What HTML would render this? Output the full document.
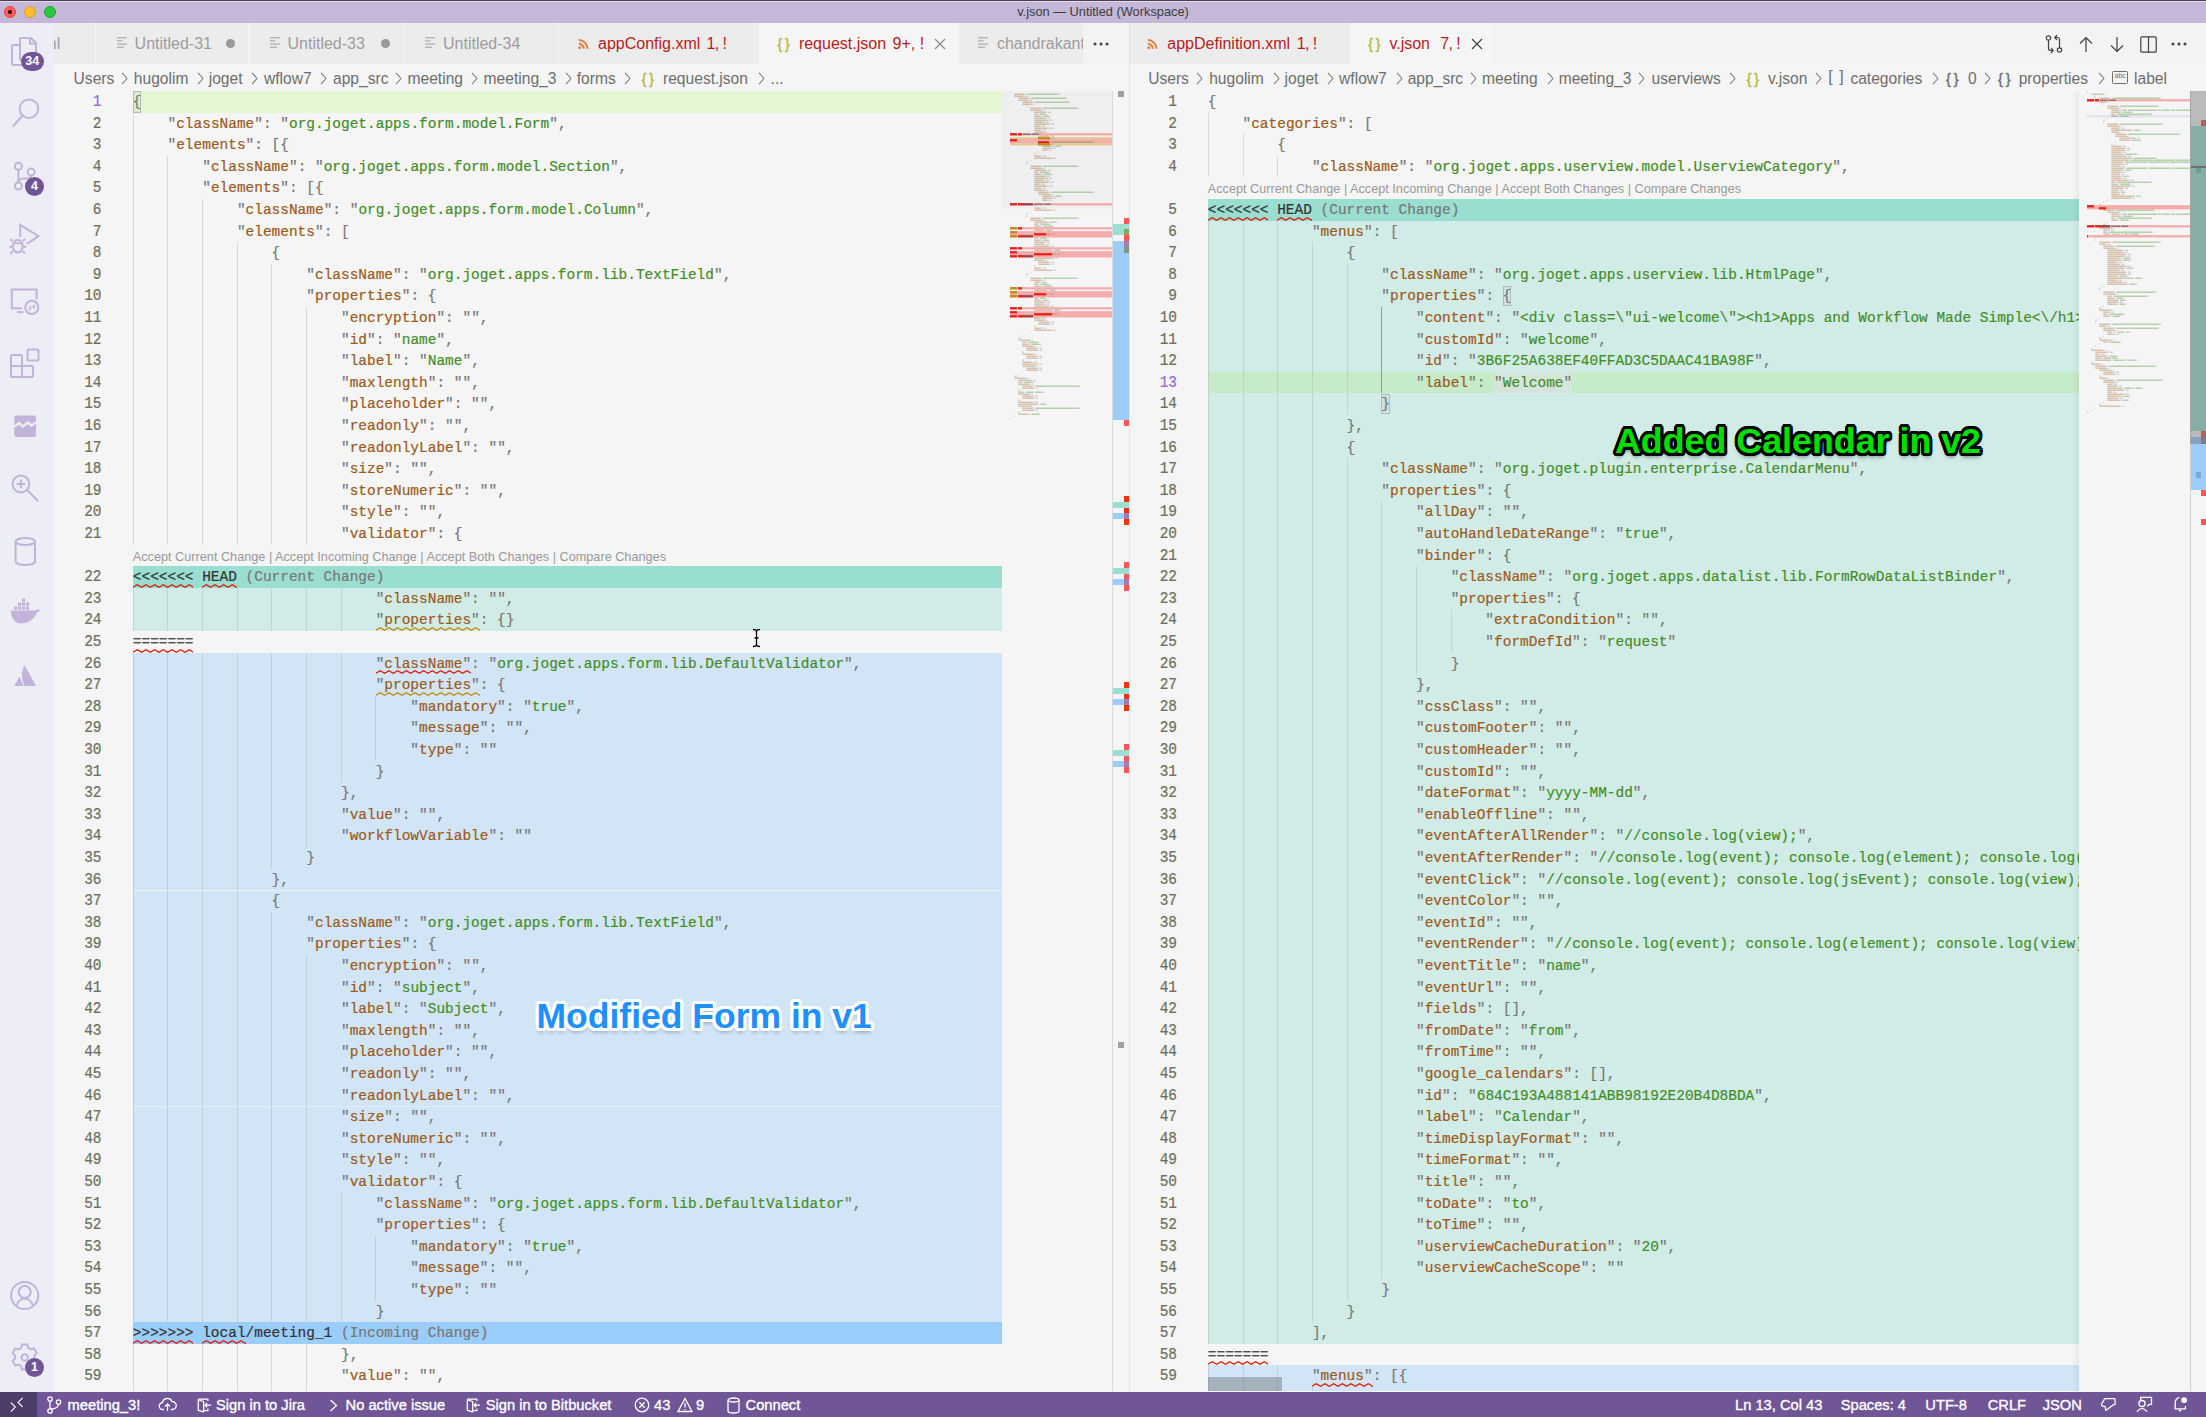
<!DOCTYPE html>
<html><head><meta charset="utf-8"><title>v.json</title>
<style>
html,body{margin:0;padding:0}
body{width:2206px;height:1417px;overflow:hidden;position:relative;background:#f5f5f5;font-family:"Liberation Sans",sans-serif}
div,span{box-sizing:border-box}
.a{position:absolute}
span.a{white-space:nowrap}
svg.a{overflow:visible}
.ttl{left:0;top:4px;width:2206px;text-align:center;font-size:12.8px;color:#3b3b3b;line-height:15px}
.tl{position:absolute;top:5.7px;width:12.5px;height:12.5px;border-radius:50%}
.badge{background:#705697;color:#fff;font-weight:bold;font-size:12.5px;line-height:19px;text-align:center}
.tt{font-size:16px;line-height:19px;color:#9d9d9d}
.tt.err{color:#b71c1c}
.jsn{font-family:"Liberation Sans",sans-serif;line-height:19px;font-weight:normal}
.cr{font-size:15.6px;line-height:18px;color:#6e6e6e}
.st{font-size:14.7px;line-height:17px;color:#fff;-webkit-text-stroke:0.35px #fff}
.clip{position:absolute;overflow:hidden}
.bg{position:absolute;height:21.6px}
.g{position:absolute;width:1px;height:21.6px;background:rgba(170,170,170,0.38)}
.g.ga{background:rgba(119,119,119,0.69)}
.ln{position:absolute;-webkit-text-stroke:0.2px currentColor;transform:translateY(1.5px) scaleY(1.09);transform-origin:0 14.6px;width:60px;text-align:right;font-family:"Liberation Mono",monospace;font-size:14.460px;line-height:21.6px;height:21.6px;color:#6d705b}
.ln.act{color:#9769dc}
.cl{position:absolute;-webkit-text-stroke:0.2px currentColor;transform:translateY(0.9px) scaleY(1.07);transform-origin:0 14.6px;left:0;white-space:pre;font-family:"Liberation Mono",monospace;font-size:14.460px;line-height:21.6px;height:21.6px;color:#777}
.k{color:#9b5a20}
.s{color:#448c27}
.p{color:#777}
.mk{color:#333}
.mk2{color:#505050}
.mc{color:#777}
.lens{position:absolute;transform:translateY(1.7px);font-size:12.7px;line-height:21.6px;height:21.6px;color:#999;white-space:pre}
.ann1{font-size:35.5px;font-weight:bold;color:#1e90ff;white-space:nowrap;line-height:40px;text-shadow:1.60px 0.00px 0 #fff,1.39px 0.80px 0 #fff,0.80px 1.39px 0 #fff,0.00px 1.60px 0 #fff,-0.80px 1.39px 0 #fff,-1.39px 0.80px 0 #fff,-1.60px 0.00px 0 #fff,-1.39px -0.80px 0 #fff,-0.80px -1.39px 0 #fff,-0.00px -1.60px 0 #fff,0.80px -1.39px 0 #fff,1.39px -0.80px 0 #fff,3.00px 0.00px 0 #fff,2.90px 0.78px 0 #fff,2.60px 1.50px 0 #fff,2.12px 2.12px 0 #fff,1.50px 2.60px 0 #fff,0.78px 2.90px 0 #fff,0.00px 3.00px 0 #fff,-0.78px 2.90px 0 #fff,-1.50px 2.60px 0 #fff,-2.12px 2.12px 0 #fff,-2.60px 1.50px 0 #fff,-2.90px 0.78px 0 #fff,-3.00px 0.00px 0 #fff,-2.90px -0.78px 0 #fff,-2.60px -1.50px 0 #fff,-2.12px -2.12px 0 #fff,-1.50px -2.60px 0 #fff,-0.78px -2.90px 0 #fff,-0.00px -3.00px 0 #fff,0.78px -2.90px 0 #fff,1.50px -2.60px 0 #fff,2.12px -2.12px 0 #fff,2.60px -1.50px 0 #fff,2.90px -0.78px 0 #fff,0 3.5px 4px rgba(0,0,0,0.35)}
.ann2{font-size:35.8px;font-weight:bold;color:#00e000;white-space:nowrap;line-height:40px;text-shadow:1.60px 0.00px 0 #000,1.39px 0.80px 0 #000,0.80px 1.39px 0 #000,0.00px 1.60px 0 #000,-0.80px 1.39px 0 #000,-1.39px 0.80px 0 #000,-1.60px 0.00px 0 #000,-1.39px -0.80px 0 #000,-0.80px -1.39px 0 #000,-0.00px -1.60px 0 #000,0.80px -1.39px 0 #000,1.39px -0.80px 0 #000,3.00px 0.00px 0 #000,2.90px 0.78px 0 #000,2.60px 1.50px 0 #000,2.12px 2.12px 0 #000,1.50px 2.60px 0 #000,0.78px 2.90px 0 #000,0.00px 3.00px 0 #000,-0.78px 2.90px 0 #000,-1.50px 2.60px 0 #000,-2.12px 2.12px 0 #000,-2.60px 1.50px 0 #000,-2.90px 0.78px 0 #000,-3.00px 0.00px 0 #000,-2.90px -0.78px 0 #000,-2.60px -1.50px 0 #000,-2.12px -2.12px 0 #000,-1.50px -2.60px 0 #000,-0.78px -2.90px 0 #000,-0.00px -3.00px 0 #000,0.78px -2.90px 0 #000,1.50px -2.60px 0 #000,2.12px -2.12px 0 #000,2.60px -1.50px 0 #000,2.90px -0.78px 0 #000,0 3.5px 4px rgba(0,0,0,0.5)}

</style></head><body>
<svg width="0" height="0" style="position:absolute">
<defs>
<pattern id="sqr" x="0" y="0" width="8.66" height="4.3" patternUnits="userSpaceOnUse"><path d="M-2.17 0.7 L2.6 3.6 L6.93 0.7 L11.26 3.6" fill="none" stroke="#e51400" stroke-width="1.25"/><path d="M-6.5 3.6 L-2.17 0.7" fill="none" stroke="#e51400" stroke-width="1.25"/></pattern>
<pattern id="sqy" x="0" y="0" width="8.66" height="4.3" patternUnits="userSpaceOnUse"><path d="M-2.17 0.7 L2.6 3.6 L6.93 0.7 L11.26 3.6" fill="none" stroke="#bf8803" stroke-width="1.25"/><path d="M-6.5 3.6 L-2.17 0.7" fill="none" stroke="#bf8803" stroke-width="1.25"/></pattern>
<pattern id="mk" x="0" y="0" width="1" height="2" patternUnits="userSpaceOnUse"><rect x="0" y="0" width="0.8" height="2" fill="rgba(155,90,32,0.42)"/></pattern>
<pattern id="ms" x="0" y="0" width="1" height="2" patternUnits="userSpaceOnUse"><rect x="0" y="0" width="0.8" height="2" fill="rgba(68,140,39,0.45)"/></pattern>
<pattern id="mp" x="0" y="0" width="1" height="2" patternUnits="userSpaceOnUse"><rect x="0" y="0" width="0.8" height="2" fill="rgba(119,119,119,0.35)"/></pattern>
<pattern id="mm" x="0" y="0" width="1" height="2" patternUnits="userSpaceOnUse"><rect x="0" y="0" width="0.8" height="2" fill="rgba(51,51,51,0.6)"/></pattern>
</defs>
</svg>

<div class="a" style="left:0;top:0;width:2206px;height:1px;background:#4a3f55"></div>
<div class="a" style="left:0;top:1px;width:2206px;height:22px;background:#c4b7d7"></div>
<div class="a" style="left:0;top:1px;width:2206px;height:1px;background:#e2dbea"></div>
<div class="a ttl">v.json — Untitled (Workspace)</div>
<div class="tl" style="left:3.9px;background:#fe5f57;border:0.5px solid #e14640"></div>
<div class="a" style="left:8.1px;top:10.1px;width:3.6px;height:3.6px;border-radius:50%;background:#3a0000"></div>
<div class="tl" style="left:23.8px;background:#febc2e;border:0.5px solid #dfa023"></div>
<div class="tl" style="left:43.8px;background:#28c840;border:0.5px solid #1aab29"></div>
<div class="a" style="left:0;top:23px;width:54px;height:1369px;background:#ededf5"></div>
<svg class="a" style="left:0.0px;top:23.0px" width="54" height="54" viewBox="0 0 54 54"><g fill="none" stroke="#c1b3d9" stroke-width="2"><path d="M19.5 22H13a1 1 0 0 0-1 1V41a1 1 0 0 0 1 1H26"/><path d="M20 15V36a1 1 0 0 0 1 1H35a1 1 0 0 0 1-1V20l-5-5H21a1 1 0 0 0-1 1z"/><path d="M30 15v5.5h6"/></g></svg>
<div class="a badge" style="left:20.5px;top:51.5px;width:23.5px;height:19.5px;border-radius:10px">34</div>
<svg class="a" style="left:0.0px;top:84.0px" width="54" height="54" viewBox="0 0 54 54"><g fill="none" stroke="#c1b3d9" stroke-width="2"><circle cx="29" cy="24.7" r="9.3"/><path d="M22 32L13 42.5"/></g></svg>
<svg class="a" style="left:0.0px;top:145.0px" width="54" height="54" viewBox="0 0 54 54"><g fill="none" stroke="#c1b3d9" stroke-width="2" stroke-width="1.8"><circle cx="18.4" cy="21.3" r="3.5"/><circle cx="31.1" cy="26.9" r="3.5"/><circle cx="18.4" cy="41" r="3.5"/><path d="M18.4 24.8V37.5"/><path d="M18.4 37 Q19 33.6 24 33.6 Q31.1 33.6 31.1 30.4"/></g></svg>
<div class="a badge" style="left:25px;top:177.2px;width:19px;height:19px;border-radius:50%">4</div>
<svg class="a" style="left:0.0px;top:207.0px" width="54" height="54" viewBox="0 0 54 54"><g fill="none" stroke="#c1b3d9" stroke-width="2" stroke-width="1.8"><path d="M20.2 29.9V17.9L38.5 29.2L26.9 36.9"/><ellipse cx="17.7" cy="39.2" rx="4.9" ry="6.2"/><path d="M12.8 36.3H22.6M12.6 34.2L10.3 32M22.8 34.2L25.1 32M12.6 39.8H9.2M22.8 39.8H26.2M12.8 44.2L10.3 46.4M22.6 44.2L25.1 46.4"/></g></svg>
<svg class="a" style="left:0.0px;top:270.0px" width="54" height="54" viewBox="0 0 54 54"><g fill="none" stroke="#c1b3d9" stroke-width="2" stroke-width="1.8"><path d="M22 38.2H11.8V19.6H36.6V29.2"/><path d="M17.1 42.2H23.6"/><circle cx="31.8" cy="37.4" r="6.6"/><path d="M29 36.4l1.9 1.9-1.9 2M34.8 34.9l-1.8 1.9 2 1.8" stroke-width="1.4"/></g></svg>
<svg class="a" style="left:0.0px;top:337.0px" width="54" height="54" viewBox="0 0 54 54"><g fill="none" stroke="#c1b3d9" stroke-width="2"><rect x="11" y="18" width="11" height="11" rx="1"/><rect x="11" y="29" width="11" height="11" rx="1"/><rect x="22" y="29" width="11" height="11" rx="1"/><rect x="27.5" y="12.5" width="11" height="11" rx="1"/></g></svg>
<svg class="a" style="left:0.0px;top:399.0px" width="54" height="54" viewBox="0 0 54 54"><rect x="14.3" y="16.5" width="21.7" height="21.5" rx="2.5" fill="#c1b3d9"/><path d="M14.3 27.5l5 -3.5 3.5 3.5 5 -4 3.5 3 4.7 -3" fill="none" stroke="#ededf5" stroke-width="2.4"/></svg>
<svg class="a" style="left:0.0px;top:460.0px" width="54" height="54" viewBox="0 0 54 54"><g fill="none" stroke="#c1b3d9" stroke-width="2"><circle cx="20.9" cy="23.9" r="8.4"/><path d="M27 30L38 41"/><path d="M20.9 19.5V28.3M16.5 23.9H25.3"/></g></svg>
<svg class="a" style="left:0.0px;top:524.0px" width="54" height="54" viewBox="0 0 54 54"><g fill="none" stroke="#c1b3d9" stroke-width="2"><ellipse cx="25.3" cy="17.5" rx="9.7" ry="3.6"/><path d="M15.6 17.5V37.5c0 2 4.3 3.6 9.7 3.6s9.7-1.6 9.7-3.6V17.5"/></g></svg>
<svg class="a" style="left:0.0px;top:586.0px" width="54" height="54" viewBox="0 0 54 54"><g fill="#c1b3d9"><path d="M11 24.5H35.5c1.5-1.5 3.5-1.2 4.5-0.5-0.5 1.2-1.5 2-3 2.2C34.5 33 28 37.5 21 37.5 14.5 37.5 11 32 11 24.5z"/><rect x="14" y="20.5" width="3.2" height="3.2"/><rect x="18" y="20.5" width="3.2" height="3.2"/><rect x="22" y="20.5" width="3.2" height="3.2"/><rect x="26" y="20.5" width="3.2" height="3.2"/><rect x="18" y="16.5" width="3.2" height="3.2"/><rect x="22" y="16.5" width="3.2" height="3.2"/><rect x="26" y="16.5" width="3.2" height="3.2"/><rect x="22" y="12.5" width="3.2" height="3.2"/></g></svg>
<svg class="a" style="left:0.0px;top:650.0px" width="54" height="54" viewBox="0 0 54 54"><g fill="#c1b3d9"><path d="M24.5 15C21.5 21 21 28 24.5 36H36z"/><path d="M19.5 26.5L14.3 36H23.5z"/></g></svg>
<svg class="a" style="left:0.0px;top:1268.0px" width="54" height="54" viewBox="0 0 54 54"><g fill="none" stroke="#c1b3d9" stroke-width="2" stroke-width="1.6"><circle cx="24.7" cy="27.5" r="13.6"/><circle cx="24.7" cy="24" r="6"/><path d="M16.5 37.5c2-5 4.5-7 8.2-7s6.2 2 8.2 7"/></g></svg>
<svg class="a" style="left:0.0px;top:1329.0px" width="54" height="54" viewBox="0 0 54 54"><g fill="none" stroke="#c1b3d9" stroke-width="2" stroke-width="1.7"><path d="M22 15.5h5.4l0.8 3.4 2.6 1.5 3.3-1 2.7 4.7-2.5 2.4v3l2.5 2.4-2.7 4.7-3.3-1-2.6 1.5-0.8 3.4H22l-0.8-3.4-2.6-1.5-3.3 1-2.7-4.7 2.5-2.4v-3l-2.5-2.4 2.7-4.7 3.3 1 2.6-1.5z"/><circle cx="24.7" cy="28.5" r="3.2"/></g></svg>
<div class="a badge" style="left:25px;top:1358.2px;width:19px;height:19px;border-radius:50%">1</div>
<div class="a" style="left:54px;top:23px;width:1075px;height:41px;background:#f3f3f3"></div>
<div class="a" style="left:1130px;top:23px;width:1076px;height:41px;background:#f3f3f3"></div>
<div class="a" style="left:54.0px;top:23px;width:41.3px;height:41px;background:#ececec"></div>
<div class="a" style="left:96.3px;top:23px;width:152.2px;height:41px;background:#ececec"></div>
<div class="a" style="left:249.5px;top:23px;width:153.7px;height:41px;background:#ececec"></div>
<div class="a" style="left:404.2px;top:23px;width:153.5px;height:41px;background:#ececec"></div>
<div class="a" style="left:558.7px;top:23px;width:200.3px;height:41px;background:#ececec"></div>
<div class="a" style="left:958.5px;top:23px;width:124.5px;height:41px;background:#ececec"></div>
<div class="a" style="left:1130.0px;top:23px;width:220.0px;height:41px;background:#ececec"></div>
<div class="a" style="left:759px;top:23px;width:199px;height:41px;background:#f5f5f5"></div>
<div class="a" style="left:1350px;top:23px;width:144px;height:41px;background:#f5f5f5"></div>
<div class="a" style="left:54px;top:23px;width:41px;height:41px;overflow:hidden"><span class="a tt" style="left:-10.7px;top:11.0px;">ml</span></div>
<svg class="a" style="left:117.0px;top:37.1px" width="11" height="11" viewBox="0 0 11 11"><g fill="#b5b5b5"><rect x="0" y="0.0" width="10.0" height="1.4"/><rect x="0" y="3.2" width="5.5" height="1.4"/><rect x="0" y="6.4" width="10.0" height="1.4"/><rect x="0" y="9.6" width="7.0" height="1.4"/></g></svg>
<span class="a tt" style="left:134.6px;top:34.0px;">Untitled-31</span>
<div class="a" style="left:225.8px;top:38.5px;width:9.4px;height:9.4px;border-radius:50%;background:#999"></div>
<svg class="a" style="left:270.0px;top:37.1px" width="11" height="11" viewBox="0 0 11 11"><g fill="#b5b5b5"><rect x="0" y="0.0" width="10.0" height="1.4"/><rect x="0" y="3.2" width="5.5" height="1.4"/><rect x="0" y="6.4" width="10.0" height="1.4"/><rect x="0" y="9.6" width="7.0" height="1.4"/></g></svg>
<span class="a tt" style="left:287.5px;top:34.0px;">Untitled-33</span>
<div class="a" style="left:380.9px;top:38.5px;width:9.4px;height:9.4px;border-radius:50%;background:#999"></div>
<svg class="a" style="left:424.5px;top:37.1px" width="11" height="11" viewBox="0 0 11 11"><g fill="#b5b5b5"><rect x="0" y="0.0" width="10.0" height="1.4"/><rect x="0" y="3.2" width="5.5" height="1.4"/><rect x="0" y="6.4" width="10.0" height="1.4"/><rect x="0" y="9.6" width="7.0" height="1.4"/></g></svg>
<span class="a tt" style="left:443.0px;top:34.0px;">Untitled-34</span>
<svg class="a" style="left:578.0px;top:39.0px" width="10.5" height="10.5" viewBox="0 0 10.5 10.5"><g transform="scale(0.875)"><g fill="none" stroke="#e37933" stroke-width="2.2"><path d="M1 5.5a5.5 5.5 0 0 1 5.5 5.5"/><path d="M1 1.2a9.8 9.8 0 0 1 9.8 9.8"/></g><circle cx="2" cy="10" r="1.6" fill="#e37933"/></g></svg>
<span class="a tt err" style="left:598.0px;top:34.0px;">appConfig.xml</span>
<span class="a tt err" style="left:706.4px;top:34.0px;letter-spacing:-0.6px">1, !</span>
<span class="a jsn" style="left:777.5px;top:34.5px;color:#b7b73b;font-size:14px;-webkit-text-stroke:0.4px #b7b73b">{&thinsp;}</span>
<span class="a tt err" style="left:798.9px;top:34.0px;">request.json</span>
<span class="a tt err" style="left:892.5px;top:34.0px;">9+, !</span>
<svg class="a" style="left:934.0px;top:38.0px" width="12" height="12" viewBox="0 0 12 12"><path d="M1 1L11 11M11 1L1 11" stroke="#8a8a8a" stroke-width="1.2"/></svg>
<svg class="a" style="left:978.4px;top:37.1px" width="11" height="11" viewBox="0 0 11 11"><g fill="#b5b5b5"><rect x="0" y="0.0" width="10.0" height="1.4"/><rect x="0" y="3.2" width="5.5" height="1.4"/><rect x="0" y="6.4" width="10.0" height="1.4"/><rect x="0" y="9.6" width="7.0" height="1.4"/></g></svg>
<div class="a" style="left:958px;top:23px;width:125px;height:41px;overflow:hidden"><span class="a tt" style="left:38.9px;top:11.0px;">chandrakant</span></div>
<svg class="a" style="left:1093.0px;top:42.0px" width="16" height="4" viewBox="0 0 16 4"><g fill="#424242"><circle cx="2" cy="2" r="1.5"/><circle cx="8" cy="2" r="1.5"/><circle cx="14" cy="2" r="1.5"/></g></svg>
<svg class="a" style="left:1147.0px;top:39.0px" width="10.5" height="10.5" viewBox="0 0 10.5 10.5"><g transform="scale(0.875)"><g fill="none" stroke="#e37933" stroke-width="2.2"><path d="M1 5.5a5.5 5.5 0 0 1 5.5 5.5"/><path d="M1 1.2a9.8 9.8 0 0 1 9.8 9.8"/></g><circle cx="2" cy="10" r="1.6" fill="#e37933"/></g></svg>
<span class="a tt err" style="left:1167.3px;top:34.0px;">appDefinition.xml</span>
<span class="a tt err" style="left:1296.8px;top:34.0px;letter-spacing:-0.6px">1, !</span>
<span class="a jsn" style="left:1368.3px;top:34.5px;color:#b7b73b;font-size:14px;-webkit-text-stroke:0.4px #b7b73b">{&thinsp;}</span>
<span class="a tt err" style="left:1389.4px;top:34.0px;">v.json</span>
<span class="a tt err" style="left:1440.2px;top:34.0px;letter-spacing:-0.6px">7, !</span>
<svg class="a" style="left:1471.0px;top:38.0px" width="12" height="12" viewBox="0 0 12 12"><path d="M1 1L11 11M11 1L1 11" stroke="#424242" stroke-width="1.2"/></svg>
<svg class="a" style="left:2045.0px;top:35.0px" width="18" height="18" viewBox="0 0 18 18"><g fill="none" stroke="#424242" stroke-width="1.2"><circle cx="3.5" cy="3" r="2.2"/><circle cx="14.5" cy="15" r="2.2"/><path d="M3.5 5.2V13.5a2 2 0 0 0 2 2H8"/><path d="M6 13l2.2 2.5L6 18"/><path d="M14.5 12.8V4.5a2 2 0 0 0-2-2H10"/><path d="M12 0l-2.2 2.5L12 5"/></g></svg>
<svg class="a" style="left:2078.0px;top:36.0px" width="16" height="17" viewBox="0 0 16 17"><g fill="none" stroke="#424242" stroke-width="1.2"><path d="M8 16V1.5M2 7.5L8 1.5L14 7.5"/></g></svg>
<svg class="a" style="left:2109.0px;top:36.0px" width="16" height="17" viewBox="0 0 16 17"><g fill="none" stroke="#424242" stroke-width="1.2"><path d="M8 1V15.5M2 9.5L8 15.5L14 9.5"/></g></svg>
<svg class="a" style="left:2139.5px;top:35.5px" width="17" height="17" viewBox="0 0 17 17"><g fill="none" stroke="#424242" stroke-width="1.2"><rect x="0.8" y="0.8" width="15.4" height="15.4" rx="1"/><path d="M8.5 1V16"/></g></svg>
<svg class="a" style="left:2171.0px;top:42.0px" width="16" height="4" viewBox="0 0 16 4"><g fill="#424242"><circle cx="2" cy="2" r="1.5"/><circle cx="8" cy="2" r="1.5"/><circle cx="14" cy="2" r="1.5"/></g></svg>
<span class="a cr" style="left:73.6px;top:69.5px;">Users</span>
<svg class="a" style="left:120.6px;top:71.5px" width="7" height="13" viewBox="0 0 7 13"><path d="M1 0.8L6 6.5L1 12.2" fill="none" stroke="#7d7d7d" stroke-width="1.05"/></svg>
<span class="a cr" style="left:133.8px;top:69.5px;">hugolim</span>
<svg class="a" style="left:196.8px;top:71.5px" width="7" height="13" viewBox="0 0 7 13"><path d="M1 0.8L6 6.5L1 12.2" fill="none" stroke="#7d7d7d" stroke-width="1.05"/></svg>
<span class="a cr" style="left:208.7px;top:69.5px;">joget</span>
<svg class="a" style="left:251.3px;top:71.5px" width="7" height="13" viewBox="0 0 7 13"><path d="M1 0.8L6 6.5L1 12.2" fill="none" stroke="#7d7d7d" stroke-width="1.05"/></svg>
<span class="a cr" style="left:264.0px;top:69.5px;">wflow7</span>
<svg class="a" style="left:320.4px;top:71.5px" width="7" height="13" viewBox="0 0 7 13"><path d="M1 0.8L6 6.5L1 12.2" fill="none" stroke="#7d7d7d" stroke-width="1.05"/></svg>
<span class="a cr" style="left:333.0px;top:69.5px;">app_src</span>
<svg class="a" style="left:394.8px;top:71.5px" width="7" height="13" viewBox="0 0 7 13"><path d="M1 0.8L6 6.5L1 12.2" fill="none" stroke="#7d7d7d" stroke-width="1.05"/></svg>
<span class="a cr" style="left:407.5px;top:69.5px;">meeting</span>
<svg class="a" style="left:471.0px;top:71.5px" width="7" height="13" viewBox="0 0 7 13"><path d="M1 0.8L6 6.5L1 12.2" fill="none" stroke="#7d7d7d" stroke-width="1.05"/></svg>
<span class="a cr" style="left:483.6px;top:69.5px;">meeting_3</span>
<svg class="a" style="left:564.5px;top:71.5px" width="7" height="13" viewBox="0 0 7 13"><path d="M1 0.8L6 6.5L1 12.2" fill="none" stroke="#7d7d7d" stroke-width="1.05"/></svg>
<span class="a cr" style="left:576.7px;top:69.5px;">forms</span>
<svg class="a" style="left:624.3px;top:71.5px" width="7" height="13" viewBox="0 0 7 13"><path d="M1 0.8L6 6.5L1 12.2" fill="none" stroke="#7d7d7d" stroke-width="1.05"/></svg>
<span class="a jsn" style="left:641.7px;top:69.5px;color:#b7b73b;font-size:14px;-webkit-text-stroke:0.4px #b7b73b">{&thinsp;}</span>
<span class="a cr" style="left:663.0px;top:69.5px;">request.json</span>
<svg class="a" style="left:757.6px;top:71.5px" width="7" height="13" viewBox="0 0 7 13"><path d="M1 0.8L6 6.5L1 12.2" fill="none" stroke="#7d7d7d" stroke-width="1.05"/></svg>
<span class="a cr" style="left:770.6px;top:69.5px;">...</span>
<span class="a cr" style="left:1148.2px;top:69.5px;">Users</span>
<svg class="a" style="left:1196.0px;top:71.5px" width="7" height="13" viewBox="0 0 7 13"><path d="M1 0.8L6 6.5L1 12.2" fill="none" stroke="#7d7d7d" stroke-width="1.05"/></svg>
<span class="a cr" style="left:1209.2px;top:69.5px;">hugolim</span>
<svg class="a" style="left:1272.6px;top:71.5px" width="7" height="13" viewBox="0 0 7 13"><path d="M1 0.8L6 6.5L1 12.2" fill="none" stroke="#7d7d7d" stroke-width="1.05"/></svg>
<span class="a cr" style="left:1284.6px;top:69.5px;">joget</span>
<svg class="a" style="left:1327.2px;top:71.5px" width="7" height="13" viewBox="0 0 7 13"><path d="M1 0.8L6 6.5L1 12.2" fill="none" stroke="#7d7d7d" stroke-width="1.05"/></svg>
<span class="a cr" style="left:1339.1px;top:69.5px;">wflow7</span>
<svg class="a" style="left:1395.8px;top:71.5px" width="7" height="13" viewBox="0 0 7 13"><path d="M1 0.8L6 6.5L1 12.2" fill="none" stroke="#7d7d7d" stroke-width="1.05"/></svg>
<span class="a cr" style="left:1407.7px;top:69.5px;">app_src</span>
<svg class="a" style="left:1470.1px;top:71.5px" width="7" height="13" viewBox="0 0 7 13"><path d="M1 0.8L6 6.5L1 12.2" fill="none" stroke="#7d7d7d" stroke-width="1.05"/></svg>
<span class="a cr" style="left:1482.1px;top:69.5px;">meeting</span>
<svg class="a" style="left:1546.8px;top:71.5px" width="7" height="13" viewBox="0 0 7 13"><path d="M1 0.8L6 6.5L1 12.2" fill="none" stroke="#7d7d7d" stroke-width="1.05"/></svg>
<span class="a cr" style="left:1558.7px;top:69.5px;">meeting_3</span>
<svg class="a" style="left:1638.2px;top:71.5px" width="7" height="13" viewBox="0 0 7 13"><path d="M1 0.8L6 6.5L1 12.2" fill="none" stroke="#7d7d7d" stroke-width="1.05"/></svg>
<span class="a cr" style="left:1651.6px;top:69.5px;">userviews</span>
<svg class="a" style="left:1728.5px;top:71.5px" width="7" height="13" viewBox="0 0 7 13"><path d="M1 0.8L6 6.5L1 12.2" fill="none" stroke="#7d7d7d" stroke-width="1.05"/></svg>
<span class="a jsn" style="left:1746.8px;top:69.5px;color:#b7b73b;font-size:14px;-webkit-text-stroke:0.4px #b7b73b">{&thinsp;}</span>
<span class="a cr" style="left:1767.9px;top:69.5px;">v.json</span>
<svg class="a" style="left:1814.8px;top:71.5px" width="7" height="13" viewBox="0 0 7 13"><path d="M1 0.8L6 6.5L1 12.2" fill="none" stroke="#7d7d7d" stroke-width="1.05"/></svg>
<span class="a cr" style="left:1828.3px;top:68.0px;font-size:16px">[&thinsp;&thinsp;]</span>
<span class="a cr" style="left:1850.4px;top:69.5px;">categories</span>
<svg class="a" style="left:1931.6px;top:71.5px" width="7" height="13" viewBox="0 0 7 13"><path d="M1 0.8L6 6.5L1 12.2" fill="none" stroke="#7d7d7d" stroke-width="1.05"/></svg>
<span class="a jsn" style="left:1946.0px;top:69.5px;color:#6f6f6f;font-size:14.5px;-webkit-text-stroke:0.4px #6f6f6f">{&thinsp;}</span>
<span class="a cr" style="left:1967.9px;top:69.5px;">0</span>
<svg class="a" style="left:1983.6px;top:71.5px" width="7" height="13" viewBox="0 0 7 13"><path d="M1 0.8L6 6.5L1 12.2" fill="none" stroke="#7d7d7d" stroke-width="1.05"/></svg>
<span class="a jsn" style="left:1998.0px;top:69.5px;color:#6f6f6f;font-size:14.5px;-webkit-text-stroke:0.4px #6f6f6f">{&thinsp;}</span>
<span class="a cr" style="left:2018.7px;top:69.5px;">properties</span>
<svg class="a" style="left:2098.4px;top:71.5px" width="7" height="13" viewBox="0 0 7 13"><path d="M1 0.8L6 6.5L1 12.2" fill="none" stroke="#7d7d7d" stroke-width="1.05"/></svg>
<div class="a" style="left:2111.9px;top:71px;width:16.5px;height:13px;border:1.3px solid #707070;border-radius:1.5px"></div>
<span class="a " style="left:2114.5px;top:71.5px;font-size:7px;line-height:8px;color:#707070">abc</span>
<span class="a cr" style="left:2134.0px;top:69.5px;">label</span>
<div class="clip" style="left:54px;top:91px;width:1075px;height:1300px"><div class="a" style="left:-54px;top:-91px;width:2206px;height:1417px">
<div class="bg" style="left:132.8px;top:91.00px;width:869.2px;background:#e4f6d4"></div>
<div class="bg" style="left:132.8px;top:566.20px;width:869.2px;background:rgba(64,200,174,0.5)"></div>
<div class="bg" style="left:132.8px;top:587.80px;width:869.2px;background:rgba(64,200,174,0.2)"></div>
<div class="bg" style="left:132.8px;top:609.40px;width:869.2px;background:rgba(64,200,174,0.2)"></div>
<div class="bg" style="left:132.8px;top:652.60px;width:869.2px;background:rgba(64,166,255,0.2)"></div>
<div class="bg" style="left:132.8px;top:674.20px;width:869.2px;background:rgba(64,166,255,0.2)"></div>
<div class="bg" style="left:132.8px;top:695.80px;width:869.2px;background:rgba(64,166,255,0.2)"></div>
<div class="bg" style="left:132.8px;top:717.40px;width:869.2px;background:rgba(64,166,255,0.2)"></div>
<div class="bg" style="left:132.8px;top:739.00px;width:869.2px;background:rgba(64,166,255,0.2)"></div>
<div class="bg" style="left:132.8px;top:760.60px;width:869.2px;background:rgba(64,166,255,0.2)"></div>
<div class="bg" style="left:132.8px;top:782.20px;width:869.2px;background:rgba(64,166,255,0.2)"></div>
<div class="bg" style="left:132.8px;top:803.80px;width:869.2px;background:rgba(64,166,255,0.2)"></div>
<div class="bg" style="left:132.8px;top:825.40px;width:869.2px;background:rgba(64,166,255,0.2)"></div>
<div class="bg" style="left:132.8px;top:847.00px;width:869.2px;background:rgba(64,166,255,0.2)"></div>
<div class="bg" style="left:132.8px;top:868.60px;width:869.2px;background:rgba(64,166,255,0.2)"></div>
<div class="bg" style="left:132.8px;top:890.20px;width:869.2px;background:rgba(64,166,255,0.2)"></div>
<div class="bg" style="left:132.8px;top:911.80px;width:869.2px;background:rgba(64,166,255,0.2)"></div>
<div class="bg" style="left:132.8px;top:933.40px;width:869.2px;background:rgba(64,166,255,0.2)"></div>
<div class="bg" style="left:132.8px;top:955.00px;width:869.2px;background:rgba(64,166,255,0.2)"></div>
<div class="bg" style="left:132.8px;top:976.60px;width:869.2px;background:rgba(64,166,255,0.2)"></div>
<div class="bg" style="left:132.8px;top:998.20px;width:869.2px;background:rgba(64,166,255,0.2)"></div>
<div class="bg" style="left:132.8px;top:1019.80px;width:869.2px;background:rgba(64,166,255,0.2)"></div>
<div class="bg" style="left:132.8px;top:1041.40px;width:869.2px;background:rgba(64,166,255,0.2)"></div>
<div class="bg" style="left:132.8px;top:1063.00px;width:869.2px;background:rgba(64,166,255,0.2)"></div>
<div class="bg" style="left:132.8px;top:1084.60px;width:869.2px;background:rgba(64,166,255,0.2)"></div>
<div class="bg" style="left:132.8px;top:1106.20px;width:869.2px;background:rgba(64,166,255,0.2)"></div>
<div class="bg" style="left:132.8px;top:1127.80px;width:869.2px;background:rgba(64,166,255,0.2)"></div>
<div class="bg" style="left:132.8px;top:1149.40px;width:869.2px;background:rgba(64,166,255,0.2)"></div>
<div class="bg" style="left:132.8px;top:1171.00px;width:869.2px;background:rgba(64,166,255,0.2)"></div>
<div class="bg" style="left:132.8px;top:1192.60px;width:869.2px;background:rgba(64,166,255,0.2)"></div>
<div class="bg" style="left:132.8px;top:1214.20px;width:869.2px;background:rgba(64,166,255,0.2)"></div>
<div class="bg" style="left:132.8px;top:1235.80px;width:869.2px;background:rgba(64,166,255,0.2)"></div>
<div class="bg" style="left:132.8px;top:1257.40px;width:869.2px;background:rgba(64,166,255,0.2)"></div>
<div class="bg" style="left:132.8px;top:1279.00px;width:869.2px;background:rgba(64,166,255,0.2)"></div>
<div class="bg" style="left:132.8px;top:1300.60px;width:869.2px;background:rgba(64,166,255,0.2)"></div>
<div class="bg" style="left:132.8px;top:1322.20px;width:869.2px;background:rgba(64,166,255,0.5)"></div>
<div class="a" style="left:133.0px;top:91.2px;width:8.0px;height:21.4px;border:1px solid #b9b9b9;background:rgba(0,0,0,0.03)"></div>
<div class="a" style="left:133px;top:889.8px;width:869px;height:1px;background:rgba(255,255,255,0.6)"></div>
<div class="a" style="left:133px;top:1105.8px;width:869px;height:1px;background:rgba(255,255,255,0.35)"></div>
<div class="g" style="left:133px;top:112.60px"></div>
<div class="g" style="left:133px;top:134.20px"></div>
<div class="g" style="left:133px;top:155.80px"></div>
<div class="g" style="left:167px;top:155.80px"></div>
<div class="g" style="left:133px;top:177.40px"></div>
<div class="g" style="left:167px;top:177.40px"></div>
<div class="g" style="left:133px;top:199.00px"></div>
<div class="g" style="left:167px;top:199.00px"></div>
<div class="g" style="left:202px;top:199.00px"></div>
<div class="g" style="left:133px;top:220.60px"></div>
<div class="g" style="left:167px;top:220.60px"></div>
<div class="g" style="left:202px;top:220.60px"></div>
<div class="g" style="left:133px;top:242.20px"></div>
<div class="g" style="left:167px;top:242.20px"></div>
<div class="g" style="left:202px;top:242.20px"></div>
<div class="g" style="left:237px;top:242.20px"></div>
<div class="g" style="left:133px;top:263.80px"></div>
<div class="g" style="left:167px;top:263.80px"></div>
<div class="g" style="left:202px;top:263.80px"></div>
<div class="g" style="left:237px;top:263.80px"></div>
<div class="g" style="left:271px;top:263.80px"></div>
<div class="g" style="left:133px;top:285.40px"></div>
<div class="g" style="left:167px;top:285.40px"></div>
<div class="g" style="left:202px;top:285.40px"></div>
<div class="g" style="left:237px;top:285.40px"></div>
<div class="g" style="left:271px;top:285.40px"></div>
<div class="g" style="left:133px;top:307.00px"></div>
<div class="g" style="left:167px;top:307.00px"></div>
<div class="g" style="left:202px;top:307.00px"></div>
<div class="g" style="left:237px;top:307.00px"></div>
<div class="g" style="left:271px;top:307.00px"></div>
<div class="g" style="left:306px;top:307.00px"></div>
<div class="g" style="left:133px;top:328.60px"></div>
<div class="g" style="left:167px;top:328.60px"></div>
<div class="g" style="left:202px;top:328.60px"></div>
<div class="g" style="left:237px;top:328.60px"></div>
<div class="g" style="left:271px;top:328.60px"></div>
<div class="g" style="left:306px;top:328.60px"></div>
<div class="g" style="left:133px;top:350.20px"></div>
<div class="g" style="left:167px;top:350.20px"></div>
<div class="g" style="left:202px;top:350.20px"></div>
<div class="g" style="left:237px;top:350.20px"></div>
<div class="g" style="left:271px;top:350.20px"></div>
<div class="g" style="left:306px;top:350.20px"></div>
<div class="g" style="left:133px;top:371.80px"></div>
<div class="g" style="left:167px;top:371.80px"></div>
<div class="g" style="left:202px;top:371.80px"></div>
<div class="g" style="left:237px;top:371.80px"></div>
<div class="g" style="left:271px;top:371.80px"></div>
<div class="g" style="left:306px;top:371.80px"></div>
<div class="g" style="left:133px;top:393.40px"></div>
<div class="g" style="left:167px;top:393.40px"></div>
<div class="g" style="left:202px;top:393.40px"></div>
<div class="g" style="left:237px;top:393.40px"></div>
<div class="g" style="left:271px;top:393.40px"></div>
<div class="g" style="left:306px;top:393.40px"></div>
<div class="g" style="left:133px;top:415.00px"></div>
<div class="g" style="left:167px;top:415.00px"></div>
<div class="g" style="left:202px;top:415.00px"></div>
<div class="g" style="left:237px;top:415.00px"></div>
<div class="g" style="left:271px;top:415.00px"></div>
<div class="g" style="left:306px;top:415.00px"></div>
<div class="g" style="left:133px;top:436.60px"></div>
<div class="g" style="left:167px;top:436.60px"></div>
<div class="g" style="left:202px;top:436.60px"></div>
<div class="g" style="left:237px;top:436.60px"></div>
<div class="g" style="left:271px;top:436.60px"></div>
<div class="g" style="left:306px;top:436.60px"></div>
<div class="g" style="left:133px;top:458.20px"></div>
<div class="g" style="left:167px;top:458.20px"></div>
<div class="g" style="left:202px;top:458.20px"></div>
<div class="g" style="left:237px;top:458.20px"></div>
<div class="g" style="left:271px;top:458.20px"></div>
<div class="g" style="left:306px;top:458.20px"></div>
<div class="g" style="left:133px;top:479.80px"></div>
<div class="g" style="left:167px;top:479.80px"></div>
<div class="g" style="left:202px;top:479.80px"></div>
<div class="g" style="left:237px;top:479.80px"></div>
<div class="g" style="left:271px;top:479.80px"></div>
<div class="g" style="left:306px;top:479.80px"></div>
<div class="g" style="left:133px;top:501.40px"></div>
<div class="g" style="left:167px;top:501.40px"></div>
<div class="g" style="left:202px;top:501.40px"></div>
<div class="g" style="left:237px;top:501.40px"></div>
<div class="g" style="left:271px;top:501.40px"></div>
<div class="g" style="left:306px;top:501.40px"></div>
<div class="g" style="left:133px;top:523.00px"></div>
<div class="g" style="left:167px;top:523.00px"></div>
<div class="g" style="left:202px;top:523.00px"></div>
<div class="g" style="left:237px;top:523.00px"></div>
<div class="g" style="left:271px;top:523.00px"></div>
<div class="g" style="left:306px;top:523.00px"></div>
<div class="g" style="left:133px;top:587.80px"></div>
<div class="g" style="left:167px;top:587.80px"></div>
<div class="g" style="left:202px;top:587.80px"></div>
<div class="g" style="left:237px;top:587.80px"></div>
<div class="g" style="left:271px;top:587.80px"></div>
<div class="g" style="left:306px;top:587.80px"></div>
<div class="g" style="left:341px;top:587.80px"></div>
<div class="g" style="left:133px;top:609.40px"></div>
<div class="g" style="left:167px;top:609.40px"></div>
<div class="g" style="left:202px;top:609.40px"></div>
<div class="g" style="left:237px;top:609.40px"></div>
<div class="g" style="left:271px;top:609.40px"></div>
<div class="g" style="left:306px;top:609.40px"></div>
<div class="g" style="left:341px;top:609.40px"></div>
<div class="g" style="left:133px;top:652.60px"></div>
<div class="g" style="left:167px;top:652.60px"></div>
<div class="g" style="left:202px;top:652.60px"></div>
<div class="g" style="left:237px;top:652.60px"></div>
<div class="g" style="left:271px;top:652.60px"></div>
<div class="g" style="left:306px;top:652.60px"></div>
<div class="g" style="left:341px;top:652.60px"></div>
<div class="g" style="left:133px;top:674.20px"></div>
<div class="g" style="left:167px;top:674.20px"></div>
<div class="g" style="left:202px;top:674.20px"></div>
<div class="g" style="left:237px;top:674.20px"></div>
<div class="g" style="left:271px;top:674.20px"></div>
<div class="g" style="left:306px;top:674.20px"></div>
<div class="g" style="left:341px;top:674.20px"></div>
<div class="g" style="left:133px;top:695.80px"></div>
<div class="g" style="left:167px;top:695.80px"></div>
<div class="g" style="left:202px;top:695.80px"></div>
<div class="g" style="left:237px;top:695.80px"></div>
<div class="g" style="left:271px;top:695.80px"></div>
<div class="g" style="left:306px;top:695.80px"></div>
<div class="g" style="left:341px;top:695.80px"></div>
<div class="g" style="left:375px;top:695.80px"></div>
<div class="g" style="left:133px;top:717.40px"></div>
<div class="g" style="left:167px;top:717.40px"></div>
<div class="g" style="left:202px;top:717.40px"></div>
<div class="g" style="left:237px;top:717.40px"></div>
<div class="g" style="left:271px;top:717.40px"></div>
<div class="g" style="left:306px;top:717.40px"></div>
<div class="g" style="left:341px;top:717.40px"></div>
<div class="g" style="left:375px;top:717.40px"></div>
<div class="g" style="left:133px;top:739.00px"></div>
<div class="g" style="left:167px;top:739.00px"></div>
<div class="g" style="left:202px;top:739.00px"></div>
<div class="g" style="left:237px;top:739.00px"></div>
<div class="g" style="left:271px;top:739.00px"></div>
<div class="g" style="left:306px;top:739.00px"></div>
<div class="g" style="left:341px;top:739.00px"></div>
<div class="g" style="left:375px;top:739.00px"></div>
<div class="g" style="left:133px;top:760.60px"></div>
<div class="g" style="left:167px;top:760.60px"></div>
<div class="g" style="left:202px;top:760.60px"></div>
<div class="g" style="left:237px;top:760.60px"></div>
<div class="g" style="left:271px;top:760.60px"></div>
<div class="g" style="left:306px;top:760.60px"></div>
<div class="g" style="left:341px;top:760.60px"></div>
<div class="g" style="left:133px;top:782.20px"></div>
<div class="g" style="left:167px;top:782.20px"></div>
<div class="g" style="left:202px;top:782.20px"></div>
<div class="g" style="left:237px;top:782.20px"></div>
<div class="g" style="left:271px;top:782.20px"></div>
<div class="g" style="left:306px;top:782.20px"></div>
<div class="g" style="left:133px;top:803.80px"></div>
<div class="g" style="left:167px;top:803.80px"></div>
<div class="g" style="left:202px;top:803.80px"></div>
<div class="g" style="left:237px;top:803.80px"></div>
<div class="g" style="left:271px;top:803.80px"></div>
<div class="g" style="left:306px;top:803.80px"></div>
<div class="g" style="left:133px;top:825.40px"></div>
<div class="g" style="left:167px;top:825.40px"></div>
<div class="g" style="left:202px;top:825.40px"></div>
<div class="g" style="left:237px;top:825.40px"></div>
<div class="g" style="left:271px;top:825.40px"></div>
<div class="g" style="left:306px;top:825.40px"></div>
<div class="g" style="left:133px;top:847.00px"></div>
<div class="g" style="left:167px;top:847.00px"></div>
<div class="g" style="left:202px;top:847.00px"></div>
<div class="g" style="left:237px;top:847.00px"></div>
<div class="g" style="left:271px;top:847.00px"></div>
<div class="g" style="left:133px;top:868.60px"></div>
<div class="g" style="left:167px;top:868.60px"></div>
<div class="g" style="left:202px;top:868.60px"></div>
<div class="g" style="left:237px;top:868.60px"></div>
<div class="g" style="left:133px;top:890.20px"></div>
<div class="g" style="left:167px;top:890.20px"></div>
<div class="g" style="left:202px;top:890.20px"></div>
<div class="g" style="left:237px;top:890.20px"></div>
<div class="g" style="left:133px;top:911.80px"></div>
<div class="g" style="left:167px;top:911.80px"></div>
<div class="g" style="left:202px;top:911.80px"></div>
<div class="g" style="left:237px;top:911.80px"></div>
<div class="g" style="left:271px;top:911.80px"></div>
<div class="g" style="left:133px;top:933.40px"></div>
<div class="g" style="left:167px;top:933.40px"></div>
<div class="g" style="left:202px;top:933.40px"></div>
<div class="g" style="left:237px;top:933.40px"></div>
<div class="g" style="left:271px;top:933.40px"></div>
<div class="g" style="left:133px;top:955.00px"></div>
<div class="g" style="left:167px;top:955.00px"></div>
<div class="g" style="left:202px;top:955.00px"></div>
<div class="g" style="left:237px;top:955.00px"></div>
<div class="g" style="left:271px;top:955.00px"></div>
<div class="g" style="left:306px;top:955.00px"></div>
<div class="g" style="left:133px;top:976.60px"></div>
<div class="g" style="left:167px;top:976.60px"></div>
<div class="g" style="left:202px;top:976.60px"></div>
<div class="g" style="left:237px;top:976.60px"></div>
<div class="g" style="left:271px;top:976.60px"></div>
<div class="g" style="left:306px;top:976.60px"></div>
<div class="g" style="left:133px;top:998.20px"></div>
<div class="g" style="left:167px;top:998.20px"></div>
<div class="g" style="left:202px;top:998.20px"></div>
<div class="g" style="left:237px;top:998.20px"></div>
<div class="g" style="left:271px;top:998.20px"></div>
<div class="g" style="left:306px;top:998.20px"></div>
<div class="g" style="left:133px;top:1019.80px"></div>
<div class="g" style="left:167px;top:1019.80px"></div>
<div class="g" style="left:202px;top:1019.80px"></div>
<div class="g" style="left:237px;top:1019.80px"></div>
<div class="g" style="left:271px;top:1019.80px"></div>
<div class="g" style="left:306px;top:1019.80px"></div>
<div class="g" style="left:133px;top:1041.40px"></div>
<div class="g" style="left:167px;top:1041.40px"></div>
<div class="g" style="left:202px;top:1041.40px"></div>
<div class="g" style="left:237px;top:1041.40px"></div>
<div class="g" style="left:271px;top:1041.40px"></div>
<div class="g" style="left:306px;top:1041.40px"></div>
<div class="g" style="left:133px;top:1063.00px"></div>
<div class="g" style="left:167px;top:1063.00px"></div>
<div class="g" style="left:202px;top:1063.00px"></div>
<div class="g" style="left:237px;top:1063.00px"></div>
<div class="g" style="left:271px;top:1063.00px"></div>
<div class="g" style="left:306px;top:1063.00px"></div>
<div class="g" style="left:133px;top:1084.60px"></div>
<div class="g" style="left:167px;top:1084.60px"></div>
<div class="g" style="left:202px;top:1084.60px"></div>
<div class="g" style="left:237px;top:1084.60px"></div>
<div class="g" style="left:271px;top:1084.60px"></div>
<div class="g" style="left:306px;top:1084.60px"></div>
<div class="g" style="left:133px;top:1106.20px"></div>
<div class="g" style="left:167px;top:1106.20px"></div>
<div class="g" style="left:202px;top:1106.20px"></div>
<div class="g" style="left:237px;top:1106.20px"></div>
<div class="g" style="left:271px;top:1106.20px"></div>
<div class="g" style="left:306px;top:1106.20px"></div>
<div class="g" style="left:133px;top:1127.80px"></div>
<div class="g" style="left:167px;top:1127.80px"></div>
<div class="g" style="left:202px;top:1127.80px"></div>
<div class="g" style="left:237px;top:1127.80px"></div>
<div class="g" style="left:271px;top:1127.80px"></div>
<div class="g" style="left:306px;top:1127.80px"></div>
<div class="g" style="left:133px;top:1149.40px"></div>
<div class="g" style="left:167px;top:1149.40px"></div>
<div class="g" style="left:202px;top:1149.40px"></div>
<div class="g" style="left:237px;top:1149.40px"></div>
<div class="g" style="left:271px;top:1149.40px"></div>
<div class="g" style="left:306px;top:1149.40px"></div>
<div class="g" style="left:133px;top:1171.00px"></div>
<div class="g" style="left:167px;top:1171.00px"></div>
<div class="g" style="left:202px;top:1171.00px"></div>
<div class="g" style="left:237px;top:1171.00px"></div>
<div class="g" style="left:271px;top:1171.00px"></div>
<div class="g" style="left:306px;top:1171.00px"></div>
<div class="g" style="left:133px;top:1192.60px"></div>
<div class="g" style="left:167px;top:1192.60px"></div>
<div class="g" style="left:202px;top:1192.60px"></div>
<div class="g" style="left:237px;top:1192.60px"></div>
<div class="g" style="left:271px;top:1192.60px"></div>
<div class="g" style="left:306px;top:1192.60px"></div>
<div class="g" style="left:341px;top:1192.60px"></div>
<div class="g" style="left:133px;top:1214.20px"></div>
<div class="g" style="left:167px;top:1214.20px"></div>
<div class="g" style="left:202px;top:1214.20px"></div>
<div class="g" style="left:237px;top:1214.20px"></div>
<div class="g" style="left:271px;top:1214.20px"></div>
<div class="g" style="left:306px;top:1214.20px"></div>
<div class="g" style="left:341px;top:1214.20px"></div>
<div class="g" style="left:133px;top:1235.80px"></div>
<div class="g" style="left:167px;top:1235.80px"></div>
<div class="g" style="left:202px;top:1235.80px"></div>
<div class="g" style="left:237px;top:1235.80px"></div>
<div class="g" style="left:271px;top:1235.80px"></div>
<div class="g" style="left:306px;top:1235.80px"></div>
<div class="g" style="left:341px;top:1235.80px"></div>
<div class="g" style="left:375px;top:1235.80px"></div>
<div class="g" style="left:133px;top:1257.40px"></div>
<div class="g" style="left:167px;top:1257.40px"></div>
<div class="g" style="left:202px;top:1257.40px"></div>
<div class="g" style="left:237px;top:1257.40px"></div>
<div class="g" style="left:271px;top:1257.40px"></div>
<div class="g" style="left:306px;top:1257.40px"></div>
<div class="g" style="left:341px;top:1257.40px"></div>
<div class="g" style="left:375px;top:1257.40px"></div>
<div class="g" style="left:133px;top:1279.00px"></div>
<div class="g" style="left:167px;top:1279.00px"></div>
<div class="g" style="left:202px;top:1279.00px"></div>
<div class="g" style="left:237px;top:1279.00px"></div>
<div class="g" style="left:271px;top:1279.00px"></div>
<div class="g" style="left:306px;top:1279.00px"></div>
<div class="g" style="left:341px;top:1279.00px"></div>
<div class="g" style="left:375px;top:1279.00px"></div>
<div class="g" style="left:133px;top:1300.60px"></div>
<div class="g" style="left:167px;top:1300.60px"></div>
<div class="g" style="left:202px;top:1300.60px"></div>
<div class="g" style="left:237px;top:1300.60px"></div>
<div class="g" style="left:271px;top:1300.60px"></div>
<div class="g" style="left:306px;top:1300.60px"></div>
<div class="g" style="left:341px;top:1300.60px"></div>
<div class="g" style="left:133px;top:1343.80px"></div>
<div class="g" style="left:167px;top:1343.80px"></div>
<div class="g" style="left:202px;top:1343.80px"></div>
<div class="g" style="left:237px;top:1343.80px"></div>
<div class="g" style="left:271px;top:1343.80px"></div>
<div class="g" style="left:306px;top:1343.80px"></div>
<div class="g" style="left:133px;top:1365.40px"></div>
<div class="g" style="left:167px;top:1365.40px"></div>
<div class="g" style="left:202px;top:1365.40px"></div>
<div class="g" style="left:237px;top:1365.40px"></div>
<div class="g" style="left:271px;top:1365.40px"></div>
<div class="g" style="left:306px;top:1365.40px"></div>
<div class="g" style="left:133px;top:1387.00px"></div>
<div class="g" style="left:167px;top:1387.00px"></div>
<div class="g" style="left:202px;top:1387.00px"></div>
<div class="g" style="left:237px;top:1387.00px"></div>
<div class="g" style="left:271px;top:1387.00px"></div>
<div class="g" style="left:306px;top:1387.00px"></div>
<div class="ln act" style="left:41.5px;top:91.00px">1</div>
<div class="ln" style="left:41.5px;top:112.60px">2</div>
<div class="ln" style="left:41.5px;top:134.20px">3</div>
<div class="ln" style="left:41.5px;top:155.80px">4</div>
<div class="ln" style="left:41.5px;top:177.40px">5</div>
<div class="ln" style="left:41.5px;top:199.00px">6</div>
<div class="ln" style="left:41.5px;top:220.60px">7</div>
<div class="ln" style="left:41.5px;top:242.20px">8</div>
<div class="ln" style="left:41.5px;top:263.80px">9</div>
<div class="ln" style="left:41.5px;top:285.40px">10</div>
<div class="ln" style="left:41.5px;top:307.00px">11</div>
<div class="ln" style="left:41.5px;top:328.60px">12</div>
<div class="ln" style="left:41.5px;top:350.20px">13</div>
<div class="ln" style="left:41.5px;top:371.80px">14</div>
<div class="ln" style="left:41.5px;top:393.40px">15</div>
<div class="ln" style="left:41.5px;top:415.00px">16</div>
<div class="ln" style="left:41.5px;top:436.60px">17</div>
<div class="ln" style="left:41.5px;top:458.20px">18</div>
<div class="ln" style="left:41.5px;top:479.80px">19</div>
<div class="ln" style="left:41.5px;top:501.40px">20</div>
<div class="ln" style="left:41.5px;top:523.00px">21</div>
<div class="ln" style="left:41.5px;top:566.20px">22</div>
<div class="ln" style="left:41.5px;top:587.80px">23</div>
<div class="ln" style="left:41.5px;top:609.40px">24</div>
<div class="ln" style="left:41.5px;top:631.00px">25</div>
<div class="ln" style="left:41.5px;top:652.60px">26</div>
<div class="ln" style="left:41.5px;top:674.20px">27</div>
<div class="ln" style="left:41.5px;top:695.80px">28</div>
<div class="ln" style="left:41.5px;top:717.40px">29</div>
<div class="ln" style="left:41.5px;top:739.00px">30</div>
<div class="ln" style="left:41.5px;top:760.60px">31</div>
<div class="ln" style="left:41.5px;top:782.20px">32</div>
<div class="ln" style="left:41.5px;top:803.80px">33</div>
<div class="ln" style="left:41.5px;top:825.40px">34</div>
<div class="ln" style="left:41.5px;top:847.00px">35</div>
<div class="ln" style="left:41.5px;top:868.60px">36</div>
<div class="ln" style="left:41.5px;top:890.20px">37</div>
<div class="ln" style="left:41.5px;top:911.80px">38</div>
<div class="ln" style="left:41.5px;top:933.40px">39</div>
<div class="ln" style="left:41.5px;top:955.00px">40</div>
<div class="ln" style="left:41.5px;top:976.60px">41</div>
<div class="ln" style="left:41.5px;top:998.20px">42</div>
<div class="ln" style="left:41.5px;top:1019.80px">43</div>
<div class="ln" style="left:41.5px;top:1041.40px">44</div>
<div class="ln" style="left:41.5px;top:1063.00px">45</div>
<div class="ln" style="left:41.5px;top:1084.60px">46</div>
<div class="ln" style="left:41.5px;top:1106.20px">47</div>
<div class="ln" style="left:41.5px;top:1127.80px">48</div>
<div class="ln" style="left:41.5px;top:1149.40px">49</div>
<div class="ln" style="left:41.5px;top:1171.00px">50</div>
<div class="ln" style="left:41.5px;top:1192.60px">51</div>
<div class="ln" style="left:41.5px;top:1214.20px">52</div>
<div class="ln" style="left:41.5px;top:1235.80px">53</div>
<div class="ln" style="left:41.5px;top:1257.40px">54</div>
<div class="ln" style="left:41.5px;top:1279.00px">55</div>
<div class="ln" style="left:41.5px;top:1300.60px">56</div>
<div class="ln" style="left:41.5px;top:1322.20px">57</div>
<div class="ln" style="left:41.5px;top:1343.80px">58</div>
<div class="ln" style="left:41.5px;top:1365.40px">59</div>
<div class="ln" style="left:41.5px;top:1387.00px">60</div>
<div class="a" style="left:132.8px;top:0;width:869.2px;height:1392px;overflow:hidden"><div class="cl" style="top:91.00px"><span class="p">{</span></div>
<div class="cl" style="top:112.60px">    <span class="p">"</span><span class="k">className</span><span class="p">"</span><span class="p">: </span><span class="p">"</span><span class="s">org.joget.apps.form.model.Form</span><span class="p">"</span><span class="p">,</span></div>
<div class="cl" style="top:134.20px">    <span class="p">"</span><span class="k">elements</span><span class="p">"</span><span class="p">: [{</span></div>
<div class="cl" style="top:155.80px">        <span class="p">"</span><span class="k">className</span><span class="p">"</span><span class="p">: </span><span class="p">"</span><span class="s">org.joget.apps.form.model.Section</span><span class="p">"</span><span class="p">,</span></div>
<div class="cl" style="top:177.40px">        <span class="p">"</span><span class="k">elements</span><span class="p">"</span><span class="p">: [{</span></div>
<div class="cl" style="top:199.00px">            <span class="p">"</span><span class="k">className</span><span class="p">"</span><span class="p">: </span><span class="p">"</span><span class="s">org.joget.apps.form.model.Column</span><span class="p">"</span><span class="p">,</span></div>
<div class="cl" style="top:220.60px">            <span class="p">"</span><span class="k">elements</span><span class="p">"</span><span class="p">: [</span></div>
<div class="cl" style="top:242.20px">                <span class="p">{</span></div>
<div class="cl" style="top:263.80px">                    <span class="p">"</span><span class="k">className</span><span class="p">"</span><span class="p">: </span><span class="p">"</span><span class="s">org.joget.apps.form.lib.TextField</span><span class="p">"</span><span class="p">,</span></div>
<div class="cl" style="top:285.40px">                    <span class="p">"</span><span class="k">properties</span><span class="p">"</span><span class="p">: {</span></div>
<div class="cl" style="top:307.00px">                        <span class="p">"</span><span class="k">encryption</span><span class="p">"</span><span class="p">: </span><span class="p">"</span><span class="s"></span><span class="p">"</span><span class="p">,</span></div>
<div class="cl" style="top:328.60px">                        <span class="p">"</span><span class="k">id</span><span class="p">"</span><span class="p">: </span><span class="p">"</span><span class="s">name</span><span class="p">"</span><span class="p">,</span></div>
<div class="cl" style="top:350.20px">                        <span class="p">"</span><span class="k">label</span><span class="p">"</span><span class="p">: </span><span class="p">"</span><span class="s">Name</span><span class="p">"</span><span class="p">,</span></div>
<div class="cl" style="top:371.80px">                        <span class="p">"</span><span class="k">maxlength</span><span class="p">"</span><span class="p">: </span><span class="p">"</span><span class="s"></span><span class="p">"</span><span class="p">,</span></div>
<div class="cl" style="top:393.40px">                        <span class="p">"</span><span class="k">placeholder</span><span class="p">"</span><span class="p">: </span><span class="p">"</span><span class="s"></span><span class="p">"</span><span class="p">,</span></div>
<div class="cl" style="top:415.00px">                        <span class="p">"</span><span class="k">readonly</span><span class="p">"</span><span class="p">: </span><span class="p">"</span><span class="s"></span><span class="p">"</span><span class="p">,</span></div>
<div class="cl" style="top:436.60px">                        <span class="p">"</span><span class="k">readonlyLabel</span><span class="p">"</span><span class="p">: </span><span class="p">"</span><span class="s"></span><span class="p">"</span><span class="p">,</span></div>
<div class="cl" style="top:458.20px">                        <span class="p">"</span><span class="k">size</span><span class="p">"</span><span class="p">: </span><span class="p">"</span><span class="s"></span><span class="p">"</span><span class="p">,</span></div>
<div class="cl" style="top:479.80px">                        <span class="p">"</span><span class="k">storeNumeric</span><span class="p">"</span><span class="p">: </span><span class="p">"</span><span class="s"></span><span class="p">"</span><span class="p">,</span></div>
<div class="cl" style="top:501.40px">                        <span class="p">"</span><span class="k">style</span><span class="p">"</span><span class="p">: </span><span class="p">"</span><span class="s"></span><span class="p">"</span><span class="p">,</span></div>
<div class="cl" style="top:523.00px">                        <span class="p">"</span><span class="k">validator</span><span class="p">"</span><span class="p">: {</span></div>
<div class="cl" style="top:566.20px"><span class="mk">&lt;&lt;&lt;&lt;&lt;&lt;&lt; HEAD</span><span class="mc"> (Current Change)</span></div>
<div class="cl" style="top:587.80px">                            <span class="p">"</span><span class="k">className</span><span class="p">"</span><span class="p">: </span><span class="p">"</span><span class="s"></span><span class="p">"</span><span class="p">,</span></div>
<div class="cl" style="top:609.40px">                            <span class="p">"</span><span class="k">properties</span><span class="p">"</span><span class="p">: {}</span></div>
<div class="cl" style="top:631.00px"><span class="mk2">=======</span></div>
<div class="cl" style="top:652.60px">                            <span class="p">"</span><span class="k">className</span><span class="p">"</span><span class="p">: </span><span class="p">"</span><span class="s">org.joget.apps.form.lib.DefaultValidator</span><span class="p">"</span><span class="p">,</span></div>
<div class="cl" style="top:674.20px">                            <span class="p">"</span><span class="k">properties</span><span class="p">"</span><span class="p">: {</span></div>
<div class="cl" style="top:695.80px">                                <span class="p">"</span><span class="k">mandatory</span><span class="p">"</span><span class="p">: </span><span class="p">"</span><span class="s">true</span><span class="p">"</span><span class="p">,</span></div>
<div class="cl" style="top:717.40px">                                <span class="p">"</span><span class="k">message</span><span class="p">"</span><span class="p">: </span><span class="p">"</span><span class="s"></span><span class="p">"</span><span class="p">,</span></div>
<div class="cl" style="top:739.00px">                                <span class="p">"</span><span class="k">type</span><span class="p">"</span><span class="p">: </span><span class="p">"</span><span class="s"></span><span class="p">"</span></div>
<div class="cl" style="top:760.60px">                            <span class="p">}</span></div>
<div class="cl" style="top:782.20px">                        <span class="p">},</span></div>
<div class="cl" style="top:803.80px">                        <span class="p">"</span><span class="k">value</span><span class="p">"</span><span class="p">: </span><span class="p">"</span><span class="s"></span><span class="p">"</span><span class="p">,</span></div>
<div class="cl" style="top:825.40px">                        <span class="p">"</span><span class="k">workflowVariable</span><span class="p">"</span><span class="p">: </span><span class="p">"</span><span class="s"></span><span class="p">"</span></div>
<div class="cl" style="top:847.00px">                    <span class="p">}</span></div>
<div class="cl" style="top:868.60px">                <span class="p">},</span></div>
<div class="cl" style="top:890.20px">                <span class="p">{</span></div>
<div class="cl" style="top:911.80px">                    <span class="p">"</span><span class="k">className</span><span class="p">"</span><span class="p">: </span><span class="p">"</span><span class="s">org.joget.apps.form.lib.TextField</span><span class="p">"</span><span class="p">,</span></div>
<div class="cl" style="top:933.40px">                    <span class="p">"</span><span class="k">properties</span><span class="p">"</span><span class="p">: {</span></div>
<div class="cl" style="top:955.00px">                        <span class="p">"</span><span class="k">encryption</span><span class="p">"</span><span class="p">: </span><span class="p">"</span><span class="s"></span><span class="p">"</span><span class="p">,</span></div>
<div class="cl" style="top:976.60px">                        <span class="p">"</span><span class="k">id</span><span class="p">"</span><span class="p">: </span><span class="p">"</span><span class="s">subject</span><span class="p">"</span><span class="p">,</span></div>
<div class="cl" style="top:998.20px">                        <span class="p">"</span><span class="k">label</span><span class="p">"</span><span class="p">: </span><span class="p">"</span><span class="s">Subject</span><span class="p">"</span><span class="p">,</span></div>
<div class="cl" style="top:1019.80px">                        <span class="p">"</span><span class="k">maxlength</span><span class="p">"</span><span class="p">: </span><span class="p">"</span><span class="s"></span><span class="p">"</span><span class="p">,</span></div>
<div class="cl" style="top:1041.40px">                        <span class="p">"</span><span class="k">placeholder</span><span class="p">"</span><span class="p">: </span><span class="p">"</span><span class="s"></span><span class="p">"</span><span class="p">,</span></div>
<div class="cl" style="top:1063.00px">                        <span class="p">"</span><span class="k">readonly</span><span class="p">"</span><span class="p">: </span><span class="p">"</span><span class="s"></span><span class="p">"</span><span class="p">,</span></div>
<div class="cl" style="top:1084.60px">                        <span class="p">"</span><span class="k">readonlyLabel</span><span class="p">"</span><span class="p">: </span><span class="p">"</span><span class="s"></span><span class="p">"</span><span class="p">,</span></div>
<div class="cl" style="top:1106.20px">                        <span class="p">"</span><span class="k">size</span><span class="p">"</span><span class="p">: </span><span class="p">"</span><span class="s"></span><span class="p">"</span><span class="p">,</span></div>
<div class="cl" style="top:1127.80px">                        <span class="p">"</span><span class="k">storeNumeric</span><span class="p">"</span><span class="p">: </span><span class="p">"</span><span class="s"></span><span class="p">"</span><span class="p">,</span></div>
<div class="cl" style="top:1149.40px">                        <span class="p">"</span><span class="k">style</span><span class="p">"</span><span class="p">: </span><span class="p">"</span><span class="s"></span><span class="p">"</span><span class="p">,</span></div>
<div class="cl" style="top:1171.00px">                        <span class="p">"</span><span class="k">validator</span><span class="p">"</span><span class="p">: {</span></div>
<div class="cl" style="top:1192.60px">                            <span class="p">"</span><span class="k">className</span><span class="p">"</span><span class="p">: </span><span class="p">"</span><span class="s">org.joget.apps.form.lib.DefaultValidator</span><span class="p">"</span><span class="p">,</span></div>
<div class="cl" style="top:1214.20px">                            <span class="p">"</span><span class="k">properties</span><span class="p">"</span><span class="p">: {</span></div>
<div class="cl" style="top:1235.80px">                                <span class="p">"</span><span class="k">mandatory</span><span class="p">"</span><span class="p">: </span><span class="p">"</span><span class="s">true</span><span class="p">"</span><span class="p">,</span></div>
<div class="cl" style="top:1257.40px">                                <span class="p">"</span><span class="k">message</span><span class="p">"</span><span class="p">: </span><span class="p">"</span><span class="s"></span><span class="p">"</span><span class="p">,</span></div>
<div class="cl" style="top:1279.00px">                                <span class="p">"</span><span class="k">type</span><span class="p">"</span><span class="p">: </span><span class="p">"</span><span class="s"></span><span class="p">"</span></div>
<div class="cl" style="top:1300.60px">                            <span class="p">}</span></div>
<div class="cl" style="top:1322.20px"><span class="mk">&gt;&gt;&gt;&gt;&gt;&gt;&gt; local/meeting_1</span><span class="mc"> (Incoming Change)</span></div>
<div class="cl" style="top:1343.80px">                        <span class="p">},</span></div>
<div class="cl" style="top:1365.40px">                        <span class="p">"</span><span class="k">value</span><span class="p">"</span><span class="p">: </span><span class="p">"</span><span class="s"></span><span class="p">"</span><span class="p">,</span></div>
<div class="cl" style="top:1387.00px">                        <span class="p">"</span><span class="k">workflowVariable</span><span class="p">"</span><span class="p">: </span><span class="p">"</span><span class="s"></span><span class="p">"</span></div></div>
<div class="lens" style="left:132.8px;top:544.60px">Accept Current Change | Accept Incoming Change | Accept Both Changes | Compare Changes</div>
<svg class="a" style="left:132.8px;top:583.8px;overflow:hidden" width="60.7" height="4.5"><path d="M0.00 3.30 L4.33 0.80 L8.66 3.30 L12.99 0.80 L17.32 3.30 L21.65 0.80 L25.98 3.30 L30.31 0.80 L34.64 3.30 L38.97 0.80 L43.30 3.30 L47.63 0.80 L51.96 3.30 L56.29 0.80 L60.62 3.30 L64.95 0.80" fill="none" stroke="#e51400" stroke-width="1.2"/></svg>
<svg class="a" style="left:202.2px;top:583.8px;overflow:hidden" width="34.7" height="4.5"><path d="M0.00 3.30 L4.33 0.80 L8.66 3.30 L12.99 0.80 L17.32 3.30 L21.65 0.80 L25.98 3.30 L30.31 0.80 L34.64 3.30 L38.97 0.80" fill="none" stroke="#e51400" stroke-width="1.2"/></svg>
<svg class="a" style="left:375.7px;top:627.0px;overflow:hidden" width="104.1" height="4.5"><path d="M0.00 3.30 L4.33 0.80 L8.66 3.30 L12.99 0.80 L17.32 3.30 L21.65 0.80 L25.98 3.30 L30.31 0.80 L34.64 3.30 L38.97 0.80 L43.30 3.30 L47.63 0.80 L51.96 3.30 L56.29 0.80 L60.62 3.30 L64.95 0.80 L69.28 3.30 L73.61 0.80 L77.94 3.30 L82.27 0.80 L86.60 3.30 L90.93 0.80 L95.26 3.30 L99.59 0.80 L103.92 3.30 L108.25 0.80" fill="none" stroke="#bf8803" stroke-width="1.2"/></svg>
<svg class="a" style="left:132.8px;top:648.6px;overflow:hidden" width="60.7" height="4.5"><path d="M0.00 3.30 L4.33 0.80 L8.66 3.30 L12.99 0.80 L17.32 3.30 L21.65 0.80 L25.98 3.30 L30.31 0.80 L34.64 3.30 L38.97 0.80 L43.30 3.30 L47.63 0.80 L51.96 3.30 L56.29 0.80 L60.62 3.30 L64.95 0.80" fill="none" stroke="#e51400" stroke-width="1.2"/></svg>
<svg class="a" style="left:375.7px;top:670.2px;overflow:hidden" width="95.4" height="4.5"><path d="M0.00 3.30 L4.33 0.80 L8.66 3.30 L12.99 0.80 L17.32 3.30 L21.65 0.80 L25.98 3.30 L30.31 0.80 L34.64 3.30 L38.97 0.80 L43.30 3.30 L47.63 0.80 L51.96 3.30 L56.29 0.80 L60.62 3.30 L64.95 0.80 L69.28 3.30 L73.61 0.80 L77.94 3.30 L82.27 0.80 L86.60 3.30 L90.93 0.80 L95.26 3.30 L99.59 0.80" fill="none" stroke="#e51400" stroke-width="1.2"/></svg>
<svg class="a" style="left:375.7px;top:691.8px;overflow:hidden" width="104.1" height="4.5"><path d="M0.00 3.30 L4.33 0.80 L8.66 3.30 L12.99 0.80 L17.32 3.30 L21.65 0.80 L25.98 3.30 L30.31 0.80 L34.64 3.30 L38.97 0.80 L43.30 3.30 L47.63 0.80 L51.96 3.30 L56.29 0.80 L60.62 3.30 L64.95 0.80 L69.28 3.30 L73.61 0.80 L77.94 3.30 L82.27 0.80 L86.60 3.30 L90.93 0.80 L95.26 3.30 L99.59 0.80 L103.92 3.30 L108.25 0.80" fill="none" stroke="#bf8803" stroke-width="1.2"/></svg>
<svg class="a" style="left:132.8px;top:1339.8px;overflow:hidden" width="60.7" height="4.5"><path d="M0.00 3.30 L4.33 0.80 L8.66 3.30 L12.99 0.80 L17.32 3.30 L21.65 0.80 L25.98 3.30 L30.31 0.80 L34.64 3.30 L38.97 0.80 L43.30 3.30 L47.63 0.80 L51.96 3.30 L56.29 0.80 L60.62 3.30 L64.95 0.80" fill="none" stroke="#e51400" stroke-width="1.2"/></svg>
<svg class="a" style="left:202.2px;top:1339.8px;overflow:hidden" width="43.4" height="4.5"><path d="M0.00 3.30 L4.33 0.80 L8.66 3.30 L12.99 0.80 L17.32 3.30 L21.65 0.80 L25.98 3.30 L30.31 0.80 L34.64 3.30 L38.97 0.80 L43.30 3.30 L47.63 0.80" fill="none" stroke="#e51400" stroke-width="1.2"/></svg>
<svg class="a" style="left:1002.0px;top:91.2px" width="110" height="340">
<rect x="0" y="0" width="110" height="117.5" fill="rgba(0,0,0,0.022)"/>
<rect x="8" y="42.2" width="102" height="2.2" fill="#f6a9a9"/>
<rect x="8" y="46.2" width="102" height="2.2" fill="#e3c98f"/>
<rect x="8" y="48.2" width="102" height="2.2" fill="#f6a9a9"/>
<rect x="8" y="50.2" width="102" height="2.2" fill="#f6a9a9"/>
<rect x="8" y="52.2" width="102" height="2.2" fill="#e3c98f"/>
<rect x="8" y="112.2" width="102" height="2.2" fill="#f6a9a9"/>
<rect x="8" y="136.2" width="102" height="2.2" fill="#f6a9a9"/>
<rect x="8" y="140.2" width="102" height="2.2" fill="#f6a9a9"/>
<rect x="8" y="142.2" width="102" height="2.2" fill="#f6a9a9"/>
<rect x="8" y="144.2" width="102" height="2.2" fill="#f6a9a9"/>
<rect x="8" y="156.2" width="102" height="2.2" fill="#f6a9a9"/>
<rect x="8" y="160.2" width="102" height="2.2" fill="#f6a9a9"/>
<rect x="8" y="162.2" width="102" height="2.2" fill="#f6a9a9"/>
<rect x="8" y="164.2" width="102" height="2.2" fill="#f6a9a9"/>
<rect x="8" y="196.2" width="102" height="2.2" fill="#f6a9a9"/>
<rect x="8" y="200.2" width="102" height="2.2" fill="#f6a9a9"/>
<rect x="8" y="202.2" width="102" height="2.2" fill="#f6a9a9"/>
<rect x="8" y="204.2" width="102" height="2.2" fill="#f6a9a9"/>
<rect x="8" y="216.2" width="102" height="2.2" fill="#f6a9a9"/>
<rect x="8" y="220.2" width="102" height="2.2" fill="#f6a9a9"/>
<rect x="8" y="222.2" width="102" height="2.2" fill="#f6a9a9"/>
<rect x="8" y="224.2" width="102" height="2.2" fill="#f6a9a9"/>
<rect x="8" y="0.5" width="1" height="1.5" fill="url(#mp)"/>
<rect x="12" y="2.5" width="1" height="1.5" fill="url(#mp)"/>
<rect x="13" y="2.5" width="9" height="1.5" fill="url(#mk)"/>
<rect x="22" y="2.5" width="1" height="1.5" fill="url(#mp)"/>
<rect x="23" y="2.5" width="1" height="1.5" fill="url(#mp)"/>
<rect x="25" y="2.5" width="1" height="1.5" fill="url(#mp)"/>
<rect x="26" y="2.5" width="30" height="1.5" fill="url(#ms)"/>
<rect x="56" y="2.5" width="1" height="1.5" fill="url(#mp)"/>
<rect x="57" y="2.5" width="1" height="1.5" fill="url(#mp)"/>
<rect x="12" y="4.5" width="1" height="1.5" fill="url(#mp)"/>
<rect x="13" y="4.5" width="8" height="1.5" fill="url(#mk)"/>
<rect x="21" y="4.5" width="1" height="1.5" fill="url(#mp)"/>
<rect x="22" y="4.5" width="1" height="1.5" fill="url(#mp)"/>
<rect x="24" y="4.5" width="2" height="1.5" fill="url(#mp)"/>
<rect x="16" y="6.5" width="1" height="1.5" fill="url(#mp)"/>
<rect x="17" y="6.5" width="9" height="1.5" fill="url(#mk)"/>
<rect x="26" y="6.5" width="1" height="1.5" fill="url(#mp)"/>
<rect x="27" y="6.5" width="1" height="1.5" fill="url(#mp)"/>
<rect x="29" y="6.5" width="1" height="1.5" fill="url(#mp)"/>
<rect x="30" y="6.5" width="33" height="1.5" fill="url(#ms)"/>
<rect x="63" y="6.5" width="1" height="1.5" fill="url(#mp)"/>
<rect x="64" y="6.5" width="1" height="1.5" fill="url(#mp)"/>
<rect x="16" y="8.5" width="1" height="1.5" fill="url(#mp)"/>
<rect x="17" y="8.5" width="8" height="1.5" fill="url(#mk)"/>
<rect x="25" y="8.5" width="1" height="1.5" fill="url(#mp)"/>
<rect x="26" y="8.5" width="1" height="1.5" fill="url(#mp)"/>
<rect x="28" y="8.5" width="2" height="1.5" fill="url(#mp)"/>
<rect x="20" y="10.5" width="1" height="1.5" fill="url(#mp)"/>
<rect x="21" y="10.5" width="9" height="1.5" fill="url(#mk)"/>
<rect x="30" y="10.5" width="1" height="1.5" fill="url(#mp)"/>
<rect x="31" y="10.5" width="1" height="1.5" fill="url(#mp)"/>
<rect x="33" y="10.5" width="1" height="1.5" fill="url(#mp)"/>
<rect x="34" y="10.5" width="32" height="1.5" fill="url(#ms)"/>
<rect x="66" y="10.5" width="1" height="1.5" fill="url(#mp)"/>
<rect x="67" y="10.5" width="1" height="1.5" fill="url(#mp)"/>
<rect x="20" y="12.5" width="1" height="1.5" fill="url(#mp)"/>
<rect x="21" y="12.5" width="8" height="1.5" fill="url(#mk)"/>
<rect x="29" y="12.5" width="1" height="1.5" fill="url(#mp)"/>
<rect x="30" y="12.5" width="1" height="1.5" fill="url(#mp)"/>
<rect x="32" y="12.5" width="1" height="1.5" fill="url(#mp)"/>
<rect x="24" y="14.5" width="1" height="1.5" fill="url(#mp)"/>
<rect x="28" y="16.5" width="1" height="1.5" fill="url(#mp)"/>
<rect x="29" y="16.5" width="9" height="1.5" fill="url(#mk)"/>
<rect x="38" y="16.5" width="1" height="1.5" fill="url(#mp)"/>
<rect x="39" y="16.5" width="1" height="1.5" fill="url(#mp)"/>
<rect x="41" y="16.5" width="1" height="1.5" fill="url(#mp)"/>
<rect x="42" y="16.5" width="33" height="1.5" fill="url(#ms)"/>
<rect x="75" y="16.5" width="1" height="1.5" fill="url(#mp)"/>
<rect x="76" y="16.5" width="1" height="1.5" fill="url(#mp)"/>
<rect x="28" y="18.5" width="1" height="1.5" fill="url(#mp)"/>
<rect x="29" y="18.5" width="10" height="1.5" fill="url(#mk)"/>
<rect x="39" y="18.5" width="1" height="1.5" fill="url(#mp)"/>
<rect x="40" y="18.5" width="1" height="1.5" fill="url(#mp)"/>
<rect x="42" y="18.5" width="1" height="1.5" fill="url(#mp)"/>
<rect x="32" y="20.5" width="1" height="1.5" fill="url(#mp)"/>
<rect x="33" y="20.5" width="10" height="1.5" fill="url(#mk)"/>
<rect x="43" y="20.5" width="1" height="1.5" fill="url(#mp)"/>
<rect x="44" y="20.5" width="1" height="1.5" fill="url(#mp)"/>
<rect x="46" y="20.5" width="1" height="1.5" fill="url(#mp)"/>
<rect x="47" y="20.5" width="1" height="1.5" fill="url(#mp)"/>
<rect x="48" y="20.5" width="1" height="1.5" fill="url(#mp)"/>
<rect x="32" y="22.5" width="1" height="1.5" fill="url(#mp)"/>
<rect x="33" y="22.5" width="2" height="1.5" fill="url(#mk)"/>
<rect x="35" y="22.5" width="1" height="1.5" fill="url(#mp)"/>
<rect x="36" y="22.5" width="1" height="1.5" fill="url(#mp)"/>
<rect x="38" y="22.5" width="1" height="1.5" fill="url(#mp)"/>
<rect x="39" y="22.5" width="4" height="1.5" fill="url(#ms)"/>
<rect x="43" y="22.5" width="1" height="1.5" fill="url(#mp)"/>
<rect x="44" y="22.5" width="1" height="1.5" fill="url(#mp)"/>
<rect x="32" y="24.5" width="1" height="1.5" fill="url(#mp)"/>
<rect x="33" y="24.5" width="5" height="1.5" fill="url(#mk)"/>
<rect x="38" y="24.5" width="1" height="1.5" fill="url(#mp)"/>
<rect x="39" y="24.5" width="1" height="1.5" fill="url(#mp)"/>
<rect x="41" y="24.5" width="1" height="1.5" fill="url(#mp)"/>
<rect x="42" y="24.5" width="4" height="1.5" fill="url(#ms)"/>
<rect x="46" y="24.5" width="1" height="1.5" fill="url(#mp)"/>
<rect x="47" y="24.5" width="1" height="1.5" fill="url(#mp)"/>
<rect x="32" y="26.5" width="1" height="1.5" fill="url(#mp)"/>
<rect x="33" y="26.5" width="9" height="1.5" fill="url(#mk)"/>
<rect x="42" y="26.5" width="1" height="1.5" fill="url(#mp)"/>
<rect x="43" y="26.5" width="1" height="1.5" fill="url(#mp)"/>
<rect x="45" y="26.5" width="1" height="1.5" fill="url(#mp)"/>
<rect x="46" y="26.5" width="1" height="1.5" fill="url(#mp)"/>
<rect x="47" y="26.5" width="1" height="1.5" fill="url(#mp)"/>
<rect x="32" y="28.5" width="1" height="1.5" fill="url(#mp)"/>
<rect x="33" y="28.5" width="11" height="1.5" fill="url(#mk)"/>
<rect x="44" y="28.5" width="1" height="1.5" fill="url(#mp)"/>
<rect x="45" y="28.5" width="1" height="1.5" fill="url(#mp)"/>
<rect x="47" y="28.5" width="1" height="1.5" fill="url(#mp)"/>
<rect x="48" y="28.5" width="1" height="1.5" fill="url(#mp)"/>
<rect x="49" y="28.5" width="1" height="1.5" fill="url(#mp)"/>
<rect x="32" y="30.5" width="1" height="1.5" fill="url(#mp)"/>
<rect x="33" y="30.5" width="8" height="1.5" fill="url(#mk)"/>
<rect x="41" y="30.5" width="1" height="1.5" fill="url(#mp)"/>
<rect x="42" y="30.5" width="1" height="1.5" fill="url(#mp)"/>
<rect x="44" y="30.5" width="1" height="1.5" fill="url(#mp)"/>
<rect x="45" y="30.5" width="1" height="1.5" fill="url(#mp)"/>
<rect x="46" y="30.5" width="1" height="1.5" fill="url(#mp)"/>
<rect x="32" y="32.5" width="1" height="1.5" fill="url(#mp)"/>
<rect x="33" y="32.5" width="13" height="1.5" fill="url(#mk)"/>
<rect x="46" y="32.5" width="1" height="1.5" fill="url(#mp)"/>
<rect x="47" y="32.5" width="1" height="1.5" fill="url(#mp)"/>
<rect x="49" y="32.5" width="1" height="1.5" fill="url(#mp)"/>
<rect x="50" y="32.5" width="1" height="1.5" fill="url(#mp)"/>
<rect x="51" y="32.5" width="1" height="1.5" fill="url(#mp)"/>
<rect x="32" y="34.5" width="1" height="1.5" fill="url(#mp)"/>
<rect x="33" y="34.5" width="4" height="1.5" fill="url(#mk)"/>
<rect x="37" y="34.5" width="1" height="1.5" fill="url(#mp)"/>
<rect x="38" y="34.5" width="1" height="1.5" fill="url(#mp)"/>
<rect x="40" y="34.5" width="1" height="1.5" fill="url(#mp)"/>
<rect x="41" y="34.5" width="1" height="1.5" fill="url(#mp)"/>
<rect x="42" y="34.5" width="1" height="1.5" fill="url(#mp)"/>
<rect x="32" y="36.5" width="1" height="1.5" fill="url(#mp)"/>
<rect x="33" y="36.5" width="12" height="1.5" fill="url(#mk)"/>
<rect x="45" y="36.5" width="1" height="1.5" fill="url(#mp)"/>
<rect x="46" y="36.5" width="1" height="1.5" fill="url(#mp)"/>
<rect x="48" y="36.5" width="1" height="1.5" fill="url(#mp)"/>
<rect x="49" y="36.5" width="1" height="1.5" fill="url(#mp)"/>
<rect x="50" y="36.5" width="1" height="1.5" fill="url(#mp)"/>
<rect x="32" y="38.5" width="1" height="1.5" fill="url(#mp)"/>
<rect x="33" y="38.5" width="5" height="1.5" fill="url(#mk)"/>
<rect x="38" y="38.5" width="1" height="1.5" fill="url(#mp)"/>
<rect x="39" y="38.5" width="1" height="1.5" fill="url(#mp)"/>
<rect x="41" y="38.5" width="1" height="1.5" fill="url(#mp)"/>
<rect x="42" y="38.5" width="1" height="1.5" fill="url(#mp)"/>
<rect x="43" y="38.5" width="1" height="1.5" fill="url(#mp)"/>
<rect x="32" y="40.5" width="1" height="1.5" fill="url(#mp)"/>
<rect x="33" y="40.5" width="9" height="1.5" fill="url(#mk)"/>
<rect x="42" y="40.5" width="1" height="1.5" fill="url(#mp)"/>
<rect x="43" y="40.5" width="1" height="1.5" fill="url(#mp)"/>
<rect x="45" y="40.5" width="1" height="1.5" fill="url(#mp)"/>
<rect x="8" y="42.5" width="7" height="1.5" fill="url(#mm)"/>
<rect x="16" y="42.5" width="4" height="1.5" fill="url(#mm)"/>
<rect x="21" y="42.5" width="8" height="1.5" fill="url(#mm)"/>
<rect x="30" y="42.5" width="7" height="1.5" fill="url(#mm)"/>
<rect x="36" y="44.5" width="1" height="1.5" fill="url(#mp)"/>
<rect x="37" y="44.5" width="9" height="1.5" fill="url(#mk)"/>
<rect x="46" y="44.5" width="1" height="1.5" fill="url(#mp)"/>
<rect x="47" y="44.5" width="1" height="1.5" fill="url(#mp)"/>
<rect x="49" y="44.5" width="1" height="1.5" fill="url(#mp)"/>
<rect x="50" y="44.5" width="1" height="1.5" fill="url(#mp)"/>
<rect x="51" y="44.5" width="1" height="1.5" fill="url(#mp)"/>
<rect x="36" y="46.5" width="1" height="1.5" fill="url(#mp)"/>
<rect x="37" y="46.5" width="10" height="1.5" fill="url(#mk)"/>
<rect x="47" y="46.5" width="1" height="1.5" fill="url(#mp)"/>
<rect x="48" y="46.5" width="1" height="1.5" fill="url(#mp)"/>
<rect x="50" y="46.5" width="2" height="1.5" fill="url(#mp)"/>
<rect x="8" y="48.5" width="7" height="1.5" fill="url(#mm)"/>
<rect x="36" y="50.5" width="1" height="1.5" fill="url(#mp)"/>
<rect x="37" y="50.5" width="9" height="1.5" fill="url(#mk)"/>
<rect x="46" y="50.5" width="1" height="1.5" fill="url(#mp)"/>
<rect x="47" y="50.5" width="1" height="1.5" fill="url(#mp)"/>
<rect x="49" y="50.5" width="1" height="1.5" fill="url(#mp)"/>
<rect x="50" y="50.5" width="40" height="1.5" fill="url(#ms)"/>
<rect x="90" y="50.5" width="1" height="1.5" fill="url(#mp)"/>
<rect x="91" y="50.5" width="1" height="1.5" fill="url(#mp)"/>
<rect x="36" y="52.5" width="1" height="1.5" fill="url(#mp)"/>
<rect x="37" y="52.5" width="10" height="1.5" fill="url(#mk)"/>
<rect x="47" y="52.5" width="1" height="1.5" fill="url(#mp)"/>
<rect x="48" y="52.5" width="1" height="1.5" fill="url(#mp)"/>
<rect x="50" y="52.5" width="1" height="1.5" fill="url(#mp)"/>
<rect x="40" y="54.5" width="1" height="1.5" fill="url(#mp)"/>
<rect x="41" y="54.5" width="9" height="1.5" fill="url(#mk)"/>
<rect x="50" y="54.5" width="1" height="1.5" fill="url(#mp)"/>
<rect x="51" y="54.5" width="1" height="1.5" fill="url(#mp)"/>
<rect x="53" y="54.5" width="1" height="1.5" fill="url(#mp)"/>
<rect x="54" y="54.5" width="4" height="1.5" fill="url(#ms)"/>
<rect x="58" y="54.5" width="1" height="1.5" fill="url(#mp)"/>
<rect x="59" y="54.5" width="1" height="1.5" fill="url(#mp)"/>
<rect x="40" y="56.5" width="1" height="1.5" fill="url(#mp)"/>
<rect x="41" y="56.5" width="7" height="1.5" fill="url(#mk)"/>
<rect x="48" y="56.5" width="1" height="1.5" fill="url(#mp)"/>
<rect x="49" y="56.5" width="1" height="1.5" fill="url(#mp)"/>
<rect x="51" y="56.5" width="1" height="1.5" fill="url(#mp)"/>
<rect x="52" y="56.5" width="1" height="1.5" fill="url(#mp)"/>
<rect x="53" y="56.5" width="1" height="1.5" fill="url(#mp)"/>
<rect x="40" y="58.5" width="1" height="1.5" fill="url(#mp)"/>
<rect x="41" y="58.5" width="4" height="1.5" fill="url(#mk)"/>
<rect x="45" y="58.5" width="1" height="1.5" fill="url(#mp)"/>
<rect x="46" y="58.5" width="1" height="1.5" fill="url(#mp)"/>
<rect x="48" y="58.5" width="1" height="1.5" fill="url(#mp)"/>
<rect x="49" y="58.5" width="1" height="1.5" fill="url(#mp)"/>
<rect x="36" y="60.5" width="1" height="1.5" fill="url(#mp)"/>
<rect x="32" y="62.5" width="2" height="1.5" fill="url(#mp)"/>
<rect x="32" y="64.5" width="1" height="1.5" fill="url(#mp)"/>
<rect x="33" y="64.5" width="5" height="1.5" fill="url(#mk)"/>
<rect x="38" y="64.5" width="1" height="1.5" fill="url(#mp)"/>
<rect x="39" y="64.5" width="1" height="1.5" fill="url(#mp)"/>
<rect x="41" y="64.5" width="1" height="1.5" fill="url(#mp)"/>
<rect x="42" y="64.5" width="1" height="1.5" fill="url(#mp)"/>
<rect x="43" y="64.5" width="1" height="1.5" fill="url(#mp)"/>
<rect x="32" y="66.5" width="1" height="1.5" fill="url(#mp)"/>
<rect x="33" y="66.5" width="16" height="1.5" fill="url(#mk)"/>
<rect x="49" y="66.5" width="1" height="1.5" fill="url(#mp)"/>
<rect x="50" y="66.5" width="1" height="1.5" fill="url(#mp)"/>
<rect x="52" y="66.5" width="1" height="1.5" fill="url(#mp)"/>
<rect x="53" y="66.5" width="1" height="1.5" fill="url(#mp)"/>
<rect x="28" y="68.5" width="1" height="1.5" fill="url(#mp)"/>
<rect x="24" y="70.5" width="2" height="1.5" fill="url(#mp)"/>
<rect x="24" y="72.5" width="1" height="1.5" fill="url(#mp)"/>
<rect x="28" y="74.5" width="1" height="1.5" fill="url(#mp)"/>
<rect x="29" y="74.5" width="9" height="1.5" fill="url(#mk)"/>
<rect x="38" y="74.5" width="1" height="1.5" fill="url(#mp)"/>
<rect x="39" y="74.5" width="1" height="1.5" fill="url(#mp)"/>
<rect x="41" y="74.5" width="1" height="1.5" fill="url(#mp)"/>
<rect x="42" y="74.5" width="33" height="1.5" fill="url(#ms)"/>
<rect x="75" y="74.5" width="1" height="1.5" fill="url(#mp)"/>
<rect x="76" y="74.5" width="1" height="1.5" fill="url(#mp)"/>
<rect x="28" y="76.5" width="1" height="1.5" fill="url(#mp)"/>
<rect x="29" y="76.5" width="10" height="1.5" fill="url(#mk)"/>
<rect x="39" y="76.5" width="1" height="1.5" fill="url(#mp)"/>
<rect x="40" y="76.5" width="1" height="1.5" fill="url(#mp)"/>
<rect x="42" y="76.5" width="1" height="1.5" fill="url(#mp)"/>
<rect x="32" y="78.5" width="1" height="1.5" fill="url(#mp)"/>
<rect x="33" y="78.5" width="10" height="1.5" fill="url(#mk)"/>
<rect x="43" y="78.5" width="1" height="1.5" fill="url(#mp)"/>
<rect x="44" y="78.5" width="1" height="1.5" fill="url(#mp)"/>
<rect x="46" y="78.5" width="1" height="1.5" fill="url(#mp)"/>
<rect x="47" y="78.5" width="1" height="1.5" fill="url(#mp)"/>
<rect x="48" y="78.5" width="1" height="1.5" fill="url(#mp)"/>
<rect x="32" y="80.5" width="1" height="1.5" fill="url(#mp)"/>
<rect x="33" y="80.5" width="2" height="1.5" fill="url(#mk)"/>
<rect x="35" y="80.5" width="1" height="1.5" fill="url(#mp)"/>
<rect x="36" y="80.5" width="1" height="1.5" fill="url(#mp)"/>
<rect x="38" y="80.5" width="1" height="1.5" fill="url(#mp)"/>
<rect x="39" y="80.5" width="7" height="1.5" fill="url(#ms)"/>
<rect x="46" y="80.5" width="1" height="1.5" fill="url(#mp)"/>
<rect x="47" y="80.5" width="1" height="1.5" fill="url(#mp)"/>
<rect x="32" y="82.5" width="1" height="1.5" fill="url(#mp)"/>
<rect x="33" y="82.5" width="5" height="1.5" fill="url(#mk)"/>
<rect x="38" y="82.5" width="1" height="1.5" fill="url(#mp)"/>
<rect x="39" y="82.5" width="1" height="1.5" fill="url(#mp)"/>
<rect x="41" y="82.5" width="1" height="1.5" fill="url(#mp)"/>
<rect x="42" y="82.5" width="7" height="1.5" fill="url(#ms)"/>
<rect x="49" y="82.5" width="1" height="1.5" fill="url(#mp)"/>
<rect x="50" y="82.5" width="1" height="1.5" fill="url(#mp)"/>
<rect x="32" y="84.5" width="1" height="1.5" fill="url(#mp)"/>
<rect x="33" y="84.5" width="9" height="1.5" fill="url(#mk)"/>
<rect x="42" y="84.5" width="1" height="1.5" fill="url(#mp)"/>
<rect x="43" y="84.5" width="1" height="1.5" fill="url(#mp)"/>
<rect x="45" y="84.5" width="1" height="1.5" fill="url(#mp)"/>
<rect x="46" y="84.5" width="1" height="1.5" fill="url(#mp)"/>
<rect x="47" y="84.5" width="1" height="1.5" fill="url(#mp)"/>
<rect x="32" y="86.5" width="1" height="1.5" fill="url(#mp)"/>
<rect x="33" y="86.5" width="11" height="1.5" fill="url(#mk)"/>
<rect x="44" y="86.5" width="1" height="1.5" fill="url(#mp)"/>
<rect x="45" y="86.5" width="1" height="1.5" fill="url(#mp)"/>
<rect x="47" y="86.5" width="1" height="1.5" fill="url(#mp)"/>
<rect x="48" y="86.5" width="1" height="1.5" fill="url(#mp)"/>
<rect x="49" y="86.5" width="1" height="1.5" fill="url(#mp)"/>
<rect x="32" y="88.5" width="1" height="1.5" fill="url(#mp)"/>
<rect x="33" y="88.5" width="8" height="1.5" fill="url(#mk)"/>
<rect x="41" y="88.5" width="1" height="1.5" fill="url(#mp)"/>
<rect x="42" y="88.5" width="1" height="1.5" fill="url(#mp)"/>
<rect x="44" y="88.5" width="1" height="1.5" fill="url(#mp)"/>
<rect x="45" y="88.5" width="1" height="1.5" fill="url(#mp)"/>
<rect x="46" y="88.5" width="1" height="1.5" fill="url(#mp)"/>
<rect x="32" y="90.5" width="1" height="1.5" fill="url(#mp)"/>
<rect x="33" y="90.5" width="13" height="1.5" fill="url(#mk)"/>
<rect x="46" y="90.5" width="1" height="1.5" fill="url(#mp)"/>
<rect x="47" y="90.5" width="1" height="1.5" fill="url(#mp)"/>
<rect x="49" y="90.5" width="1" height="1.5" fill="url(#mp)"/>
<rect x="50" y="90.5" width="1" height="1.5" fill="url(#mp)"/>
<rect x="51" y="90.5" width="1" height="1.5" fill="url(#mp)"/>
<rect x="32" y="92.5" width="1" height="1.5" fill="url(#mp)"/>
<rect x="33" y="92.5" width="4" height="1.5" fill="url(#mk)"/>
<rect x="37" y="92.5" width="1" height="1.5" fill="url(#mp)"/>
<rect x="38" y="92.5" width="1" height="1.5" fill="url(#mp)"/>
<rect x="40" y="92.5" width="1" height="1.5" fill="url(#mp)"/>
<rect x="41" y="92.5" width="1" height="1.5" fill="url(#mp)"/>
<rect x="42" y="92.5" width="1" height="1.5" fill="url(#mp)"/>
<rect x="32" y="94.5" width="1" height="1.5" fill="url(#mp)"/>
<rect x="33" y="94.5" width="12" height="1.5" fill="url(#mk)"/>
<rect x="45" y="94.5" width="1" height="1.5" fill="url(#mp)"/>
<rect x="46" y="94.5" width="1" height="1.5" fill="url(#mp)"/>
<rect x="48" y="94.5" width="1" height="1.5" fill="url(#mp)"/>
<rect x="49" y="94.5" width="1" height="1.5" fill="url(#mp)"/>
<rect x="50" y="94.5" width="1" height="1.5" fill="url(#mp)"/>
<rect x="32" y="96.5" width="1" height="1.5" fill="url(#mp)"/>
<rect x="33" y="96.5" width="5" height="1.5" fill="url(#mk)"/>
<rect x="38" y="96.5" width="1" height="1.5" fill="url(#mp)"/>
<rect x="39" y="96.5" width="1" height="1.5" fill="url(#mp)"/>
<rect x="41" y="96.5" width="1" height="1.5" fill="url(#mp)"/>
<rect x="42" y="96.5" width="1" height="1.5" fill="url(#mp)"/>
<rect x="43" y="96.5" width="1" height="1.5" fill="url(#mp)"/>
<rect x="32" y="98.5" width="1" height="1.5" fill="url(#mp)"/>
<rect x="33" y="98.5" width="9" height="1.5" fill="url(#mk)"/>
<rect x="42" y="98.5" width="1" height="1.5" fill="url(#mp)"/>
<rect x="43" y="98.5" width="1" height="1.5" fill="url(#mp)"/>
<rect x="45" y="98.5" width="1" height="1.5" fill="url(#mp)"/>
<rect x="36" y="100.5" width="1" height="1.5" fill="url(#mp)"/>
<rect x="37" y="100.5" width="9" height="1.5" fill="url(#mk)"/>
<rect x="46" y="100.5" width="1" height="1.5" fill="url(#mp)"/>
<rect x="47" y="100.5" width="1" height="1.5" fill="url(#mp)"/>
<rect x="49" y="100.5" width="1" height="1.5" fill="url(#mp)"/>
<rect x="50" y="100.5" width="40" height="1.5" fill="url(#ms)"/>
<rect x="90" y="100.5" width="1" height="1.5" fill="url(#mp)"/>
<rect x="91" y="100.5" width="1" height="1.5" fill="url(#mp)"/>
<rect x="36" y="102.5" width="1" height="1.5" fill="url(#mp)"/>
<rect x="37" y="102.5" width="10" height="1.5" fill="url(#mk)"/>
<rect x="47" y="102.5" width="1" height="1.5" fill="url(#mp)"/>
<rect x="48" y="102.5" width="1" height="1.5" fill="url(#mp)"/>
<rect x="50" y="102.5" width="1" height="1.5" fill="url(#mp)"/>
<rect x="40" y="104.5" width="1" height="1.5" fill="url(#mp)"/>
<rect x="41" y="104.5" width="9" height="1.5" fill="url(#mk)"/>
<rect x="50" y="104.5" width="1" height="1.5" fill="url(#mp)"/>
<rect x="51" y="104.5" width="1" height="1.5" fill="url(#mp)"/>
<rect x="53" y="104.5" width="1" height="1.5" fill="url(#mp)"/>
<rect x="54" y="104.5" width="4" height="1.5" fill="url(#ms)"/>
<rect x="58" y="104.5" width="1" height="1.5" fill="url(#mp)"/>
<rect x="59" y="104.5" width="1" height="1.5" fill="url(#mp)"/>
<rect x="40" y="106.5" width="1" height="1.5" fill="url(#mp)"/>
<rect x="41" y="106.5" width="7" height="1.5" fill="url(#mk)"/>
<rect x="48" y="106.5" width="1" height="1.5" fill="url(#mp)"/>
<rect x="49" y="106.5" width="1" height="1.5" fill="url(#mp)"/>
<rect x="51" y="106.5" width="1" height="1.5" fill="url(#mp)"/>
<rect x="52" y="106.5" width="1" height="1.5" fill="url(#mp)"/>
<rect x="53" y="106.5" width="1" height="1.5" fill="url(#mp)"/>
<rect x="40" y="108.5" width="1" height="1.5" fill="url(#mp)"/>
<rect x="41" y="108.5" width="4" height="1.5" fill="url(#mk)"/>
<rect x="45" y="108.5" width="1" height="1.5" fill="url(#mp)"/>
<rect x="46" y="108.5" width="1" height="1.5" fill="url(#mp)"/>
<rect x="48" y="108.5" width="1" height="1.5" fill="url(#mp)"/>
<rect x="49" y="108.5" width="1" height="1.5" fill="url(#mp)"/>
<rect x="36" y="110.5" width="1" height="1.5" fill="url(#mp)"/>
<rect x="8" y="112.5" width="7" height="1.5" fill="url(#mm)"/>
<rect x="16" y="112.5" width="15" height="1.5" fill="url(#mm)"/>
<rect x="32" y="112.5" width="9" height="1.5" fill="url(#mm)"/>
<rect x="42" y="112.5" width="7" height="1.5" fill="url(#mm)"/>
<rect x="32" y="114.5" width="2" height="1.5" fill="url(#mp)"/>
<rect x="32" y="116.5" width="1" height="1.5" fill="url(#mp)"/>
<rect x="33" y="116.5" width="5" height="1.5" fill="url(#mk)"/>
<rect x="38" y="116.5" width="1" height="1.5" fill="url(#mp)"/>
<rect x="39" y="116.5" width="1" height="1.5" fill="url(#mp)"/>
<rect x="41" y="116.5" width="1" height="1.5" fill="url(#mp)"/>
<rect x="42" y="116.5" width="1" height="1.5" fill="url(#mp)"/>
<rect x="43" y="116.5" width="1" height="1.5" fill="url(#mp)"/>
<rect x="32" y="118.5" width="1" height="1.5" fill="url(#mp)"/>
<rect x="33" y="118.5" width="16" height="1.5" fill="url(#mk)"/>
<rect x="49" y="118.5" width="1" height="1.5" fill="url(#mp)"/>
<rect x="50" y="118.5" width="1" height="1.5" fill="url(#mp)"/>
<rect x="52" y="118.5" width="1" height="1.5" fill="url(#mp)"/>
<rect x="53" y="118.5" width="1" height="1.5" fill="url(#mp)"/>
<rect x="28" y="120.5" width="1" height="1.5" fill="url(#mp)"/>
<rect x="24" y="122.5" width="2" height="1.5" fill="url(#mp)"/>
<rect x="24" y="124.5" width="1" height="1.5" fill="url(#mp)"/>
<rect x="28" y="126.5" width="1" height="1.5" fill="url(#mp)"/>
<rect x="29" y="126.5" width="9" height="1.5" fill="url(#mk)"/>
<rect x="38" y="126.5" width="1" height="1.5" fill="url(#mp)"/>
<rect x="39" y="126.5" width="1" height="1.5" fill="url(#mp)"/>
<rect x="41" y="126.5" width="1" height="1.5" fill="url(#mp)"/>
<rect x="42" y="126.5" width="33" height="1.5" fill="url(#ms)"/>
<rect x="75" y="126.5" width="1" height="1.5" fill="url(#mp)"/>
<rect x="76" y="126.5" width="1" height="1.5" fill="url(#mp)"/>
<rect x="28" y="128.5" width="1" height="1.5" fill="url(#mp)"/>
<rect x="29" y="128.5" width="10" height="1.5" fill="url(#mk)"/>
<rect x="39" y="128.5" width="1" height="1.5" fill="url(#mp)"/>
<rect x="40" y="128.5" width="1" height="1.5" fill="url(#mp)"/>
<rect x="42" y="128.5" width="1" height="1.5" fill="url(#mp)"/>
<rect x="32" y="130.5" width="1" height="1.5" fill="url(#mp)"/>
<rect x="33" y="130.5" width="12" height="1.5" fill="url(#mk)"/>
<rect x="45" y="130.5" width="1" height="1.5" fill="url(#mp)"/>
<rect x="46" y="130.5" width="1" height="1.5" fill="url(#mp)"/>
<rect x="48" y="130.5" width="1" height="1.5" fill="url(#mp)"/>
<rect x="49" y="130.5" width="4" height="1.5" fill="url(#ms)"/>
<rect x="53" y="130.5" width="1" height="1.5" fill="url(#mp)"/>
<rect x="54" y="130.5" width="1" height="1.5" fill="url(#mp)"/>
<rect x="32" y="132.5" width="1" height="1.5" fill="url(#mp)"/>
<rect x="33" y="132.5" width="2" height="1.5" fill="url(#mk)"/>
<rect x="35" y="132.5" width="1" height="1.5" fill="url(#mp)"/>
<rect x="36" y="132.5" width="1" height="1.5" fill="url(#mp)"/>
<rect x="38" y="132.5" width="1" height="1.5" fill="url(#mp)"/>
<rect x="39" y="132.5" width="8" height="1.5" fill="url(#ms)"/>
<rect x="47" y="132.5" width="1" height="1.5" fill="url(#mp)"/>
<rect x="48" y="132.5" width="1" height="1.5" fill="url(#mp)"/>
<rect x="32" y="134.5" width="1" height="1.5" fill="url(#mp)"/>
<rect x="33" y="134.5" width="5" height="1.5" fill="url(#mk)"/>
<rect x="38" y="134.5" width="1" height="1.5" fill="url(#mp)"/>
<rect x="39" y="134.5" width="1" height="1.5" fill="url(#mp)"/>
<rect x="41" y="134.5" width="1" height="1.5" fill="url(#mp)"/>
<rect x="42" y="134.5" width="8" height="1.5" fill="url(#ms)"/>
<rect x="50" y="134.5" width="1" height="1.5" fill="url(#mp)"/>
<rect x="51" y="134.5" width="1" height="1.5" fill="url(#mp)"/>
<rect x="8" y="136.5" width="7" height="1.5" fill="url(#mm)"/>
<rect x="16" y="136.5" width="4" height="1.5" fill="url(#mm)"/>
<rect x="32" y="138.5" width="1" height="1.5" fill="url(#mp)"/>
<rect x="33" y="138.5" width="8" height="1.5" fill="url(#mk)"/>
<rect x="41" y="138.5" width="1" height="1.5" fill="url(#mp)"/>
<rect x="42" y="138.5" width="1" height="1.5" fill="url(#mp)"/>
<rect x="44" y="138.5" width="1" height="1.5" fill="url(#mp)"/>
<rect x="45" y="138.5" width="4" height="1.5" fill="url(#ms)"/>
<rect x="49" y="138.5" width="1" height="1.5" fill="url(#mp)"/>
<rect x="50" y="138.5" width="1" height="1.5" fill="url(#mp)"/>
<rect x="8" y="140.5" width="7" height="1.5" fill="url(#mm)"/>
<rect x="32" y="142.5" width="1" height="1.5" fill="url(#mp)"/>
<rect x="33" y="142.5" width="14" height="1.5" fill="url(#mk)"/>
<rect x="47" y="142.5" width="1" height="1.5" fill="url(#mp)"/>
<rect x="48" y="142.5" width="1" height="1.5" fill="url(#mp)"/>
<rect x="50" y="142.5" width="1" height="1.5" fill="url(#mp)"/>
<rect x="51" y="142.5" width="1" height="1.5" fill="url(#mp)"/>
<rect x="52" y="142.5" width="1" height="1.5" fill="url(#mp)"/>
<rect x="8" y="144.5" width="7" height="1.5" fill="url(#mm)"/>
<rect x="16" y="144.5" width="15" height="1.5" fill="url(#mm)"/>
<rect x="32" y="146.5" width="1" height="1.5" fill="url(#mp)"/>
<rect x="33" y="146.5" width="2" height="1.5" fill="url(#mk)"/>
<rect x="35" y="146.5" width="1" height="1.5" fill="url(#mp)"/>
<rect x="36" y="146.5" width="1" height="1.5" fill="url(#mp)"/>
<rect x="38" y="146.5" width="1" height="1.5" fill="url(#mp)"/>
<rect x="39" y="146.5" width="4" height="1.5" fill="url(#ms)"/>
<rect x="43" y="146.5" width="1" height="1.5" fill="url(#mp)"/>
<rect x="44" y="146.5" width="1" height="1.5" fill="url(#mp)"/>
<rect x="32" y="148.5" width="1" height="1.5" fill="url(#mp)"/>
<rect x="33" y="148.5" width="5" height="1.5" fill="url(#mk)"/>
<rect x="38" y="148.5" width="1" height="1.5" fill="url(#mp)"/>
<rect x="39" y="148.5" width="1" height="1.5" fill="url(#mp)"/>
<rect x="41" y="148.5" width="1" height="1.5" fill="url(#mp)"/>
<rect x="42" y="148.5" width="4" height="1.5" fill="url(#ms)"/>
<rect x="46" y="148.5" width="1" height="1.5" fill="url(#mp)"/>
<rect x="47" y="148.5" width="1" height="1.5" fill="url(#mp)"/>
<rect x="32" y="150.5" width="1" height="1.5" fill="url(#mp)"/>
<rect x="33" y="150.5" width="9" height="1.5" fill="url(#mk)"/>
<rect x="42" y="150.5" width="1" height="1.5" fill="url(#mp)"/>
<rect x="43" y="150.5" width="1" height="1.5" fill="url(#mp)"/>
<rect x="45" y="150.5" width="1" height="1.5" fill="url(#mp)"/>
<rect x="46" y="150.5" width="1" height="1.5" fill="url(#mp)"/>
<rect x="47" y="150.5" width="1" height="1.5" fill="url(#mp)"/>
<rect x="32" y="152.5" width="1" height="1.5" fill="url(#mp)"/>
<rect x="33" y="152.5" width="8" height="1.5" fill="url(#mk)"/>
<rect x="41" y="152.5" width="1" height="1.5" fill="url(#mp)"/>
<rect x="42" y="152.5" width="1" height="1.5" fill="url(#mp)"/>
<rect x="44" y="152.5" width="1" height="1.5" fill="url(#mp)"/>
<rect x="45" y="152.5" width="1" height="1.5" fill="url(#mp)"/>
<rect x="46" y="152.5" width="1" height="1.5" fill="url(#mp)"/>
<rect x="32" y="154.5" width="1" height="1.5" fill="url(#mp)"/>
<rect x="33" y="154.5" width="13" height="1.5" fill="url(#mk)"/>
<rect x="46" y="154.5" width="1" height="1.5" fill="url(#mp)"/>
<rect x="47" y="154.5" width="1" height="1.5" fill="url(#mp)"/>
<rect x="49" y="154.5" width="1" height="1.5" fill="url(#mp)"/>
<rect x="50" y="154.5" width="1" height="1.5" fill="url(#mp)"/>
<rect x="51" y="154.5" width="1" height="1.5" fill="url(#mp)"/>
<rect x="8" y="156.5" width="7" height="1.5" fill="url(#mm)"/>
<rect x="16" y="156.5" width="4" height="1.5" fill="url(#mm)"/>
<rect x="32" y="158.5" width="1" height="1.5" fill="url(#mp)"/>
<rect x="33" y="158.5" width="16" height="1.5" fill="url(#mk)"/>
<rect x="49" y="158.5" width="1" height="1.5" fill="url(#mp)"/>
<rect x="50" y="158.5" width="1" height="1.5" fill="url(#mp)"/>
<rect x="52" y="158.5" width="1" height="1.5" fill="url(#mp)"/>
<rect x="53" y="158.5" width="4" height="1.5" fill="url(#ms)"/>
<rect x="57" y="158.5" width="1" height="1.5" fill="url(#mp)"/>
<rect x="58" y="158.5" width="1" height="1.5" fill="url(#mp)"/>
<rect x="8" y="160.5" width="7" height="1.5" fill="url(#mm)"/>
<rect x="32" y="162.5" width="1" height="1.5" fill="url(#mp)"/>
<rect x="33" y="162.5" width="19" height="1.5" fill="url(#mk)"/>
<rect x="52" y="162.5" width="1" height="1.5" fill="url(#mp)"/>
<rect x="53" y="162.5" width="1" height="1.5" fill="url(#mp)"/>
<rect x="55" y="162.5" width="1" height="1.5" fill="url(#mp)"/>
<rect x="56" y="162.5" width="1" height="1.5" fill="url(#mp)"/>
<rect x="57" y="162.5" width="1" height="1.5" fill="url(#mp)"/>
<rect x="8" y="164.5" width="7" height="1.5" fill="url(#mm)"/>
<rect x="16" y="164.5" width="15" height="1.5" fill="url(#mm)"/>
<rect x="32" y="166.5" width="1" height="1.5" fill="url(#mp)"/>
<rect x="33" y="166.5" width="17" height="1.5" fill="url(#mk)"/>
<rect x="50" y="166.5" width="1" height="1.5" fill="url(#mp)"/>
<rect x="51" y="166.5" width="1" height="1.5" fill="url(#mp)"/>
<rect x="53" y="166.5" width="1" height="1.5" fill="url(#mp)"/>
<rect x="54" y="166.5" width="1" height="1.5" fill="url(#mp)"/>
<rect x="55" y="166.5" width="1" height="1.5" fill="url(#mp)"/>
<rect x="32" y="168.5" width="1" height="1.5" fill="url(#mp)"/>
<rect x="33" y="168.5" width="9" height="1.5" fill="url(#mk)"/>
<rect x="42" y="168.5" width="1" height="1.5" fill="url(#mp)"/>
<rect x="43" y="168.5" width="1" height="1.5" fill="url(#mp)"/>
<rect x="45" y="168.5" width="1" height="1.5" fill="url(#mp)"/>
<rect x="36" y="170.5" width="1" height="1.5" fill="url(#mp)"/>
<rect x="37" y="170.5" width="9" height="1.5" fill="url(#mk)"/>
<rect x="46" y="170.5" width="1" height="1.5" fill="url(#mp)"/>
<rect x="47" y="170.5" width="1" height="1.5" fill="url(#mp)"/>
<rect x="49" y="170.5" width="1" height="1.5" fill="url(#mp)"/>
<rect x="50" y="170.5" width="1" height="1.5" fill="url(#mp)"/>
<rect x="51" y="170.5" width="1" height="1.5" fill="url(#mp)"/>
<rect x="36" y="172.5" width="1" height="1.5" fill="url(#mp)"/>
<rect x="37" y="172.5" width="10" height="1.5" fill="url(#mk)"/>
<rect x="47" y="172.5" width="1" height="1.5" fill="url(#mp)"/>
<rect x="48" y="172.5" width="1" height="1.5" fill="url(#mp)"/>
<rect x="50" y="172.5" width="2" height="1.5" fill="url(#mp)"/>
<rect x="32" y="174.5" width="2" height="1.5" fill="url(#mp)"/>
<rect x="32" y="176.5" width="1" height="1.5" fill="url(#mp)"/>
<rect x="33" y="176.5" width="5" height="1.5" fill="url(#mk)"/>
<rect x="38" y="176.5" width="1" height="1.5" fill="url(#mp)"/>
<rect x="39" y="176.5" width="1" height="1.5" fill="url(#mp)"/>
<rect x="41" y="176.5" width="1" height="1.5" fill="url(#mp)"/>
<rect x="42" y="176.5" width="1" height="1.5" fill="url(#mp)"/>
<rect x="43" y="176.5" width="1" height="1.5" fill="url(#mp)"/>
<rect x="32" y="178.5" width="1" height="1.5" fill="url(#mp)"/>
<rect x="33" y="178.5" width="16" height="1.5" fill="url(#mk)"/>
<rect x="49" y="178.5" width="1" height="1.5" fill="url(#mp)"/>
<rect x="50" y="178.5" width="1" height="1.5" fill="url(#mp)"/>
<rect x="52" y="178.5" width="1" height="1.5" fill="url(#mp)"/>
<rect x="53" y="178.5" width="1" height="1.5" fill="url(#mp)"/>
<rect x="28" y="180.5" width="1" height="1.5" fill="url(#mp)"/>
<rect x="24" y="182.5" width="2" height="1.5" fill="url(#mp)"/>
<rect x="24" y="184.5" width="1" height="1.5" fill="url(#mp)"/>
<rect x="28" y="186.5" width="1" height="1.5" fill="url(#mp)"/>
<rect x="29" y="186.5" width="9" height="1.5" fill="url(#mk)"/>
<rect x="38" y="186.5" width="1" height="1.5" fill="url(#mp)"/>
<rect x="39" y="186.5" width="1" height="1.5" fill="url(#mp)"/>
<rect x="41" y="186.5" width="1" height="1.5" fill="url(#mp)"/>
<rect x="42" y="186.5" width="32" height="1.5" fill="url(#ms)"/>
<rect x="74" y="186.5" width="1" height="1.5" fill="url(#mp)"/>
<rect x="75" y="186.5" width="1" height="1.5" fill="url(#mp)"/>
<rect x="28" y="188.5" width="1" height="1.5" fill="url(#mp)"/>
<rect x="29" y="188.5" width="10" height="1.5" fill="url(#mk)"/>
<rect x="39" y="188.5" width="1" height="1.5" fill="url(#mp)"/>
<rect x="40" y="188.5" width="1" height="1.5" fill="url(#mp)"/>
<rect x="42" y="188.5" width="1" height="1.5" fill="url(#mp)"/>
<rect x="32" y="190.5" width="1" height="1.5" fill="url(#mp)"/>
<rect x="33" y="190.5" width="4" height="1.5" fill="url(#mk)"/>
<rect x="37" y="190.5" width="1" height="1.5" fill="url(#mp)"/>
<rect x="38" y="190.5" width="1" height="1.5" fill="url(#mp)"/>
<rect x="40" y="190.5" width="1" height="1.5" fill="url(#mp)"/>
<rect x="41" y="190.5" width="2" height="1.5" fill="url(#ms)"/>
<rect x="43" y="190.5" width="1" height="1.5" fill="url(#mp)"/>
<rect x="44" y="190.5" width="1" height="1.5" fill="url(#mp)"/>
<rect x="32" y="192.5" width="1" height="1.5" fill="url(#mp)"/>
<rect x="33" y="192.5" width="2" height="1.5" fill="url(#mk)"/>
<rect x="35" y="192.5" width="1" height="1.5" fill="url(#mp)"/>
<rect x="36" y="192.5" width="1" height="1.5" fill="url(#mp)"/>
<rect x="38" y="192.5" width="1" height="1.5" fill="url(#mp)"/>
<rect x="39" y="192.5" width="7" height="1.5" fill="url(#ms)"/>
<rect x="46" y="192.5" width="1" height="1.5" fill="url(#mp)"/>
<rect x="47" y="192.5" width="1" height="1.5" fill="url(#mp)"/>
<rect x="32" y="194.5" width="1" height="1.5" fill="url(#mp)"/>
<rect x="33" y="194.5" width="5" height="1.5" fill="url(#mk)"/>
<rect x="38" y="194.5" width="1" height="1.5" fill="url(#mp)"/>
<rect x="39" y="194.5" width="1" height="1.5" fill="url(#mp)"/>
<rect x="41" y="194.5" width="1" height="1.5" fill="url(#mp)"/>
<rect x="42" y="194.5" width="7" height="1.5" fill="url(#ms)"/>
<rect x="49" y="194.5" width="1" height="1.5" fill="url(#mp)"/>
<rect x="50" y="194.5" width="1" height="1.5" fill="url(#mp)"/>
<rect x="8" y="196.5" width="7" height="1.5" fill="url(#mm)"/>
<rect x="16" y="196.5" width="4" height="1.5" fill="url(#mm)"/>
<rect x="32" y="198.5" width="1" height="1.5" fill="url(#mp)"/>
<rect x="33" y="198.5" width="11" height="1.5" fill="url(#mk)"/>
<rect x="44" y="198.5" width="1" height="1.5" fill="url(#mp)"/>
<rect x="45" y="198.5" width="1" height="1.5" fill="url(#mp)"/>
<rect x="47" y="198.5" width="1" height="1.5" fill="url(#mp)"/>
<rect x="48" y="198.5" width="4" height="1.5" fill="url(#ms)"/>
<rect x="52" y="198.5" width="1" height="1.5" fill="url(#mp)"/>
<rect x="53" y="198.5" width="1" height="1.5" fill="url(#mp)"/>
<rect x="8" y="200.5" width="7" height="1.5" fill="url(#mm)"/>
<rect x="32" y="202.5" width="1" height="1.5" fill="url(#mp)"/>
<rect x="33" y="202.5" width="12" height="1.5" fill="url(#mk)"/>
<rect x="45" y="202.5" width="1" height="1.5" fill="url(#mp)"/>
<rect x="46" y="202.5" width="1" height="1.5" fill="url(#mp)"/>
<rect x="48" y="202.5" width="1" height="1.5" fill="url(#mp)"/>
<rect x="49" y="202.5" width="1" height="1.5" fill="url(#mp)"/>
<rect x="50" y="202.5" width="1" height="1.5" fill="url(#mp)"/>
<rect x="8" y="204.5" width="7" height="1.5" fill="url(#mm)"/>
<rect x="16" y="204.5" width="15" height="1.5" fill="url(#mm)"/>
<rect x="32" y="206.5" width="1" height="1.5" fill="url(#mp)"/>
<rect x="33" y="206.5" width="2" height="1.5" fill="url(#mk)"/>
<rect x="35" y="206.5" width="1" height="1.5" fill="url(#mp)"/>
<rect x="36" y="206.5" width="1" height="1.5" fill="url(#mp)"/>
<rect x="38" y="206.5" width="1" height="1.5" fill="url(#mp)"/>
<rect x="39" y="206.5" width="3" height="1.5" fill="url(#ms)"/>
<rect x="42" y="206.5" width="1" height="1.5" fill="url(#mp)"/>
<rect x="43" y="206.5" width="1" height="1.5" fill="url(#mp)"/>
<rect x="32" y="208.5" width="1" height="1.5" fill="url(#mp)"/>
<rect x="33" y="208.5" width="5" height="1.5" fill="url(#mk)"/>
<rect x="38" y="208.5" width="1" height="1.5" fill="url(#mp)"/>
<rect x="39" y="208.5" width="1" height="1.5" fill="url(#mp)"/>
<rect x="41" y="208.5" width="1" height="1.5" fill="url(#mp)"/>
<rect x="42" y="208.5" width="3" height="1.5" fill="url(#ms)"/>
<rect x="45" y="208.5" width="1" height="1.5" fill="url(#mp)"/>
<rect x="46" y="208.5" width="1" height="1.5" fill="url(#mp)"/>
<rect x="32" y="210.5" width="1" height="1.5" fill="url(#mp)"/>
<rect x="33" y="210.5" width="9" height="1.5" fill="url(#mk)"/>
<rect x="42" y="210.5" width="1" height="1.5" fill="url(#mp)"/>
<rect x="43" y="210.5" width="1" height="1.5" fill="url(#mp)"/>
<rect x="45" y="210.5" width="1" height="1.5" fill="url(#mp)"/>
<rect x="46" y="210.5" width="1" height="1.5" fill="url(#mp)"/>
<rect x="47" y="210.5" width="1" height="1.5" fill="url(#mp)"/>
<rect x="32" y="212.5" width="1" height="1.5" fill="url(#mp)"/>
<rect x="33" y="212.5" width="8" height="1.5" fill="url(#mk)"/>
<rect x="41" y="212.5" width="1" height="1.5" fill="url(#mp)"/>
<rect x="42" y="212.5" width="1" height="1.5" fill="url(#mp)"/>
<rect x="44" y="212.5" width="1" height="1.5" fill="url(#mp)"/>
<rect x="45" y="212.5" width="1" height="1.5" fill="url(#mp)"/>
<rect x="46" y="212.5" width="1" height="1.5" fill="url(#mp)"/>
<rect x="32" y="214.5" width="1" height="1.5" fill="url(#mp)"/>
<rect x="33" y="214.5" width="13" height="1.5" fill="url(#mk)"/>
<rect x="46" y="214.5" width="1" height="1.5" fill="url(#mp)"/>
<rect x="47" y="214.5" width="1" height="1.5" fill="url(#mp)"/>
<rect x="49" y="214.5" width="1" height="1.5" fill="url(#mp)"/>
<rect x="50" y="214.5" width="1" height="1.5" fill="url(#mp)"/>
<rect x="51" y="214.5" width="1" height="1.5" fill="url(#mp)"/>
<rect x="8" y="216.5" width="7" height="1.5" fill="url(#mm)"/>
<rect x="16" y="216.5" width="4" height="1.5" fill="url(#mm)"/>
<rect x="32" y="218.5" width="1" height="1.5" fill="url(#mp)"/>
<rect x="33" y="218.5" width="16" height="1.5" fill="url(#mk)"/>
<rect x="49" y="218.5" width="1" height="1.5" fill="url(#mp)"/>
<rect x="50" y="218.5" width="1" height="1.5" fill="url(#mp)"/>
<rect x="52" y="218.5" width="1" height="1.5" fill="url(#mp)"/>
<rect x="53" y="218.5" width="4" height="1.5" fill="url(#ms)"/>
<rect x="57" y="218.5" width="1" height="1.5" fill="url(#mp)"/>
<rect x="58" y="218.5" width="1" height="1.5" fill="url(#mp)"/>
<rect x="8" y="220.5" width="7" height="1.5" fill="url(#mm)"/>
<rect x="32" y="222.5" width="1" height="1.5" fill="url(#mp)"/>
<rect x="33" y="222.5" width="19" height="1.5" fill="url(#mk)"/>
<rect x="52" y="222.5" width="1" height="1.5" fill="url(#mp)"/>
<rect x="53" y="222.5" width="1" height="1.5" fill="url(#mp)"/>
<rect x="55" y="222.5" width="1" height="1.5" fill="url(#mp)"/>
<rect x="56" y="222.5" width="1" height="1.5" fill="url(#mp)"/>
<rect x="57" y="222.5" width="1" height="1.5" fill="url(#mp)"/>
<rect x="8" y="224.5" width="7" height="1.5" fill="url(#mm)"/>
<rect x="16" y="224.5" width="15" height="1.5" fill="url(#mm)"/>
<rect x="32" y="226.5" width="1" height="1.5" fill="url(#mp)"/>
<rect x="33" y="226.5" width="4" height="1.5" fill="url(#mk)"/>
<rect x="37" y="226.5" width="1" height="1.5" fill="url(#mp)"/>
<rect x="38" y="226.5" width="1" height="1.5" fill="url(#mp)"/>
<rect x="40" y="226.5" width="1" height="1.5" fill="url(#mp)"/>
<rect x="41" y="226.5" width="1" height="1.5" fill="url(#ms)"/>
<rect x="42" y="226.5" width="1" height="1.5" fill="url(#mp)"/>
<rect x="43" y="226.5" width="1" height="1.5" fill="url(#mp)"/>
<rect x="32" y="228.5" width="1" height="1.5" fill="url(#mp)"/>
<rect x="33" y="228.5" width="9" height="1.5" fill="url(#mk)"/>
<rect x="42" y="228.5" width="1" height="1.5" fill="url(#mp)"/>
<rect x="43" y="228.5" width="1" height="1.5" fill="url(#mp)"/>
<rect x="45" y="228.5" width="1" height="1.5" fill="url(#mp)"/>
<rect x="36" y="230.5" width="1" height="1.5" fill="url(#mp)"/>
<rect x="37" y="230.5" width="9" height="1.5" fill="url(#mk)"/>
<rect x="46" y="230.5" width="1" height="1.5" fill="url(#mp)"/>
<rect x="47" y="230.5" width="1" height="1.5" fill="url(#mp)"/>
<rect x="49" y="230.5" width="1" height="1.5" fill="url(#mp)"/>
<rect x="50" y="230.5" width="1" height="1.5" fill="url(#mp)"/>
<rect x="51" y="230.5" width="1" height="1.5" fill="url(#mp)"/>
<rect x="36" y="232.5" width="1" height="1.5" fill="url(#mp)"/>
<rect x="37" y="232.5" width="10" height="1.5" fill="url(#mk)"/>
<rect x="47" y="232.5" width="1" height="1.5" fill="url(#mp)"/>
<rect x="48" y="232.5" width="1" height="1.5" fill="url(#mp)"/>
<rect x="50" y="232.5" width="2" height="1.5" fill="url(#mp)"/>
<rect x="32" y="234.5" width="2" height="1.5" fill="url(#mp)"/>
<rect x="32" y="236.5" width="1" height="1.5" fill="url(#mp)"/>
<rect x="33" y="236.5" width="5" height="1.5" fill="url(#mk)"/>
<rect x="38" y="236.5" width="1" height="1.5" fill="url(#mp)"/>
<rect x="39" y="236.5" width="1" height="1.5" fill="url(#mp)"/>
<rect x="41" y="236.5" width="1" height="1.5" fill="url(#mp)"/>
<rect x="42" y="236.5" width="1" height="1.5" fill="url(#mp)"/>
<rect x="43" y="236.5" width="1" height="1.5" fill="url(#mp)"/>
<rect x="32" y="238.5" width="1" height="1.5" fill="url(#mp)"/>
<rect x="33" y="238.5" width="16" height="1.5" fill="url(#mk)"/>
<rect x="49" y="238.5" width="1" height="1.5" fill="url(#mp)"/>
<rect x="50" y="238.5" width="1" height="1.5" fill="url(#mp)"/>
<rect x="52" y="238.5" width="1" height="1.5" fill="url(#mp)"/>
<rect x="53" y="238.5" width="1" height="1.5" fill="url(#mp)"/>
<rect x="28" y="240.5" width="1" height="1.5" fill="url(#mp)"/>
<rect x="24" y="242.5" width="1" height="1.5" fill="url(#mp)"/>
<rect x="20" y="244.5" width="1" height="1.5" fill="url(#mp)"/>
<rect x="16" y="246.5" width="3" height="1.5" fill="url(#mp)"/>
<rect x="16" y="248.5" width="1" height="1.5" fill="url(#mp)"/>
<rect x="17" y="248.5" width="10" height="1.5" fill="url(#mk)"/>
<rect x="27" y="248.5" width="1" height="1.5" fill="url(#mp)"/>
<rect x="28" y="248.5" width="1" height="1.5" fill="url(#mp)"/>
<rect x="30" y="248.5" width="1" height="1.5" fill="url(#mp)"/>
<rect x="20" y="250.5" width="1" height="1.5" fill="url(#mp)"/>
<rect x="21" y="250.5" width="2" height="1.5" fill="url(#mk)"/>
<rect x="23" y="250.5" width="1" height="1.5" fill="url(#mp)"/>
<rect x="24" y="250.5" width="1" height="1.5" fill="url(#mp)"/>
<rect x="26" y="250.5" width="1" height="1.5" fill="url(#mp)"/>
<rect x="27" y="250.5" width="8" height="1.5" fill="url(#ms)"/>
<rect x="35" y="250.5" width="1" height="1.5" fill="url(#mp)"/>
<rect x="36" y="250.5" width="1" height="1.5" fill="url(#mp)"/>
<rect x="20" y="252.5" width="1" height="1.5" fill="url(#mp)"/>
<rect x="21" y="252.5" width="5" height="1.5" fill="url(#mk)"/>
<rect x="26" y="252.5" width="1" height="1.5" fill="url(#mp)"/>
<rect x="27" y="252.5" width="1" height="1.5" fill="url(#mp)"/>
<rect x="29" y="252.5" width="1" height="1.5" fill="url(#mp)"/>
<rect x="30" y="252.5" width="7" height="1.5" fill="url(#ms)"/>
<rect x="37" y="252.5" width="1" height="1.5" fill="url(#mp)"/>
<rect x="38" y="252.5" width="1" height="1.5" fill="url(#mp)"/>
<rect x="20" y="254.5" width="1" height="1.5" fill="url(#mp)"/>
<rect x="21" y="254.5" width="10" height="1.5" fill="url(#mk)"/>
<rect x="31" y="254.5" width="1" height="1.5" fill="url(#mp)"/>
<rect x="32" y="254.5" width="1" height="1.5" fill="url(#mp)"/>
<rect x="34" y="254.5" width="1" height="1.5" fill="url(#mp)"/>
<rect x="24" y="256.5" width="1" height="1.5" fill="url(#mp)"/>
<rect x="25" y="256.5" width="9" height="1.5" fill="url(#mk)"/>
<rect x="34" y="256.5" width="1" height="1.5" fill="url(#mp)"/>
<rect x="35" y="256.5" width="1" height="1.5" fill="url(#mp)"/>
<rect x="37" y="256.5" width="1" height="1.5" fill="url(#mp)"/>
<rect x="38" y="256.5" width="1" height="1.5" fill="url(#mp)"/>
<rect x="39" y="256.5" width="1" height="1.5" fill="url(#mp)"/>
<rect x="24" y="258.5" width="1" height="1.5" fill="url(#mp)"/>
<rect x="25" y="258.5" width="10" height="1.5" fill="url(#mk)"/>
<rect x="35" y="258.5" width="1" height="1.5" fill="url(#mp)"/>
<rect x="36" y="258.5" width="1" height="1.5" fill="url(#mp)"/>
<rect x="38" y="258.5" width="2" height="1.5" fill="url(#mp)"/>
<rect x="20" y="260.5" width="2" height="1.5" fill="url(#mp)"/>
<rect x="20" y="262.5" width="1" height="1.5" fill="url(#mp)"/>
<rect x="21" y="262.5" width="10" height="1.5" fill="url(#mk)"/>
<rect x="31" y="262.5" width="1" height="1.5" fill="url(#mp)"/>
<rect x="32" y="262.5" width="1" height="1.5" fill="url(#mp)"/>
<rect x="34" y="262.5" width="1" height="1.5" fill="url(#mp)"/>
<rect x="24" y="264.5" width="1" height="1.5" fill="url(#mp)"/>
<rect x="25" y="264.5" width="9" height="1.5" fill="url(#mk)"/>
<rect x="34" y="264.5" width="1" height="1.5" fill="url(#mp)"/>
<rect x="35" y="264.5" width="1" height="1.5" fill="url(#mp)"/>
<rect x="37" y="264.5" width="1" height="1.5" fill="url(#mp)"/>
<rect x="38" y="264.5" width="1" height="1.5" fill="url(#mp)"/>
<rect x="39" y="264.5" width="1" height="1.5" fill="url(#mp)"/>
<rect x="24" y="266.5" width="1" height="1.5" fill="url(#mp)"/>
<rect x="25" y="266.5" width="10" height="1.5" fill="url(#mk)"/>
<rect x="35" y="266.5" width="1" height="1.5" fill="url(#mp)"/>
<rect x="36" y="266.5" width="1" height="1.5" fill="url(#mp)"/>
<rect x="38" y="266.5" width="2" height="1.5" fill="url(#mp)"/>
<rect x="20" y="268.5" width="2" height="1.5" fill="url(#mp)"/>
<rect x="20" y="270.5" width="1" height="1.5" fill="url(#mp)"/>
<rect x="21" y="270.5" width="8" height="1.5" fill="url(#mk)"/>
<rect x="29" y="270.5" width="1" height="1.5" fill="url(#mp)"/>
<rect x="30" y="270.5" width="1" height="1.5" fill="url(#mp)"/>
<rect x="32" y="270.5" width="1" height="1.5" fill="url(#mp)"/>
<rect x="33" y="270.5" width="1" height="1.5" fill="url(#mp)"/>
<rect x="34" y="270.5" width="1" height="1.5" fill="url(#mp)"/>
<rect x="20" y="272.5" width="1" height="1.5" fill="url(#mp)"/>
<rect x="21" y="272.5" width="13" height="1.5" fill="url(#mk)"/>
<rect x="34" y="272.5" width="1" height="1.5" fill="url(#mp)"/>
<rect x="35" y="272.5" width="1" height="1.5" fill="url(#mp)"/>
<rect x="37" y="272.5" width="1" height="1.5" fill="url(#mp)"/>
<rect x="38" y="272.5" width="1" height="1.5" fill="url(#mp)"/>
<rect x="39" y="272.5" width="1" height="1.5" fill="url(#mp)"/>
<rect x="20" y="274.5" width="1" height="1.5" fill="url(#mp)"/>
<rect x="21" y="274.5" width="11" height="1.5" fill="url(#mk)"/>
<rect x="32" y="274.5" width="1" height="1.5" fill="url(#mp)"/>
<rect x="33" y="274.5" width="1" height="1.5" fill="url(#mp)"/>
<rect x="35" y="274.5" width="1" height="1.5" fill="url(#mp)"/>
<rect x="24" y="276.5" width="1" height="1.5" fill="url(#mp)"/>
<rect x="25" y="276.5" width="9" height="1.5" fill="url(#mk)"/>
<rect x="34" y="276.5" width="1" height="1.5" fill="url(#mp)"/>
<rect x="35" y="276.5" width="1" height="1.5" fill="url(#mp)"/>
<rect x="37" y="276.5" width="1" height="1.5" fill="url(#mp)"/>
<rect x="38" y="276.5" width="1" height="1.5" fill="url(#mp)"/>
<rect x="39" y="276.5" width="1" height="1.5" fill="url(#mp)"/>
<rect x="24" y="278.5" width="1" height="1.5" fill="url(#mp)"/>
<rect x="25" y="278.5" width="10" height="1.5" fill="url(#mk)"/>
<rect x="35" y="278.5" width="1" height="1.5" fill="url(#mp)"/>
<rect x="36" y="278.5" width="1" height="1.5" fill="url(#mp)"/>
<rect x="38" y="278.5" width="2" height="1.5" fill="url(#mp)"/>
<rect x="20" y="280.5" width="1" height="1.5" fill="url(#mp)"/>
<rect x="16" y="282.5" width="1" height="1.5" fill="url(#mp)"/>
<rect x="12" y="284.5" width="3" height="1.5" fill="url(#mp)"/>
<rect x="12" y="286.5" width="1" height="1.5" fill="url(#mp)"/>
<rect x="13" y="286.5" width="10" height="1.5" fill="url(#mk)"/>
<rect x="23" y="286.5" width="1" height="1.5" fill="url(#mp)"/>
<rect x="24" y="286.5" width="1" height="1.5" fill="url(#mp)"/>
<rect x="26" y="286.5" width="1" height="1.5" fill="url(#mp)"/>
<rect x="16" y="288.5" width="1" height="1.5" fill="url(#mp)"/>
<rect x="17" y="288.5" width="11" height="1.5" fill="url(#mk)"/>
<rect x="28" y="288.5" width="1" height="1.5" fill="url(#mp)"/>
<rect x="29" y="288.5" width="1" height="1.5" fill="url(#mp)"/>
<rect x="31" y="288.5" width="1" height="1.5" fill="url(#mp)"/>
<rect x="32" y="288.5" width="1" height="1.5" fill="url(#mp)"/>
<rect x="33" y="288.5" width="1" height="1.5" fill="url(#mp)"/>
<rect x="16" y="290.5" width="1" height="1.5" fill="url(#mp)"/>
<rect x="17" y="290.5" width="2" height="1.5" fill="url(#mk)"/>
<rect x="19" y="290.5" width="1" height="1.5" fill="url(#mp)"/>
<rect x="20" y="290.5" width="1" height="1.5" fill="url(#mp)"/>
<rect x="22" y="290.5" width="1" height="1.5" fill="url(#mp)"/>
<rect x="23" y="290.5" width="7" height="1.5" fill="url(#ms)"/>
<rect x="30" y="290.5" width="1" height="1.5" fill="url(#mp)"/>
<rect x="31" y="290.5" width="1" height="1.5" fill="url(#mp)"/>
<rect x="16" y="292.5" width="1" height="1.5" fill="url(#mp)"/>
<rect x="17" y="292.5" width="10" height="1.5" fill="url(#mk)"/>
<rect x="27" y="292.5" width="1" height="1.5" fill="url(#mp)"/>
<rect x="28" y="292.5" width="1" height="1.5" fill="url(#mp)"/>
<rect x="30" y="292.5" width="1" height="1.5" fill="url(#mp)"/>
<rect x="20" y="294.5" width="1" height="1.5" fill="url(#mp)"/>
<rect x="21" y="294.5" width="9" height="1.5" fill="url(#mk)"/>
<rect x="30" y="294.5" width="1" height="1.5" fill="url(#mp)"/>
<rect x="31" y="294.5" width="1" height="1.5" fill="url(#mp)"/>
<rect x="33" y="294.5" width="1" height="1.5" fill="url(#mp)"/>
<rect x="34" y="294.5" width="42" height="1.5" fill="url(#ms)"/>
<rect x="76" y="294.5" width="1" height="1.5" fill="url(#mp)"/>
<rect x="77" y="294.5" width="1" height="1.5" fill="url(#mp)"/>
<rect x="20" y="296.5" width="1" height="1.5" fill="url(#mp)"/>
<rect x="21" y="296.5" width="10" height="1.5" fill="url(#mk)"/>
<rect x="31" y="296.5" width="1" height="1.5" fill="url(#mp)"/>
<rect x="32" y="296.5" width="1" height="1.5" fill="url(#mp)"/>
<rect x="34" y="296.5" width="2" height="1.5" fill="url(#mp)"/>
<rect x="16" y="298.5" width="2" height="1.5" fill="url(#mp)"/>
<rect x="16" y="300.5" width="1" height="1.5" fill="url(#mp)"/>
<rect x="17" y="300.5" width="4" height="1.5" fill="url(#mk)"/>
<rect x="21" y="300.5" width="1" height="1.5" fill="url(#mp)"/>
<rect x="22" y="300.5" width="1" height="1.5" fill="url(#mp)"/>
<rect x="24" y="300.5" width="1" height="1.5" fill="url(#mp)"/>
<rect x="25" y="300.5" width="7" height="1.5" fill="url(#ms)"/>
<rect x="33" y="300.5" width="7" height="1.5" fill="url(#ms)"/>
<rect x="40" y="300.5" width="1" height="1.5" fill="url(#mp)"/>
<rect x="41" y="300.5" width="1" height="1.5" fill="url(#mp)"/>
<rect x="16" y="302.5" width="1" height="1.5" fill="url(#mp)"/>
<rect x="17" y="302.5" width="10" height="1.5" fill="url(#mk)"/>
<rect x="27" y="302.5" width="1" height="1.5" fill="url(#mp)"/>
<rect x="28" y="302.5" width="1" height="1.5" fill="url(#mp)"/>
<rect x="30" y="302.5" width="1" height="1.5" fill="url(#mp)"/>
<rect x="20" y="304.5" width="1" height="1.5" fill="url(#mp)"/>
<rect x="21" y="304.5" width="9" height="1.5" fill="url(#mk)"/>
<rect x="30" y="304.5" width="1" height="1.5" fill="url(#mp)"/>
<rect x="31" y="304.5" width="1" height="1.5" fill="url(#mp)"/>
<rect x="33" y="304.5" width="1" height="1.5" fill="url(#mp)"/>
<rect x="34" y="304.5" width="1" height="1.5" fill="url(#mp)"/>
<rect x="35" y="304.5" width="1" height="1.5" fill="url(#mp)"/>
<rect x="20" y="306.5" width="1" height="1.5" fill="url(#mp)"/>
<rect x="21" y="306.5" width="10" height="1.5" fill="url(#mk)"/>
<rect x="31" y="306.5" width="1" height="1.5" fill="url(#mp)"/>
<rect x="32" y="306.5" width="1" height="1.5" fill="url(#mp)"/>
<rect x="34" y="306.5" width="2" height="1.5" fill="url(#mp)"/>
<rect x="16" y="308.5" width="2" height="1.5" fill="url(#mp)"/>
<rect x="16" y="310.5" width="1" height="1.5" fill="url(#mp)"/>
<rect x="17" y="310.5" width="13" height="1.5" fill="url(#mk)"/>
<rect x="30" y="310.5" width="1" height="1.5" fill="url(#mp)"/>
<rect x="31" y="310.5" width="1" height="1.5" fill="url(#mp)"/>
<rect x="33" y="310.5" width="1" height="1.5" fill="url(#mp)"/>
<rect x="34" y="310.5" width="1" height="1.5" fill="url(#mp)"/>
<rect x="35" y="310.5" width="1" height="1.5" fill="url(#mp)"/>
<rect x="16" y="312.5" width="1" height="1.5" fill="url(#mp)"/>
<rect x="17" y="312.5" width="18" height="1.5" fill="url(#mk)"/>
<rect x="35" y="312.5" width="1" height="1.5" fill="url(#mp)"/>
<rect x="36" y="312.5" width="1" height="1.5" fill="url(#mp)"/>
<rect x="38" y="312.5" width="1" height="1.5" fill="url(#mp)"/>
<rect x="39" y="312.5" width="4" height="1.5" fill="url(#ms)"/>
<rect x="43" y="312.5" width="1" height="1.5" fill="url(#mp)"/>
<rect x="44" y="312.5" width="1" height="1.5" fill="url(#mp)"/>
<rect x="16" y="314.5" width="1" height="1.5" fill="url(#mp)"/>
<rect x="17" y="314.5" width="11" height="1.5" fill="url(#mk)"/>
<rect x="28" y="314.5" width="1" height="1.5" fill="url(#mp)"/>
<rect x="29" y="314.5" width="1" height="1.5" fill="url(#mp)"/>
<rect x="31" y="314.5" width="1" height="1.5" fill="url(#mp)"/>
<rect x="20" y="316.5" width="1" height="1.5" fill="url(#mp)"/>
<rect x="21" y="316.5" width="9" height="1.5" fill="url(#mk)"/>
<rect x="30" y="316.5" width="1" height="1.5" fill="url(#mp)"/>
<rect x="31" y="316.5" width="1" height="1.5" fill="url(#mp)"/>
<rect x="33" y="316.5" width="1" height="1.5" fill="url(#mp)"/>
<rect x="34" y="316.5" width="42" height="1.5" fill="url(#ms)"/>
<rect x="76" y="316.5" width="1" height="1.5" fill="url(#mp)"/>
<rect x="77" y="316.5" width="1" height="1.5" fill="url(#mp)"/>
<rect x="20" y="318.5" width="1" height="1.5" fill="url(#mp)"/>
<rect x="21" y="318.5" width="10" height="1.5" fill="url(#mk)"/>
<rect x="31" y="318.5" width="1" height="1.5" fill="url(#mp)"/>
<rect x="32" y="318.5" width="1" height="1.5" fill="url(#mp)"/>
<rect x="34" y="318.5" width="2" height="1.5" fill="url(#mp)"/>
<rect x="16" y="320.5" width="2" height="1.5" fill="url(#mp)"/>
<rect x="16" y="322.5" width="1" height="1.5" fill="url(#mp)"/>
<rect x="17" y="322.5" width="9" height="1.5" fill="url(#mk)"/>
<rect x="26" y="322.5" width="1" height="1.5" fill="url(#mp)"/>
<rect x="27" y="322.5" width="1" height="1.5" fill="url(#mp)"/>
<rect x="29" y="322.5" width="1" height="1.5" fill="url(#mp)"/>
<rect x="30" y="322.5" width="7" height="1.5" fill="url(#ms)"/>
<rect x="37" y="322.5" width="1" height="1.5" fill="url(#mp)"/>
<rect x="12" y="324.5" width="1" height="1.5" fill="url(#mp)"/>
<rect x="8" y="326.5" width="1" height="1.5" fill="url(#mp)"/>
<rect x="8" y="42.2" width="7" height="2.2" fill="#e5201a"/>
<rect x="16" y="42.2" width="4" height="2.2" fill="#e5201a"/>
<rect x="36" y="46.2" width="12" height="2.2" fill="#c28b12"/>
<rect x="8" y="48.2" width="7" height="2.2" fill="#e5201a"/>
<rect x="36" y="50.2" width="11" height="2.2" fill="#e5201a"/>
<rect x="36" y="52.2" width="12" height="2.2" fill="#c28b12"/>
<rect x="8" y="112.2" width="7" height="2.2" fill="#e5201a"/>
<rect x="16" y="112.2" width="5" height="2.2" fill="#e5201a"/>
<rect x="21" y="112.2" width="10" height="2.2" fill="#a04040"/>
<rect x="8" y="136.2" width="7" height="2.2" fill="#c28b12"/>
<rect x="16" y="136.2" width="4" height="2.2" fill="#e5201a"/>
<rect x="8" y="140.2" width="7" height="2.2" fill="#c28b12"/>
<rect x="32" y="142.2" width="12" height="2.2" fill="#e5201a"/>
<rect x="8" y="144.2" width="7" height="2.2" fill="#c28b12"/>
<rect x="16" y="144.2" width="5" height="2.2" fill="#e5201a"/>
<rect x="21" y="144.2" width="10" height="2.2" fill="#a04040"/>
<rect x="8" y="156.2" width="7" height="2.2" fill="#e5201a"/>
<rect x="16" y="156.2" width="4" height="2.2" fill="#e5201a"/>
<rect x="8" y="160.2" width="7" height="2.2" fill="#e5201a"/>
<rect x="32" y="162.2" width="18" height="2.2" fill="#e5201a"/>
<rect x="8" y="164.2" width="7" height="2.2" fill="#e5201a"/>
<rect x="16" y="164.2" width="5" height="2.2" fill="#e5201a"/>
<rect x="21" y="164.2" width="10" height="2.2" fill="#a04040"/>
<rect x="8" y="196.2" width="7" height="2.2" fill="#c28b12"/>
<rect x="16" y="196.2" width="4" height="2.2" fill="#e5201a"/>
<rect x="8" y="200.2" width="7" height="2.2" fill="#c28b12"/>
<rect x="32" y="202.2" width="12" height="2.2" fill="#e5201a"/>
<rect x="8" y="204.2" width="7" height="2.2" fill="#c28b12"/>
<rect x="16" y="204.2" width="5" height="2.2" fill="#e5201a"/>
<rect x="21" y="204.2" width="10" height="2.2" fill="#a04040"/>
<rect x="8" y="216.2" width="7" height="2.2" fill="#e5201a"/>
<rect x="16" y="216.2" width="4" height="2.2" fill="#e5201a"/>
<rect x="8" y="220.2" width="7" height="2.2" fill="#e5201a"/>
<rect x="32" y="222.2" width="18" height="2.2" fill="#e5201a"/>
<rect x="8" y="224.2" width="7" height="2.2" fill="#e5201a"/>
<rect x="16" y="224.2" width="5" height="2.2" fill="#e5201a"/>
<rect x="21" y="224.2" width="10" height="2.2" fill="#a04040"/>
</svg>
<div class="a" style="left:1112px;top:91px;width:1px;height:1301px;background:#dadada"></div>
<div class="a" style="left:1118px;top:91px;width:6px;height:6px;background:#a0a0a0"></div>
<div class="a" style="left:1124.0px;top:218.0px;width:5.0px;height:6.0px;background:#fe5555"></div>
<div class="a" style="left:1113.0px;top:224.0px;width:16.0px;height:11.0px;background:#9bdfd2"></div>
<div class="a" style="left:1124.0px;top:229.0px;width:5.0px;height:6.0px;background:#80aa5a"></div>
<div class="a" style="left:1124.0px;top:235.0px;width:5.0px;height:6.0px;background:#fe5555"></div>
<div class="a" style="left:1113.0px;top:241.0px;width:16.0px;height:179.0px;background:#9ccdf9"></div>
<div class="a" style="left:1124.0px;top:241.0px;width:5.0px;height:6.0px;background:#9d80b0"></div>
<div class="a" style="left:1124.0px;top:247.0px;width:5.0px;height:6.0px;background:#7f9a80"></div>
<div class="a" style="left:1124.0px;top:420.0px;width:5.0px;height:6.0px;background:#fe5555"></div>
<div class="a" style="left:1124.0px;top:496.0px;width:5.0px;height:6.0px;background:#ee3311"></div>
<div class="a" style="left:1113.0px;top:502.0px;width:16.0px;height:6.0px;background:#9bdfd2"></div>
<div class="a" style="left:1124.0px;top:508.0px;width:5.0px;height:5.0px;background:#ee3311"></div>
<div class="a" style="left:1113.0px;top:513.0px;width:11.0px;height:6.0px;background:#9ccdf9"></div>
<div class="a" style="left:1124.0px;top:513.0px;width:5.0px;height:6.0px;background:#9d80b0"></div>
<div class="a" style="left:1124.0px;top:519.0px;width:5.0px;height:6.0px;background:#ee3311"></div>
<div class="a" style="left:1124.0px;top:562.0px;width:5.0px;height:6.0px;background:#fe5555"></div>
<div class="a" style="left:1113.0px;top:568.0px;width:16.0px;height:6.0px;background:#9bdfd2"></div>
<div class="a" style="left:1124.0px;top:574.0px;width:5.0px;height:5.0px;background:#fe5555"></div>
<div class="a" style="left:1113.0px;top:579.0px;width:11.0px;height:6.0px;background:#9ccdf9"></div>
<div class="a" style="left:1124.0px;top:579.0px;width:5.0px;height:6.0px;background:#9d80b0"></div>
<div class="a" style="left:1124.0px;top:585.0px;width:5.0px;height:6.0px;background:#fe5555"></div>
<div class="a" style="left:1124.0px;top:682.0px;width:5.0px;height:6.0px;background:#ee3311"></div>
<div class="a" style="left:1113.0px;top:688.0px;width:16.0px;height:6.0px;background:#9bdfd2"></div>
<div class="a" style="left:1124.0px;top:694.0px;width:5.0px;height:5.0px;background:#ee3311"></div>
<div class="a" style="left:1113.0px;top:699.0px;width:11.0px;height:6.0px;background:#9ccdf9"></div>
<div class="a" style="left:1124.0px;top:699.0px;width:5.0px;height:6.0px;background:#9d80b0"></div>
<div class="a" style="left:1124.0px;top:705.0px;width:5.0px;height:6.0px;background:#ee3311"></div>
<div class="a" style="left:1124.0px;top:744.0px;width:5.0px;height:6.0px;background:#fe5555"></div>
<div class="a" style="left:1113.0px;top:750.0px;width:16.0px;height:6.0px;background:#9bdfd2"></div>
<div class="a" style="left:1124.0px;top:756.0px;width:5.0px;height:5.0px;background:#fe5555"></div>
<div class="a" style="left:1113.0px;top:761.0px;width:11.0px;height:6.0px;background:#9ccdf9"></div>
<div class="a" style="left:1124.0px;top:761.0px;width:5.0px;height:6.0px;background:#9d80b0"></div>
<div class="a" style="left:1124.0px;top:767.0px;width:5.0px;height:6.0px;background:#fe5555"></div>
<div class="a" style="left:1118.0px;top:1042.0px;width:6.0px;height:6.0px;background:#a0a0a0"></div>
</div></div>
<div class="a" style="left:1129px;top:23px;width:1px;height:1369px;background:#e3e3e3"></div>
<div class="clip" style="left:1130px;top:91px;width:1076px;height:1300px"><div class="a" style="left:-1130px;top:-91px;width:2206px;height:1417px">
<div class="bg" style="left:1207.8px;top:199.00px;width:871.2px;background:rgba(64,200,174,0.5)"></div>
<div class="bg" style="left:1207.8px;top:220.60px;width:871.2px;background:rgba(64,200,174,0.2)"></div>
<div class="bg" style="left:1207.8px;top:242.20px;width:871.2px;background:rgba(64,200,174,0.2)"></div>
<div class="bg" style="left:1207.8px;top:263.80px;width:871.2px;background:rgba(64,200,174,0.2)"></div>
<div class="bg" style="left:1207.8px;top:285.40px;width:871.2px;background:rgba(64,200,174,0.2)"></div>
<div class="bg" style="left:1207.8px;top:307.00px;width:871.2px;background:rgba(64,200,174,0.2)"></div>
<div class="bg" style="left:1207.8px;top:328.60px;width:871.2px;background:rgba(64,200,174,0.2)"></div>
<div class="bg" style="left:1207.8px;top:350.20px;width:871.2px;background:rgba(64,200,174,0.2)"></div>
<div class="bg" style="left:1207.8px;top:371.80px;width:871.2px;background:#c6ebc9"></div>
<div class="bg" style="left:1207.8px;top:393.40px;width:871.2px;background:rgba(64,200,174,0.2)"></div>
<div class="bg" style="left:1207.8px;top:415.00px;width:871.2px;background:rgba(64,200,174,0.2)"></div>
<div class="bg" style="left:1207.8px;top:436.60px;width:871.2px;background:rgba(64,200,174,0.2)"></div>
<div class="bg" style="left:1207.8px;top:458.20px;width:871.2px;background:rgba(64,200,174,0.2)"></div>
<div class="bg" style="left:1207.8px;top:479.80px;width:871.2px;background:rgba(64,200,174,0.2)"></div>
<div class="bg" style="left:1207.8px;top:501.40px;width:871.2px;background:rgba(64,200,174,0.2)"></div>
<div class="bg" style="left:1207.8px;top:523.00px;width:871.2px;background:rgba(64,200,174,0.2)"></div>
<div class="bg" style="left:1207.8px;top:544.60px;width:871.2px;background:rgba(64,200,174,0.2)"></div>
<div class="bg" style="left:1207.8px;top:566.20px;width:871.2px;background:rgba(64,200,174,0.2)"></div>
<div class="bg" style="left:1207.8px;top:587.80px;width:871.2px;background:rgba(64,200,174,0.2)"></div>
<div class="bg" style="left:1207.8px;top:609.40px;width:871.2px;background:rgba(64,200,174,0.2)"></div>
<div class="bg" style="left:1207.8px;top:631.00px;width:871.2px;background:rgba(64,200,174,0.2)"></div>
<div class="bg" style="left:1207.8px;top:652.60px;width:871.2px;background:rgba(64,200,174,0.2)"></div>
<div class="bg" style="left:1207.8px;top:674.20px;width:871.2px;background:rgba(64,200,174,0.2)"></div>
<div class="bg" style="left:1207.8px;top:695.80px;width:871.2px;background:rgba(64,200,174,0.2)"></div>
<div class="bg" style="left:1207.8px;top:717.40px;width:871.2px;background:rgba(64,200,174,0.2)"></div>
<div class="bg" style="left:1207.8px;top:739.00px;width:871.2px;background:rgba(64,200,174,0.2)"></div>
<div class="bg" style="left:1207.8px;top:760.60px;width:871.2px;background:rgba(64,200,174,0.2)"></div>
<div class="bg" style="left:1207.8px;top:782.20px;width:871.2px;background:rgba(64,200,174,0.2)"></div>
<div class="bg" style="left:1207.8px;top:803.80px;width:871.2px;background:rgba(64,200,174,0.2)"></div>
<div class="bg" style="left:1207.8px;top:825.40px;width:871.2px;background:rgba(64,200,174,0.2)"></div>
<div class="bg" style="left:1207.8px;top:847.00px;width:871.2px;background:rgba(64,200,174,0.2)"></div>
<div class="bg" style="left:1207.8px;top:868.60px;width:871.2px;background:rgba(64,200,174,0.2)"></div>
<div class="bg" style="left:1207.8px;top:890.20px;width:871.2px;background:rgba(64,200,174,0.2)"></div>
<div class="bg" style="left:1207.8px;top:911.80px;width:871.2px;background:rgba(64,200,174,0.2)"></div>
<div class="bg" style="left:1207.8px;top:933.40px;width:871.2px;background:rgba(64,200,174,0.2)"></div>
<div class="bg" style="left:1207.8px;top:955.00px;width:871.2px;background:rgba(64,200,174,0.2)"></div>
<div class="bg" style="left:1207.8px;top:976.60px;width:871.2px;background:rgba(64,200,174,0.2)"></div>
<div class="bg" style="left:1207.8px;top:998.20px;width:871.2px;background:rgba(64,200,174,0.2)"></div>
<div class="bg" style="left:1207.8px;top:1019.80px;width:871.2px;background:rgba(64,200,174,0.2)"></div>
<div class="bg" style="left:1207.8px;top:1041.40px;width:871.2px;background:rgba(64,200,174,0.2)"></div>
<div class="bg" style="left:1207.8px;top:1063.00px;width:871.2px;background:rgba(64,200,174,0.2)"></div>
<div class="bg" style="left:1207.8px;top:1084.60px;width:871.2px;background:rgba(64,200,174,0.2)"></div>
<div class="bg" style="left:1207.8px;top:1106.20px;width:871.2px;background:rgba(64,200,174,0.2)"></div>
<div class="bg" style="left:1207.8px;top:1127.80px;width:871.2px;background:rgba(64,200,174,0.2)"></div>
<div class="bg" style="left:1207.8px;top:1149.40px;width:871.2px;background:rgba(64,200,174,0.2)"></div>
<div class="bg" style="left:1207.8px;top:1171.00px;width:871.2px;background:rgba(64,200,174,0.2)"></div>
<div class="bg" style="left:1207.8px;top:1192.60px;width:871.2px;background:rgba(64,200,174,0.2)"></div>
<div class="bg" style="left:1207.8px;top:1214.20px;width:871.2px;background:rgba(64,200,174,0.2)"></div>
<div class="bg" style="left:1207.8px;top:1235.80px;width:871.2px;background:rgba(64,200,174,0.2)"></div>
<div class="bg" style="left:1207.8px;top:1257.40px;width:871.2px;background:rgba(64,200,174,0.2)"></div>
<div class="bg" style="left:1207.8px;top:1279.00px;width:871.2px;background:rgba(64,200,174,0.2)"></div>
<div class="bg" style="left:1207.8px;top:1300.60px;width:871.2px;background:rgba(64,200,174,0.2)"></div>
<div class="bg" style="left:1207.8px;top:1322.20px;width:871.2px;background:rgba(64,200,174,0.2)"></div>
<div class="bg" style="left:1207.8px;top:1365.40px;width:871.2px;background:rgba(64,166,255,0.2)"></div>
<div class="bg" style="left:1207.8px;top:1387.00px;width:871.2px;background:rgba(64,166,255,0.2)"></div>
<div class="a" style="left:1502.5px;top:285.7px;width:8.6px;height:20.6px;border:1px solid #b9b9b9;background:rgba(0,0,0,0.03)"></div>
<div class="a" style="left:1381.0px;top:393.7px;width:8.6px;height:20.6px;border:1px solid #b9b9b9;background:rgba(0,0,0,0.03)"></div>
<div class="a" style="left:1494.1px;top:371.8px;width:78.1px;height:21.6px;background:#d4e6dc"></div>
<div class="g" style="left:1208px;top:112.60px"></div>
<div class="g" style="left:1208px;top:134.20px"></div>
<div class="g" style="left:1243px;top:134.20px"></div>
<div class="g" style="left:1208px;top:155.80px"></div>
<div class="g" style="left:1243px;top:155.80px"></div>
<div class="g" style="left:1277px;top:155.80px"></div>
<div class="g" style="left:1208px;top:220.60px"></div>
<div class="g" style="left:1243px;top:220.60px"></div>
<div class="g" style="left:1277px;top:220.60px"></div>
<div class="g" style="left:1208px;top:242.20px"></div>
<div class="g" style="left:1243px;top:242.20px"></div>
<div class="g" style="left:1277px;top:242.20px"></div>
<div class="g" style="left:1312px;top:242.20px"></div>
<div class="g" style="left:1208px;top:263.80px"></div>
<div class="g" style="left:1243px;top:263.80px"></div>
<div class="g" style="left:1277px;top:263.80px"></div>
<div class="g" style="left:1312px;top:263.80px"></div>
<div class="g" style="left:1347px;top:263.80px"></div>
<div class="g" style="left:1208px;top:285.40px"></div>
<div class="g" style="left:1243px;top:285.40px"></div>
<div class="g" style="left:1277px;top:285.40px"></div>
<div class="g" style="left:1312px;top:285.40px"></div>
<div class="g" style="left:1347px;top:285.40px"></div>
<div class="g" style="left:1208px;top:307.00px"></div>
<div class="g" style="left:1243px;top:307.00px"></div>
<div class="g" style="left:1277px;top:307.00px"></div>
<div class="g" style="left:1312px;top:307.00px"></div>
<div class="g" style="left:1347px;top:307.00px"></div>
<div class="g ga" style="left:1381px;top:307.00px"></div>
<div class="g" style="left:1208px;top:328.60px"></div>
<div class="g" style="left:1243px;top:328.60px"></div>
<div class="g" style="left:1277px;top:328.60px"></div>
<div class="g" style="left:1312px;top:328.60px"></div>
<div class="g" style="left:1347px;top:328.60px"></div>
<div class="g ga" style="left:1381px;top:328.60px"></div>
<div class="g" style="left:1208px;top:350.20px"></div>
<div class="g" style="left:1243px;top:350.20px"></div>
<div class="g" style="left:1277px;top:350.20px"></div>
<div class="g" style="left:1312px;top:350.20px"></div>
<div class="g" style="left:1347px;top:350.20px"></div>
<div class="g ga" style="left:1381px;top:350.20px"></div>
<div class="g" style="left:1208px;top:371.80px"></div>
<div class="g" style="left:1243px;top:371.80px"></div>
<div class="g" style="left:1277px;top:371.80px"></div>
<div class="g" style="left:1312px;top:371.80px"></div>
<div class="g" style="left:1347px;top:371.80px"></div>
<div class="g ga" style="left:1381px;top:371.80px"></div>
<div class="g" style="left:1208px;top:393.40px"></div>
<div class="g" style="left:1243px;top:393.40px"></div>
<div class="g" style="left:1277px;top:393.40px"></div>
<div class="g" style="left:1312px;top:393.40px"></div>
<div class="g" style="left:1347px;top:393.40px"></div>
<div class="g" style="left:1208px;top:415.00px"></div>
<div class="g" style="left:1243px;top:415.00px"></div>
<div class="g" style="left:1277px;top:415.00px"></div>
<div class="g" style="left:1312px;top:415.00px"></div>
<div class="g" style="left:1208px;top:436.60px"></div>
<div class="g" style="left:1243px;top:436.60px"></div>
<div class="g" style="left:1277px;top:436.60px"></div>
<div class="g" style="left:1312px;top:436.60px"></div>
<div class="g" style="left:1208px;top:458.20px"></div>
<div class="g" style="left:1243px;top:458.20px"></div>
<div class="g" style="left:1277px;top:458.20px"></div>
<div class="g" style="left:1312px;top:458.20px"></div>
<div class="g" style="left:1347px;top:458.20px"></div>
<div class="g" style="left:1208px;top:479.80px"></div>
<div class="g" style="left:1243px;top:479.80px"></div>
<div class="g" style="left:1277px;top:479.80px"></div>
<div class="g" style="left:1312px;top:479.80px"></div>
<div class="g" style="left:1347px;top:479.80px"></div>
<div class="g" style="left:1208px;top:501.40px"></div>
<div class="g" style="left:1243px;top:501.40px"></div>
<div class="g" style="left:1277px;top:501.40px"></div>
<div class="g" style="left:1312px;top:501.40px"></div>
<div class="g" style="left:1347px;top:501.40px"></div>
<div class="g" style="left:1381px;top:501.40px"></div>
<div class="g" style="left:1208px;top:523.00px"></div>
<div class="g" style="left:1243px;top:523.00px"></div>
<div class="g" style="left:1277px;top:523.00px"></div>
<div class="g" style="left:1312px;top:523.00px"></div>
<div class="g" style="left:1347px;top:523.00px"></div>
<div class="g" style="left:1381px;top:523.00px"></div>
<div class="g" style="left:1208px;top:544.60px"></div>
<div class="g" style="left:1243px;top:544.60px"></div>
<div class="g" style="left:1277px;top:544.60px"></div>
<div class="g" style="left:1312px;top:544.60px"></div>
<div class="g" style="left:1347px;top:544.60px"></div>
<div class="g" style="left:1381px;top:544.60px"></div>
<div class="g" style="left:1208px;top:566.20px"></div>
<div class="g" style="left:1243px;top:566.20px"></div>
<div class="g" style="left:1277px;top:566.20px"></div>
<div class="g" style="left:1312px;top:566.20px"></div>
<div class="g" style="left:1347px;top:566.20px"></div>
<div class="g" style="left:1381px;top:566.20px"></div>
<div class="g" style="left:1416px;top:566.20px"></div>
<div class="g" style="left:1208px;top:587.80px"></div>
<div class="g" style="left:1243px;top:587.80px"></div>
<div class="g" style="left:1277px;top:587.80px"></div>
<div class="g" style="left:1312px;top:587.80px"></div>
<div class="g" style="left:1347px;top:587.80px"></div>
<div class="g" style="left:1381px;top:587.80px"></div>
<div class="g" style="left:1416px;top:587.80px"></div>
<div class="g" style="left:1208px;top:609.40px"></div>
<div class="g" style="left:1243px;top:609.40px"></div>
<div class="g" style="left:1277px;top:609.40px"></div>
<div class="g" style="left:1312px;top:609.40px"></div>
<div class="g" style="left:1347px;top:609.40px"></div>
<div class="g" style="left:1381px;top:609.40px"></div>
<div class="g" style="left:1416px;top:609.40px"></div>
<div class="g" style="left:1451px;top:609.40px"></div>
<div class="g" style="left:1208px;top:631.00px"></div>
<div class="g" style="left:1243px;top:631.00px"></div>
<div class="g" style="left:1277px;top:631.00px"></div>
<div class="g" style="left:1312px;top:631.00px"></div>
<div class="g" style="left:1347px;top:631.00px"></div>
<div class="g" style="left:1381px;top:631.00px"></div>
<div class="g" style="left:1416px;top:631.00px"></div>
<div class="g" style="left:1451px;top:631.00px"></div>
<div class="g" style="left:1208px;top:652.60px"></div>
<div class="g" style="left:1243px;top:652.60px"></div>
<div class="g" style="left:1277px;top:652.60px"></div>
<div class="g" style="left:1312px;top:652.60px"></div>
<div class="g" style="left:1347px;top:652.60px"></div>
<div class="g" style="left:1381px;top:652.60px"></div>
<div class="g" style="left:1416px;top:652.60px"></div>
<div class="g" style="left:1208px;top:674.20px"></div>
<div class="g" style="left:1243px;top:674.20px"></div>
<div class="g" style="left:1277px;top:674.20px"></div>
<div class="g" style="left:1312px;top:674.20px"></div>
<div class="g" style="left:1347px;top:674.20px"></div>
<div class="g" style="left:1381px;top:674.20px"></div>
<div class="g" style="left:1208px;top:695.80px"></div>
<div class="g" style="left:1243px;top:695.80px"></div>
<div class="g" style="left:1277px;top:695.80px"></div>
<div class="g" style="left:1312px;top:695.80px"></div>
<div class="g" style="left:1347px;top:695.80px"></div>
<div class="g" style="left:1381px;top:695.80px"></div>
<div class="g" style="left:1208px;top:717.40px"></div>
<div class="g" style="left:1243px;top:717.40px"></div>
<div class="g" style="left:1277px;top:717.40px"></div>
<div class="g" style="left:1312px;top:717.40px"></div>
<div class="g" style="left:1347px;top:717.40px"></div>
<div class="g" style="left:1381px;top:717.40px"></div>
<div class="g" style="left:1208px;top:739.00px"></div>
<div class="g" style="left:1243px;top:739.00px"></div>
<div class="g" style="left:1277px;top:739.00px"></div>
<div class="g" style="left:1312px;top:739.00px"></div>
<div class="g" style="left:1347px;top:739.00px"></div>
<div class="g" style="left:1381px;top:739.00px"></div>
<div class="g" style="left:1208px;top:760.60px"></div>
<div class="g" style="left:1243px;top:760.60px"></div>
<div class="g" style="left:1277px;top:760.60px"></div>
<div class="g" style="left:1312px;top:760.60px"></div>
<div class="g" style="left:1347px;top:760.60px"></div>
<div class="g" style="left:1381px;top:760.60px"></div>
<div class="g" style="left:1208px;top:782.20px"></div>
<div class="g" style="left:1243px;top:782.20px"></div>
<div class="g" style="left:1277px;top:782.20px"></div>
<div class="g" style="left:1312px;top:782.20px"></div>
<div class="g" style="left:1347px;top:782.20px"></div>
<div class="g" style="left:1381px;top:782.20px"></div>
<div class="g" style="left:1208px;top:803.80px"></div>
<div class="g" style="left:1243px;top:803.80px"></div>
<div class="g" style="left:1277px;top:803.80px"></div>
<div class="g" style="left:1312px;top:803.80px"></div>
<div class="g" style="left:1347px;top:803.80px"></div>
<div class="g" style="left:1381px;top:803.80px"></div>
<div class="g" style="left:1208px;top:825.40px"></div>
<div class="g" style="left:1243px;top:825.40px"></div>
<div class="g" style="left:1277px;top:825.40px"></div>
<div class="g" style="left:1312px;top:825.40px"></div>
<div class="g" style="left:1347px;top:825.40px"></div>
<div class="g" style="left:1381px;top:825.40px"></div>
<div class="g" style="left:1208px;top:847.00px"></div>
<div class="g" style="left:1243px;top:847.00px"></div>
<div class="g" style="left:1277px;top:847.00px"></div>
<div class="g" style="left:1312px;top:847.00px"></div>
<div class="g" style="left:1347px;top:847.00px"></div>
<div class="g" style="left:1381px;top:847.00px"></div>
<div class="g" style="left:1208px;top:868.60px"></div>
<div class="g" style="left:1243px;top:868.60px"></div>
<div class="g" style="left:1277px;top:868.60px"></div>
<div class="g" style="left:1312px;top:868.60px"></div>
<div class="g" style="left:1347px;top:868.60px"></div>
<div class="g" style="left:1381px;top:868.60px"></div>
<div class="g" style="left:1208px;top:890.20px"></div>
<div class="g" style="left:1243px;top:890.20px"></div>
<div class="g" style="left:1277px;top:890.20px"></div>
<div class="g" style="left:1312px;top:890.20px"></div>
<div class="g" style="left:1347px;top:890.20px"></div>
<div class="g" style="left:1381px;top:890.20px"></div>
<div class="g" style="left:1208px;top:911.80px"></div>
<div class="g" style="left:1243px;top:911.80px"></div>
<div class="g" style="left:1277px;top:911.80px"></div>
<div class="g" style="left:1312px;top:911.80px"></div>
<div class="g" style="left:1347px;top:911.80px"></div>
<div class="g" style="left:1381px;top:911.80px"></div>
<div class="g" style="left:1208px;top:933.40px"></div>
<div class="g" style="left:1243px;top:933.40px"></div>
<div class="g" style="left:1277px;top:933.40px"></div>
<div class="g" style="left:1312px;top:933.40px"></div>
<div class="g" style="left:1347px;top:933.40px"></div>
<div class="g" style="left:1381px;top:933.40px"></div>
<div class="g" style="left:1208px;top:955.00px"></div>
<div class="g" style="left:1243px;top:955.00px"></div>
<div class="g" style="left:1277px;top:955.00px"></div>
<div class="g" style="left:1312px;top:955.00px"></div>
<div class="g" style="left:1347px;top:955.00px"></div>
<div class="g" style="left:1381px;top:955.00px"></div>
<div class="g" style="left:1208px;top:976.60px"></div>
<div class="g" style="left:1243px;top:976.60px"></div>
<div class="g" style="left:1277px;top:976.60px"></div>
<div class="g" style="left:1312px;top:976.60px"></div>
<div class="g" style="left:1347px;top:976.60px"></div>
<div class="g" style="left:1381px;top:976.60px"></div>
<div class="g" style="left:1208px;top:998.20px"></div>
<div class="g" style="left:1243px;top:998.20px"></div>
<div class="g" style="left:1277px;top:998.20px"></div>
<div class="g" style="left:1312px;top:998.20px"></div>
<div class="g" style="left:1347px;top:998.20px"></div>
<div class="g" style="left:1381px;top:998.20px"></div>
<div class="g" style="left:1208px;top:1019.80px"></div>
<div class="g" style="left:1243px;top:1019.80px"></div>
<div class="g" style="left:1277px;top:1019.80px"></div>
<div class="g" style="left:1312px;top:1019.80px"></div>
<div class="g" style="left:1347px;top:1019.80px"></div>
<div class="g" style="left:1381px;top:1019.80px"></div>
<div class="g" style="left:1208px;top:1041.40px"></div>
<div class="g" style="left:1243px;top:1041.40px"></div>
<div class="g" style="left:1277px;top:1041.40px"></div>
<div class="g" style="left:1312px;top:1041.40px"></div>
<div class="g" style="left:1347px;top:1041.40px"></div>
<div class="g" style="left:1381px;top:1041.40px"></div>
<div class="g" style="left:1208px;top:1063.00px"></div>
<div class="g" style="left:1243px;top:1063.00px"></div>
<div class="g" style="left:1277px;top:1063.00px"></div>
<div class="g" style="left:1312px;top:1063.00px"></div>
<div class="g" style="left:1347px;top:1063.00px"></div>
<div class="g" style="left:1381px;top:1063.00px"></div>
<div class="g" style="left:1208px;top:1084.60px"></div>
<div class="g" style="left:1243px;top:1084.60px"></div>
<div class="g" style="left:1277px;top:1084.60px"></div>
<div class="g" style="left:1312px;top:1084.60px"></div>
<div class="g" style="left:1347px;top:1084.60px"></div>
<div class="g" style="left:1381px;top:1084.60px"></div>
<div class="g" style="left:1208px;top:1106.20px"></div>
<div class="g" style="left:1243px;top:1106.20px"></div>
<div class="g" style="left:1277px;top:1106.20px"></div>
<div class="g" style="left:1312px;top:1106.20px"></div>
<div class="g" style="left:1347px;top:1106.20px"></div>
<div class="g" style="left:1381px;top:1106.20px"></div>
<div class="g" style="left:1208px;top:1127.80px"></div>
<div class="g" style="left:1243px;top:1127.80px"></div>
<div class="g" style="left:1277px;top:1127.80px"></div>
<div class="g" style="left:1312px;top:1127.80px"></div>
<div class="g" style="left:1347px;top:1127.80px"></div>
<div class="g" style="left:1381px;top:1127.80px"></div>
<div class="g" style="left:1208px;top:1149.40px"></div>
<div class="g" style="left:1243px;top:1149.40px"></div>
<div class="g" style="left:1277px;top:1149.40px"></div>
<div class="g" style="left:1312px;top:1149.40px"></div>
<div class="g" style="left:1347px;top:1149.40px"></div>
<div class="g" style="left:1381px;top:1149.40px"></div>
<div class="g" style="left:1208px;top:1171.00px"></div>
<div class="g" style="left:1243px;top:1171.00px"></div>
<div class="g" style="left:1277px;top:1171.00px"></div>
<div class="g" style="left:1312px;top:1171.00px"></div>
<div class="g" style="left:1347px;top:1171.00px"></div>
<div class="g" style="left:1381px;top:1171.00px"></div>
<div class="g" style="left:1208px;top:1192.60px"></div>
<div class="g" style="left:1243px;top:1192.60px"></div>
<div class="g" style="left:1277px;top:1192.60px"></div>
<div class="g" style="left:1312px;top:1192.60px"></div>
<div class="g" style="left:1347px;top:1192.60px"></div>
<div class="g" style="left:1381px;top:1192.60px"></div>
<div class="g" style="left:1208px;top:1214.20px"></div>
<div class="g" style="left:1243px;top:1214.20px"></div>
<div class="g" style="left:1277px;top:1214.20px"></div>
<div class="g" style="left:1312px;top:1214.20px"></div>
<div class="g" style="left:1347px;top:1214.20px"></div>
<div class="g" style="left:1381px;top:1214.20px"></div>
<div class="g" style="left:1208px;top:1235.80px"></div>
<div class="g" style="left:1243px;top:1235.80px"></div>
<div class="g" style="left:1277px;top:1235.80px"></div>
<div class="g" style="left:1312px;top:1235.80px"></div>
<div class="g" style="left:1347px;top:1235.80px"></div>
<div class="g" style="left:1381px;top:1235.80px"></div>
<div class="g" style="left:1208px;top:1257.40px"></div>
<div class="g" style="left:1243px;top:1257.40px"></div>
<div class="g" style="left:1277px;top:1257.40px"></div>
<div class="g" style="left:1312px;top:1257.40px"></div>
<div class="g" style="left:1347px;top:1257.40px"></div>
<div class="g" style="left:1381px;top:1257.40px"></div>
<div class="g" style="left:1208px;top:1279.00px"></div>
<div class="g" style="left:1243px;top:1279.00px"></div>
<div class="g" style="left:1277px;top:1279.00px"></div>
<div class="g" style="left:1312px;top:1279.00px"></div>
<div class="g" style="left:1347px;top:1279.00px"></div>
<div class="g" style="left:1208px;top:1300.60px"></div>
<div class="g" style="left:1243px;top:1300.60px"></div>
<div class="g" style="left:1277px;top:1300.60px"></div>
<div class="g" style="left:1312px;top:1300.60px"></div>
<div class="g" style="left:1208px;top:1322.20px"></div>
<div class="g" style="left:1243px;top:1322.20px"></div>
<div class="g" style="left:1277px;top:1322.20px"></div>
<div class="g" style="left:1208px;top:1365.40px"></div>
<div class="g" style="left:1243px;top:1365.40px"></div>
<div class="g" style="left:1277px;top:1365.40px"></div>
<div class="g" style="left:1208px;top:1387.00px"></div>
<div class="g" style="left:1243px;top:1387.00px"></div>
<div class="g" style="left:1277px;top:1387.00px"></div>
<div class="g" style="left:1312px;top:1387.00px"></div>
<div class="ln" style="left:1117.0px;top:91.00px">1</div>
<div class="ln" style="left:1117.0px;top:112.60px">2</div>
<div class="ln" style="left:1117.0px;top:134.20px">3</div>
<div class="ln" style="left:1117.0px;top:155.80px">4</div>
<div class="ln" style="left:1117.0px;top:199.00px">5</div>
<div class="ln" style="left:1117.0px;top:220.60px">6</div>
<div class="ln" style="left:1117.0px;top:242.20px">7</div>
<div class="ln" style="left:1117.0px;top:263.80px">8</div>
<div class="ln" style="left:1117.0px;top:285.40px">9</div>
<div class="ln" style="left:1117.0px;top:307.00px">10</div>
<div class="ln" style="left:1117.0px;top:328.60px">11</div>
<div class="ln" style="left:1117.0px;top:350.20px">12</div>
<div class="ln act" style="left:1117.0px;top:371.80px">13</div>
<div class="ln" style="left:1117.0px;top:393.40px">14</div>
<div class="ln" style="left:1117.0px;top:415.00px">15</div>
<div class="ln" style="left:1117.0px;top:436.60px">16</div>
<div class="ln" style="left:1117.0px;top:458.20px">17</div>
<div class="ln" style="left:1117.0px;top:479.80px">18</div>
<div class="ln" style="left:1117.0px;top:501.40px">19</div>
<div class="ln" style="left:1117.0px;top:523.00px">20</div>
<div class="ln" style="left:1117.0px;top:544.60px">21</div>
<div class="ln" style="left:1117.0px;top:566.20px">22</div>
<div class="ln" style="left:1117.0px;top:587.80px">23</div>
<div class="ln" style="left:1117.0px;top:609.40px">24</div>
<div class="ln" style="left:1117.0px;top:631.00px">25</div>
<div class="ln" style="left:1117.0px;top:652.60px">26</div>
<div class="ln" style="left:1117.0px;top:674.20px">27</div>
<div class="ln" style="left:1117.0px;top:695.80px">28</div>
<div class="ln" style="left:1117.0px;top:717.40px">29</div>
<div class="ln" style="left:1117.0px;top:739.00px">30</div>
<div class="ln" style="left:1117.0px;top:760.60px">31</div>
<div class="ln" style="left:1117.0px;top:782.20px">32</div>
<div class="ln" style="left:1117.0px;top:803.80px">33</div>
<div class="ln" style="left:1117.0px;top:825.40px">34</div>
<div class="ln" style="left:1117.0px;top:847.00px">35</div>
<div class="ln" style="left:1117.0px;top:868.60px">36</div>
<div class="ln" style="left:1117.0px;top:890.20px">37</div>
<div class="ln" style="left:1117.0px;top:911.80px">38</div>
<div class="ln" style="left:1117.0px;top:933.40px">39</div>
<div class="ln" style="left:1117.0px;top:955.00px">40</div>
<div class="ln" style="left:1117.0px;top:976.60px">41</div>
<div class="ln" style="left:1117.0px;top:998.20px">42</div>
<div class="ln" style="left:1117.0px;top:1019.80px">43</div>
<div class="ln" style="left:1117.0px;top:1041.40px">44</div>
<div class="ln" style="left:1117.0px;top:1063.00px">45</div>
<div class="ln" style="left:1117.0px;top:1084.60px">46</div>
<div class="ln" style="left:1117.0px;top:1106.20px">47</div>
<div class="ln" style="left:1117.0px;top:1127.80px">48</div>
<div class="ln" style="left:1117.0px;top:1149.40px">49</div>
<div class="ln" style="left:1117.0px;top:1171.00px">50</div>
<div class="ln" style="left:1117.0px;top:1192.60px">51</div>
<div class="ln" style="left:1117.0px;top:1214.20px">52</div>
<div class="ln" style="left:1117.0px;top:1235.80px">53</div>
<div class="ln" style="left:1117.0px;top:1257.40px">54</div>
<div class="ln" style="left:1117.0px;top:1279.00px">55</div>
<div class="ln" style="left:1117.0px;top:1300.60px">56</div>
<div class="ln" style="left:1117.0px;top:1322.20px">57</div>
<div class="ln" style="left:1117.0px;top:1343.80px">58</div>
<div class="ln" style="left:1117.0px;top:1365.40px">59</div>
<div class="ln" style="left:1117.0px;top:1387.00px">60</div>
<div class="a" style="left:1207.8px;top:0;width:871.2px;height:1392px;overflow:hidden"><div class="cl" style="top:91.00px"><span class="p">{</span></div>
<div class="cl" style="top:112.60px">    <span class="p">"</span><span class="k">categories</span><span class="p">"</span><span class="p">: [</span></div>
<div class="cl" style="top:134.20px">        <span class="p">{</span></div>
<div class="cl" style="top:155.80px">            <span class="p">"</span><span class="k">className</span><span class="p">"</span><span class="p">: </span><span class="p">"</span><span class="s">org.joget.apps.userview.model.UserviewCategory</span><span class="p">"</span><span class="p">,</span></div>
<div class="cl" style="top:199.00px"><span class="mk">&lt;&lt;&lt;&lt;&lt;&lt;&lt; HEAD</span><span class="mc"> (Current Change)</span></div>
<div class="cl" style="top:220.60px">            <span class="p">"</span><span class="k">menus</span><span class="p">"</span><span class="p">: [</span></div>
<div class="cl" style="top:242.20px">                <span class="p">{</span></div>
<div class="cl" style="top:263.80px">                    <span class="p">"</span><span class="k">className</span><span class="p">"</span><span class="p">: </span><span class="p">"</span><span class="s">org.joget.apps.userview.lib.HtmlPage</span><span class="p">"</span><span class="p">,</span></div>
<div class="cl" style="top:285.40px">                    <span class="p">"</span><span class="k">properties</span><span class="p">"</span><span class="p">: {</span></div>
<div class="cl" style="top:307.00px">                        <span class="p">"</span><span class="k">content</span><span class="p">"</span><span class="p">: </span><span class="p">"</span><span class="s">&lt;div class=\"ui-welcome\"&gt;&lt;h1&gt;Apps and Workflow Made Simple&lt;\/h1&gt;&lt;p&gt;Joget&lt;/p&gt;&lt;/div&gt;</span><span class="p">"</span><span class="p">,</span></div>
<div class="cl" style="top:328.60px">                        <span class="p">"</span><span class="k">customId</span><span class="p">"</span><span class="p">: </span><span class="p">"</span><span class="s">welcome</span><span class="p">"</span><span class="p">,</span></div>
<div class="cl" style="top:350.20px">                        <span class="p">"</span><span class="k">id</span><span class="p">"</span><span class="p">: </span><span class="p">"</span><span class="s">3B6F25A638EF40FFAD3C5DAAC41BA98F</span><span class="p">"</span><span class="p">,</span></div>
<div class="cl" style="top:371.80px">                        <span class="p">"</span><span class="k">label</span><span class="p">"</span><span class="p">: </span><span class="p">"</span><span class="s">Welcome</span><span class="p">"</span></div>
<div class="cl" style="top:393.40px">                    <span class="p">}</span></div>
<div class="cl" style="top:415.00px">                <span class="p">},</span></div>
<div class="cl" style="top:436.60px">                <span class="p">{</span></div>
<div class="cl" style="top:458.20px">                    <span class="p">"</span><span class="k">className</span><span class="p">"</span><span class="p">: </span><span class="p">"</span><span class="s">org.joget.plugin.enterprise.CalendarMenu</span><span class="p">"</span><span class="p">,</span></div>
<div class="cl" style="top:479.80px">                    <span class="p">"</span><span class="k">properties</span><span class="p">"</span><span class="p">: {</span></div>
<div class="cl" style="top:501.40px">                        <span class="p">"</span><span class="k">allDay</span><span class="p">"</span><span class="p">: </span><span class="p">"</span><span class="s"></span><span class="p">"</span><span class="p">,</span></div>
<div class="cl" style="top:523.00px">                        <span class="p">"</span><span class="k">autoHandleDateRange</span><span class="p">"</span><span class="p">: </span><span class="p">"</span><span class="s">true</span><span class="p">"</span><span class="p">,</span></div>
<div class="cl" style="top:544.60px">                        <span class="p">"</span><span class="k">binder</span><span class="p">"</span><span class="p">: {</span></div>
<div class="cl" style="top:566.20px">                            <span class="p">"</span><span class="k">className</span><span class="p">"</span><span class="p">: </span><span class="p">"</span><span class="s">org.joget.apps.datalist.lib.FormRowDataListBinder</span><span class="p">"</span><span class="p">,</span></div>
<div class="cl" style="top:587.80px">                            <span class="p">"</span><span class="k">properties</span><span class="p">"</span><span class="p">: {</span></div>
<div class="cl" style="top:609.40px">                                <span class="p">"</span><span class="k">extraCondition</span><span class="p">"</span><span class="p">: </span><span class="p">"</span><span class="s"></span><span class="p">"</span><span class="p">,</span></div>
<div class="cl" style="top:631.00px">                                <span class="p">"</span><span class="k">formDefId</span><span class="p">"</span><span class="p">: </span><span class="p">"</span><span class="s">request</span><span class="p">"</span></div>
<div class="cl" style="top:652.60px">                            <span class="p">}</span></div>
<div class="cl" style="top:674.20px">                        <span class="p">},</span></div>
<div class="cl" style="top:695.80px">                        <span class="p">"</span><span class="k">cssClass</span><span class="p">"</span><span class="p">: </span><span class="p">"</span><span class="s"></span><span class="p">"</span><span class="p">,</span></div>
<div class="cl" style="top:717.40px">                        <span class="p">"</span><span class="k">customFooter</span><span class="p">"</span><span class="p">: </span><span class="p">"</span><span class="s"></span><span class="p">"</span><span class="p">,</span></div>
<div class="cl" style="top:739.00px">                        <span class="p">"</span><span class="k">customHeader</span><span class="p">"</span><span class="p">: </span><span class="p">"</span><span class="s"></span><span class="p">"</span><span class="p">,</span></div>
<div class="cl" style="top:760.60px">                        <span class="p">"</span><span class="k">customId</span><span class="p">"</span><span class="p">: </span><span class="p">"</span><span class="s"></span><span class="p">"</span><span class="p">,</span></div>
<div class="cl" style="top:782.20px">                        <span class="p">"</span><span class="k">dateFormat</span><span class="p">"</span><span class="p">: </span><span class="p">"</span><span class="s">yyyy-MM-dd</span><span class="p">"</span><span class="p">,</span></div>
<div class="cl" style="top:803.80px">                        <span class="p">"</span><span class="k">enableOffline</span><span class="p">"</span><span class="p">: </span><span class="p">"</span><span class="s"></span><span class="p">"</span><span class="p">,</span></div>
<div class="cl" style="top:825.40px">                        <span class="p">"</span><span class="k">eventAfterAllRender</span><span class="p">"</span><span class="p">: </span><span class="p">"</span><span class="s">//console.log(view);</span><span class="p">"</span><span class="p">,</span></div>
<div class="cl" style="top:847.00px">                        <span class="p">"</span><span class="k">eventAfterRender</span><span class="p">"</span><span class="p">: </span><span class="p">"</span><span class="s">//console.log(event); console.log(element); console.log(view);</span><span class="p">"</span><span class="p">,</span></div>
<div class="cl" style="top:868.60px">                        <span class="p">"</span><span class="k">eventClick</span><span class="p">"</span><span class="p">: </span><span class="p">"</span><span class="s">//console.log(event); console.log(jsEvent); console.log(view);</span><span class="p">"</span><span class="p">,</span></div>
<div class="cl" style="top:890.20px">                        <span class="p">"</span><span class="k">eventColor</span><span class="p">"</span><span class="p">: </span><span class="p">"</span><span class="s"></span><span class="p">"</span><span class="p">,</span></div>
<div class="cl" style="top:911.80px">                        <span class="p">"</span><span class="k">eventId</span><span class="p">"</span><span class="p">: </span><span class="p">"</span><span class="s"></span><span class="p">"</span><span class="p">,</span></div>
<div class="cl" style="top:933.40px">                        <span class="p">"</span><span class="k">eventRender</span><span class="p">"</span><span class="p">: </span><span class="p">"</span><span class="s">//console.log(event); console.log(element); console.log(view);</span><span class="p">"</span><span class="p">,</span></div>
<div class="cl" style="top:955.00px">                        <span class="p">"</span><span class="k">eventTitle</span><span class="p">"</span><span class="p">: </span><span class="p">"</span><span class="s">name</span><span class="p">"</span><span class="p">,</span></div>
<div class="cl" style="top:976.60px">                        <span class="p">"</span><span class="k">eventUrl</span><span class="p">"</span><span class="p">: </span><span class="p">"</span><span class="s"></span><span class="p">"</span><span class="p">,</span></div>
<div class="cl" style="top:998.20px">                        <span class="p">"</span><span class="k">fields</span><span class="p">"</span><span class="p">: [],</span></div>
<div class="cl" style="top:1019.80px">                        <span class="p">"</span><span class="k">fromDate</span><span class="p">"</span><span class="p">: </span><span class="p">"</span><span class="s">from</span><span class="p">"</span><span class="p">,</span></div>
<div class="cl" style="top:1041.40px">                        <span class="p">"</span><span class="k">fromTime</span><span class="p">"</span><span class="p">: </span><span class="p">"</span><span class="s"></span><span class="p">"</span><span class="p">,</span></div>
<div class="cl" style="top:1063.00px">                        <span class="p">"</span><span class="k">google_calendars</span><span class="p">"</span><span class="p">: [],</span></div>
<div class="cl" style="top:1084.60px">                        <span class="p">"</span><span class="k">id</span><span class="p">"</span><span class="p">: </span><span class="p">"</span><span class="s">684C193A488141ABB98192E20B4D8BDA</span><span class="p">"</span><span class="p">,</span></div>
<div class="cl" style="top:1106.20px">                        <span class="p">"</span><span class="k">label</span><span class="p">"</span><span class="p">: </span><span class="p">"</span><span class="s">Calendar</span><span class="p">"</span><span class="p">,</span></div>
<div class="cl" style="top:1127.80px">                        <span class="p">"</span><span class="k">timeDisplayFormat</span><span class="p">"</span><span class="p">: </span><span class="p">"</span><span class="s"></span><span class="p">"</span><span class="p">,</span></div>
<div class="cl" style="top:1149.40px">                        <span class="p">"</span><span class="k">timeFormat</span><span class="p">"</span><span class="p">: </span><span class="p">"</span><span class="s"></span><span class="p">"</span><span class="p">,</span></div>
<div class="cl" style="top:1171.00px">                        <span class="p">"</span><span class="k">title</span><span class="p">"</span><span class="p">: </span><span class="p">"</span><span class="s"></span><span class="p">"</span><span class="p">,</span></div>
<div class="cl" style="top:1192.60px">                        <span class="p">"</span><span class="k">toDate</span><span class="p">"</span><span class="p">: </span><span class="p">"</span><span class="s">to</span><span class="p">"</span><span class="p">,</span></div>
<div class="cl" style="top:1214.20px">                        <span class="p">"</span><span class="k">toTime</span><span class="p">"</span><span class="p">: </span><span class="p">"</span><span class="s"></span><span class="p">"</span><span class="p">,</span></div>
<div class="cl" style="top:1235.80px">                        <span class="p">"</span><span class="k">userviewCacheDuration</span><span class="p">"</span><span class="p">: </span><span class="p">"</span><span class="s">20</span><span class="p">"</span><span class="p">,</span></div>
<div class="cl" style="top:1257.40px">                        <span class="p">"</span><span class="k">userviewCacheScope</span><span class="p">"</span><span class="p">: </span><span class="p">"</span><span class="s"></span><span class="p">"</span></div>
<div class="cl" style="top:1279.00px">                    <span class="p">}</span></div>
<div class="cl" style="top:1300.60px">                <span class="p">}</span></div>
<div class="cl" style="top:1322.20px">            <span class="p">],</span></div>
<div class="cl" style="top:1343.80px"><span class="mk2">=======</span></div>
<div class="cl" style="top:1365.40px">            <span class="p">"</span><span class="k">menus</span><span class="p">"</span><span class="p">: [{</span></div>
<div class="cl" style="top:1387.00px">                <span class="p">"</span><span class="k">className</span><span class="p">"</span><span class="p">: </span><span class="p">"</span><span class="s">org.joget.apps.userview.lib.HtmlPage</span><span class="p">"</span><span class="p">,</span></div></div>
<div class="lens" style="left:1207.8px;top:177.40px">Accept Current Change | Accept Incoming Change | Accept Both Changes | Compare Changes</div>
<svg class="a" style="left:1207.8px;top:216.6px;overflow:hidden" width="60.7" height="4.5"><path d="M0.00 3.30 L4.33 0.80 L8.66 3.30 L12.99 0.80 L17.32 3.30 L21.65 0.80 L25.98 3.30 L30.31 0.80 L34.64 3.30 L38.97 0.80 L43.30 3.30 L47.63 0.80 L51.96 3.30 L56.29 0.80 L60.62 3.30 L64.95 0.80" fill="none" stroke="#e51400" stroke-width="1.2"/></svg>
<svg class="a" style="left:1277.2px;top:216.6px;overflow:hidden" width="34.7" height="4.5"><path d="M0.00 3.30 L4.33 0.80 L8.66 3.30 L12.99 0.80 L17.32 3.30 L21.65 0.80 L25.98 3.30 L30.31 0.80 L34.64 3.30 L38.97 0.80" fill="none" stroke="#e51400" stroke-width="1.2"/></svg>
<svg class="a" style="left:1207.8px;top:1361.4px;overflow:hidden" width="60.7" height="4.5"><path d="M0.00 3.30 L4.33 0.80 L8.66 3.30 L12.99 0.80 L17.32 3.30 L21.65 0.80 L25.98 3.30 L30.31 0.80 L34.64 3.30 L38.97 0.80 L43.30 3.30 L47.63 0.80 L51.96 3.30 L56.29 0.80 L60.62 3.30 L64.95 0.80" fill="none" stroke="#e51400" stroke-width="1.2"/></svg>
<svg class="a" style="left:1311.9px;top:1383.0px;overflow:hidden" width="60.7" height="4.5"><path d="M0.00 3.30 L4.33 0.80 L8.66 3.30 L12.99 0.80 L17.32 3.30 L21.65 0.80 L25.98 3.30 L30.31 0.80 L34.64 3.30 L38.97 0.80 L43.30 3.30 L47.63 0.80 L51.96 3.30 L56.29 0.80 L60.62 3.30 L64.95 0.80" fill="none" stroke="#e51400" stroke-width="1.2"/></svg>
<div class="a" style="left:1208px;top:1377px;width:74px;height:14px;background:rgba(100,100,100,0.4)"></div>
<div class="a" style="left:2072px;top:91px;width:7px;height:1301px;background:linear-gradient(to right,rgba(0,0,0,0),rgba(0,0,0,0.05))"></div>
<svg class="a" style="left:2079.0px;top:91.2px" width="111" height="340">
<rect x="8" y="8.2" width="103" height="2.2" fill="#f6a9a9"/>
<rect x="8" y="24.2" width="103" height="2.2" fill="#dde3ea"/>
<rect x="8" y="114.2" width="103" height="2.2" fill="#f6a9a9"/>
<rect x="8" y="116.2" width="103" height="2.2" fill="#f6a9a9"/>
<rect x="8" y="134.2" width="103" height="2.2" fill="#f6a9a9"/>
<rect x="8" y="144.2" width="103" height="2.2" fill="#f6a9a9"/>
<rect x="8" y="0.5" width="1" height="1.5" fill="url(#mp)"/>
<rect x="12" y="2.5" width="1" height="1.5" fill="url(#mp)"/>
<rect x="13" y="2.5" width="10" height="1.5" fill="url(#mk)"/>
<rect x="23" y="2.5" width="1" height="1.5" fill="url(#mp)"/>
<rect x="24" y="2.5" width="1" height="1.5" fill="url(#mp)"/>
<rect x="26" y="2.5" width="1" height="1.5" fill="url(#mp)"/>
<rect x="16" y="4.5" width="1" height="1.5" fill="url(#mp)"/>
<rect x="20" y="6.5" width="1" height="1.5" fill="url(#mp)"/>
<rect x="21" y="6.5" width="9" height="1.5" fill="url(#mk)"/>
<rect x="30" y="6.5" width="1" height="1.5" fill="url(#mp)"/>
<rect x="31" y="6.5" width="1" height="1.5" fill="url(#mp)"/>
<rect x="33" y="6.5" width="1" height="1.5" fill="url(#mp)"/>
<rect x="34" y="6.5" width="46" height="1.5" fill="url(#ms)"/>
<rect x="80" y="6.5" width="1" height="1.5" fill="url(#mp)"/>
<rect x="81" y="6.5" width="1" height="1.5" fill="url(#mp)"/>
<rect x="8" y="8.5" width="7" height="1.5" fill="url(#mm)"/>
<rect x="16" y="8.5" width="4" height="1.5" fill="url(#mm)"/>
<rect x="21" y="8.5" width="8" height="1.5" fill="url(#mm)"/>
<rect x="30" y="8.5" width="7" height="1.5" fill="url(#mm)"/>
<rect x="20" y="10.5" width="1" height="1.5" fill="url(#mp)"/>
<rect x="21" y="10.5" width="5" height="1.5" fill="url(#mk)"/>
<rect x="26" y="10.5" width="1" height="1.5" fill="url(#mp)"/>
<rect x="27" y="10.5" width="1" height="1.5" fill="url(#mp)"/>
<rect x="29" y="10.5" width="1" height="1.5" fill="url(#mp)"/>
<rect x="24" y="12.5" width="1" height="1.5" fill="url(#mp)"/>
<rect x="28" y="14.5" width="1" height="1.5" fill="url(#mp)"/>
<rect x="29" y="14.5" width="9" height="1.5" fill="url(#mk)"/>
<rect x="38" y="14.5" width="1" height="1.5" fill="url(#mp)"/>
<rect x="39" y="14.5" width="1" height="1.5" fill="url(#mp)"/>
<rect x="41" y="14.5" width="1" height="1.5" fill="url(#mp)"/>
<rect x="42" y="14.5" width="36" height="1.5" fill="url(#ms)"/>
<rect x="78" y="14.5" width="1" height="1.5" fill="url(#mp)"/>
<rect x="79" y="14.5" width="1" height="1.5" fill="url(#mp)"/>
<rect x="28" y="16.5" width="1" height="1.5" fill="url(#mp)"/>
<rect x="29" y="16.5" width="10" height="1.5" fill="url(#mk)"/>
<rect x="39" y="16.5" width="1" height="1.5" fill="url(#mp)"/>
<rect x="40" y="16.5" width="1" height="1.5" fill="url(#mp)"/>
<rect x="42" y="16.5" width="1" height="1.5" fill="url(#mp)"/>
<rect x="32" y="18.5" width="1" height="1.5" fill="url(#mp)"/>
<rect x="33" y="18.5" width="7" height="1.5" fill="url(#mk)"/>
<rect x="40" y="18.5" width="1" height="1.5" fill="url(#mp)"/>
<rect x="41" y="18.5" width="1" height="1.5" fill="url(#mp)"/>
<rect x="43" y="18.5" width="1" height="1.5" fill="url(#mp)"/>
<rect x="44" y="18.5" width="4" height="1.5" fill="url(#ms)"/>
<rect x="49" y="18.5" width="29" height="1.5" fill="url(#ms)"/>
<rect x="79" y="18.5" width="3" height="1.5" fill="url(#ms)"/>
<rect x="83" y="18.5" width="8" height="1.5" fill="url(#ms)"/>
<rect x="92" y="18.5" width="4" height="1.5" fill="url(#ms)"/>
<rect x="97" y="18.5" width="14" height="1.5" fill="url(#ms)"/>
<rect x="32" y="20.5" width="1" height="1.5" fill="url(#mp)"/>
<rect x="33" y="20.5" width="8" height="1.5" fill="url(#mk)"/>
<rect x="41" y="20.5" width="1" height="1.5" fill="url(#mp)"/>
<rect x="42" y="20.5" width="1" height="1.5" fill="url(#mp)"/>
<rect x="44" y="20.5" width="1" height="1.5" fill="url(#mp)"/>
<rect x="45" y="20.5" width="7" height="1.5" fill="url(#ms)"/>
<rect x="52" y="20.5" width="1" height="1.5" fill="url(#mp)"/>
<rect x="53" y="20.5" width="1" height="1.5" fill="url(#mp)"/>
<rect x="32" y="22.5" width="1" height="1.5" fill="url(#mp)"/>
<rect x="33" y="22.5" width="2" height="1.5" fill="url(#mk)"/>
<rect x="35" y="22.5" width="1" height="1.5" fill="url(#mp)"/>
<rect x="36" y="22.5" width="1" height="1.5" fill="url(#mp)"/>
<rect x="38" y="22.5" width="1" height="1.5" fill="url(#mp)"/>
<rect x="39" y="22.5" width="32" height="1.5" fill="url(#ms)"/>
<rect x="71" y="22.5" width="1" height="1.5" fill="url(#mp)"/>
<rect x="72" y="22.5" width="1" height="1.5" fill="url(#mp)"/>
<rect x="32" y="24.5" width="1" height="1.5" fill="url(#mp)"/>
<rect x="33" y="24.5" width="5" height="1.5" fill="url(#mk)"/>
<rect x="38" y="24.5" width="1" height="1.5" fill="url(#mp)"/>
<rect x="39" y="24.5" width="1" height="1.5" fill="url(#mp)"/>
<rect x="41" y="24.5" width="1" height="1.5" fill="url(#mp)"/>
<rect x="42" y="24.5" width="7" height="1.5" fill="url(#ms)"/>
<rect x="49" y="24.5" width="1" height="1.5" fill="url(#mp)"/>
<rect x="28" y="26.5" width="1" height="1.5" fill="url(#mp)"/>
<rect x="24" y="28.5" width="2" height="1.5" fill="url(#mp)"/>
<rect x="24" y="30.5" width="1" height="1.5" fill="url(#mp)"/>
<rect x="28" y="32.5" width="1" height="1.5" fill="url(#mp)"/>
<rect x="29" y="32.5" width="9" height="1.5" fill="url(#mk)"/>
<rect x="38" y="32.5" width="1" height="1.5" fill="url(#mp)"/>
<rect x="39" y="32.5" width="1" height="1.5" fill="url(#mp)"/>
<rect x="41" y="32.5" width="1" height="1.5" fill="url(#mp)"/>
<rect x="42" y="32.5" width="40" height="1.5" fill="url(#ms)"/>
<rect x="82" y="32.5" width="1" height="1.5" fill="url(#mp)"/>
<rect x="83" y="32.5" width="1" height="1.5" fill="url(#mp)"/>
<rect x="28" y="34.5" width="1" height="1.5" fill="url(#mp)"/>
<rect x="29" y="34.5" width="10" height="1.5" fill="url(#mk)"/>
<rect x="39" y="34.5" width="1" height="1.5" fill="url(#mp)"/>
<rect x="40" y="34.5" width="1" height="1.5" fill="url(#mp)"/>
<rect x="42" y="34.5" width="1" height="1.5" fill="url(#mp)"/>
<rect x="32" y="36.5" width="1" height="1.5" fill="url(#mp)"/>
<rect x="33" y="36.5" width="6" height="1.5" fill="url(#mk)"/>
<rect x="39" y="36.5" width="1" height="1.5" fill="url(#mp)"/>
<rect x="40" y="36.5" width="1" height="1.5" fill="url(#mp)"/>
<rect x="42" y="36.5" width="1" height="1.5" fill="url(#mp)"/>
<rect x="43" y="36.5" width="1" height="1.5" fill="url(#mp)"/>
<rect x="44" y="36.5" width="1" height="1.5" fill="url(#mp)"/>
<rect x="32" y="38.5" width="1" height="1.5" fill="url(#mp)"/>
<rect x="33" y="38.5" width="19" height="1.5" fill="url(#mk)"/>
<rect x="52" y="38.5" width="1" height="1.5" fill="url(#mp)"/>
<rect x="53" y="38.5" width="1" height="1.5" fill="url(#mp)"/>
<rect x="55" y="38.5" width="1" height="1.5" fill="url(#mp)"/>
<rect x="56" y="38.5" width="4" height="1.5" fill="url(#ms)"/>
<rect x="60" y="38.5" width="1" height="1.5" fill="url(#mp)"/>
<rect x="61" y="38.5" width="1" height="1.5" fill="url(#mp)"/>
<rect x="32" y="40.5" width="1" height="1.5" fill="url(#mp)"/>
<rect x="33" y="40.5" width="6" height="1.5" fill="url(#mk)"/>
<rect x="39" y="40.5" width="1" height="1.5" fill="url(#mp)"/>
<rect x="40" y="40.5" width="1" height="1.5" fill="url(#mp)"/>
<rect x="42" y="40.5" width="1" height="1.5" fill="url(#mp)"/>
<rect x="36" y="42.5" width="1" height="1.5" fill="url(#mp)"/>
<rect x="37" y="42.5" width="9" height="1.5" fill="url(#mk)"/>
<rect x="46" y="42.5" width="1" height="1.5" fill="url(#mp)"/>
<rect x="47" y="42.5" width="1" height="1.5" fill="url(#mp)"/>
<rect x="49" y="42.5" width="1" height="1.5" fill="url(#mp)"/>
<rect x="50" y="42.5" width="49" height="1.5" fill="url(#ms)"/>
<rect x="99" y="42.5" width="1" height="1.5" fill="url(#mp)"/>
<rect x="100" y="42.5" width="1" height="1.5" fill="url(#mp)"/>
<rect x="36" y="44.5" width="1" height="1.5" fill="url(#mp)"/>
<rect x="37" y="44.5" width="10" height="1.5" fill="url(#mk)"/>
<rect x="47" y="44.5" width="1" height="1.5" fill="url(#mp)"/>
<rect x="48" y="44.5" width="1" height="1.5" fill="url(#mp)"/>
<rect x="50" y="44.5" width="1" height="1.5" fill="url(#mp)"/>
<rect x="40" y="46.5" width="1" height="1.5" fill="url(#mp)"/>
<rect x="41" y="46.5" width="14" height="1.5" fill="url(#mk)"/>
<rect x="55" y="46.5" width="1" height="1.5" fill="url(#mp)"/>
<rect x="56" y="46.5" width="1" height="1.5" fill="url(#mp)"/>
<rect x="58" y="46.5" width="1" height="1.5" fill="url(#mp)"/>
<rect x="59" y="46.5" width="1" height="1.5" fill="url(#mp)"/>
<rect x="60" y="46.5" width="1" height="1.5" fill="url(#mp)"/>
<rect x="40" y="48.5" width="1" height="1.5" fill="url(#mp)"/>
<rect x="41" y="48.5" width="9" height="1.5" fill="url(#mk)"/>
<rect x="50" y="48.5" width="1" height="1.5" fill="url(#mp)"/>
<rect x="51" y="48.5" width="1" height="1.5" fill="url(#mp)"/>
<rect x="53" y="48.5" width="1" height="1.5" fill="url(#mp)"/>
<rect x="54" y="48.5" width="7" height="1.5" fill="url(#ms)"/>
<rect x="61" y="48.5" width="1" height="1.5" fill="url(#mp)"/>
<rect x="36" y="50.5" width="1" height="1.5" fill="url(#mp)"/>
<rect x="32" y="52.5" width="2" height="1.5" fill="url(#mp)"/>
<rect x="32" y="54.5" width="1" height="1.5" fill="url(#mp)"/>
<rect x="33" y="54.5" width="8" height="1.5" fill="url(#mk)"/>
<rect x="41" y="54.5" width="1" height="1.5" fill="url(#mp)"/>
<rect x="42" y="54.5" width="1" height="1.5" fill="url(#mp)"/>
<rect x="44" y="54.5" width="1" height="1.5" fill="url(#mp)"/>
<rect x="45" y="54.5" width="1" height="1.5" fill="url(#mp)"/>
<rect x="46" y="54.5" width="1" height="1.5" fill="url(#mp)"/>
<rect x="32" y="56.5" width="1" height="1.5" fill="url(#mp)"/>
<rect x="33" y="56.5" width="12" height="1.5" fill="url(#mk)"/>
<rect x="45" y="56.5" width="1" height="1.5" fill="url(#mp)"/>
<rect x="46" y="56.5" width="1" height="1.5" fill="url(#mp)"/>
<rect x="48" y="56.5" width="1" height="1.5" fill="url(#mp)"/>
<rect x="49" y="56.5" width="1" height="1.5" fill="url(#mp)"/>
<rect x="50" y="56.5" width="1" height="1.5" fill="url(#mp)"/>
<rect x="32" y="58.5" width="1" height="1.5" fill="url(#mp)"/>
<rect x="33" y="58.5" width="12" height="1.5" fill="url(#mk)"/>
<rect x="45" y="58.5" width="1" height="1.5" fill="url(#mp)"/>
<rect x="46" y="58.5" width="1" height="1.5" fill="url(#mp)"/>
<rect x="48" y="58.5" width="1" height="1.5" fill="url(#mp)"/>
<rect x="49" y="58.5" width="1" height="1.5" fill="url(#mp)"/>
<rect x="50" y="58.5" width="1" height="1.5" fill="url(#mp)"/>
<rect x="32" y="60.5" width="1" height="1.5" fill="url(#mp)"/>
<rect x="33" y="60.5" width="8" height="1.5" fill="url(#mk)"/>
<rect x="41" y="60.5" width="1" height="1.5" fill="url(#mp)"/>
<rect x="42" y="60.5" width="1" height="1.5" fill="url(#mp)"/>
<rect x="44" y="60.5" width="1" height="1.5" fill="url(#mp)"/>
<rect x="45" y="60.5" width="1" height="1.5" fill="url(#mp)"/>
<rect x="46" y="60.5" width="1" height="1.5" fill="url(#mp)"/>
<rect x="32" y="62.5" width="1" height="1.5" fill="url(#mp)"/>
<rect x="33" y="62.5" width="10" height="1.5" fill="url(#mk)"/>
<rect x="43" y="62.5" width="1" height="1.5" fill="url(#mp)"/>
<rect x="44" y="62.5" width="1" height="1.5" fill="url(#mp)"/>
<rect x="46" y="62.5" width="1" height="1.5" fill="url(#mp)"/>
<rect x="47" y="62.5" width="10" height="1.5" fill="url(#ms)"/>
<rect x="57" y="62.5" width="1" height="1.5" fill="url(#mp)"/>
<rect x="58" y="62.5" width="1" height="1.5" fill="url(#mp)"/>
<rect x="32" y="64.5" width="1" height="1.5" fill="url(#mp)"/>
<rect x="33" y="64.5" width="13" height="1.5" fill="url(#mk)"/>
<rect x="46" y="64.5" width="1" height="1.5" fill="url(#mp)"/>
<rect x="47" y="64.5" width="1" height="1.5" fill="url(#mp)"/>
<rect x="49" y="64.5" width="1" height="1.5" fill="url(#mp)"/>
<rect x="50" y="64.5" width="1" height="1.5" fill="url(#mp)"/>
<rect x="51" y="64.5" width="1" height="1.5" fill="url(#mp)"/>
<rect x="32" y="66.5" width="1" height="1.5" fill="url(#mp)"/>
<rect x="33" y="66.5" width="19" height="1.5" fill="url(#mk)"/>
<rect x="52" y="66.5" width="1" height="1.5" fill="url(#mp)"/>
<rect x="53" y="66.5" width="1" height="1.5" fill="url(#mp)"/>
<rect x="55" y="66.5" width="1" height="1.5" fill="url(#mp)"/>
<rect x="56" y="66.5" width="20" height="1.5" fill="url(#ms)"/>
<rect x="76" y="66.5" width="1" height="1.5" fill="url(#mp)"/>
<rect x="77" y="66.5" width="1" height="1.5" fill="url(#mp)"/>
<rect x="32" y="68.5" width="1" height="1.5" fill="url(#mp)"/>
<rect x="33" y="68.5" width="16" height="1.5" fill="url(#mk)"/>
<rect x="49" y="68.5" width="1" height="1.5" fill="url(#mp)"/>
<rect x="50" y="68.5" width="1" height="1.5" fill="url(#mp)"/>
<rect x="52" y="68.5" width="1" height="1.5" fill="url(#mp)"/>
<rect x="53" y="68.5" width="21" height="1.5" fill="url(#ms)"/>
<rect x="75" y="68.5" width="21" height="1.5" fill="url(#ms)"/>
<rect x="97" y="68.5" width="14" height="1.5" fill="url(#ms)"/>
<rect x="32" y="70.5" width="1" height="1.5" fill="url(#mp)"/>
<rect x="33" y="70.5" width="10" height="1.5" fill="url(#mk)"/>
<rect x="43" y="70.5" width="1" height="1.5" fill="url(#mp)"/>
<rect x="44" y="70.5" width="1" height="1.5" fill="url(#mp)"/>
<rect x="46" y="70.5" width="1" height="1.5" fill="url(#mp)"/>
<rect x="47" y="70.5" width="21" height="1.5" fill="url(#ms)"/>
<rect x="69" y="70.5" width="21" height="1.5" fill="url(#ms)"/>
<rect x="91" y="70.5" width="18" height="1.5" fill="url(#ms)"/>
<rect x="109" y="70.5" width="1" height="1.5" fill="url(#mp)"/>
<rect x="110" y="70.5" width="1" height="1.5" fill="url(#mp)"/>
<rect x="32" y="72.5" width="1" height="1.5" fill="url(#mp)"/>
<rect x="33" y="72.5" width="10" height="1.5" fill="url(#mk)"/>
<rect x="43" y="72.5" width="1" height="1.5" fill="url(#mp)"/>
<rect x="44" y="72.5" width="1" height="1.5" fill="url(#mp)"/>
<rect x="46" y="72.5" width="1" height="1.5" fill="url(#mp)"/>
<rect x="47" y="72.5" width="1" height="1.5" fill="url(#mp)"/>
<rect x="48" y="72.5" width="1" height="1.5" fill="url(#mp)"/>
<rect x="32" y="74.5" width="1" height="1.5" fill="url(#mp)"/>
<rect x="33" y="74.5" width="7" height="1.5" fill="url(#mk)"/>
<rect x="40" y="74.5" width="1" height="1.5" fill="url(#mp)"/>
<rect x="41" y="74.5" width="1" height="1.5" fill="url(#mp)"/>
<rect x="43" y="74.5" width="1" height="1.5" fill="url(#mp)"/>
<rect x="44" y="74.5" width="1" height="1.5" fill="url(#mp)"/>
<rect x="45" y="74.5" width="1" height="1.5" fill="url(#mp)"/>
<rect x="32" y="76.5" width="1" height="1.5" fill="url(#mp)"/>
<rect x="33" y="76.5" width="11" height="1.5" fill="url(#mk)"/>
<rect x="44" y="76.5" width="1" height="1.5" fill="url(#mp)"/>
<rect x="45" y="76.5" width="1" height="1.5" fill="url(#mp)"/>
<rect x="47" y="76.5" width="1" height="1.5" fill="url(#mp)"/>
<rect x="48" y="76.5" width="21" height="1.5" fill="url(#ms)"/>
<rect x="70" y="76.5" width="21" height="1.5" fill="url(#ms)"/>
<rect x="92" y="76.5" width="18" height="1.5" fill="url(#ms)"/>
<rect x="110" y="76.5" width="1" height="1.5" fill="url(#mp)"/>
<rect x="32" y="78.5" width="1" height="1.5" fill="url(#mp)"/>
<rect x="33" y="78.5" width="10" height="1.5" fill="url(#mk)"/>
<rect x="43" y="78.5" width="1" height="1.5" fill="url(#mp)"/>
<rect x="44" y="78.5" width="1" height="1.5" fill="url(#mp)"/>
<rect x="46" y="78.5" width="1" height="1.5" fill="url(#mp)"/>
<rect x="47" y="78.5" width="4" height="1.5" fill="url(#ms)"/>
<rect x="51" y="78.5" width="1" height="1.5" fill="url(#mp)"/>
<rect x="52" y="78.5" width="1" height="1.5" fill="url(#mp)"/>
<rect x="32" y="80.5" width="1" height="1.5" fill="url(#mp)"/>
<rect x="33" y="80.5" width="8" height="1.5" fill="url(#mk)"/>
<rect x="41" y="80.5" width="1" height="1.5" fill="url(#mp)"/>
<rect x="42" y="80.5" width="1" height="1.5" fill="url(#mp)"/>
<rect x="44" y="80.5" width="1" height="1.5" fill="url(#mp)"/>
<rect x="45" y="80.5" width="1" height="1.5" fill="url(#mp)"/>
<rect x="46" y="80.5" width="1" height="1.5" fill="url(#mp)"/>
<rect x="32" y="82.5" width="1" height="1.5" fill="url(#mp)"/>
<rect x="33" y="82.5" width="6" height="1.5" fill="url(#mk)"/>
<rect x="39" y="82.5" width="1" height="1.5" fill="url(#mp)"/>
<rect x="40" y="82.5" width="1" height="1.5" fill="url(#mp)"/>
<rect x="42" y="82.5" width="3" height="1.5" fill="url(#mp)"/>
<rect x="32" y="84.5" width="1" height="1.5" fill="url(#mp)"/>
<rect x="33" y="84.5" width="8" height="1.5" fill="url(#mk)"/>
<rect x="41" y="84.5" width="1" height="1.5" fill="url(#mp)"/>
<rect x="42" y="84.5" width="1" height="1.5" fill="url(#mp)"/>
<rect x="44" y="84.5" width="1" height="1.5" fill="url(#mp)"/>
<rect x="45" y="84.5" width="4" height="1.5" fill="url(#ms)"/>
<rect x="49" y="84.5" width="1" height="1.5" fill="url(#mp)"/>
<rect x="50" y="84.5" width="1" height="1.5" fill="url(#mp)"/>
<rect x="32" y="86.5" width="1" height="1.5" fill="url(#mp)"/>
<rect x="33" y="86.5" width="8" height="1.5" fill="url(#mk)"/>
<rect x="41" y="86.5" width="1" height="1.5" fill="url(#mp)"/>
<rect x="42" y="86.5" width="1" height="1.5" fill="url(#mp)"/>
<rect x="44" y="86.5" width="1" height="1.5" fill="url(#mp)"/>
<rect x="45" y="86.5" width="1" height="1.5" fill="url(#mp)"/>
<rect x="46" y="86.5" width="1" height="1.5" fill="url(#mp)"/>
<rect x="32" y="88.5" width="1" height="1.5" fill="url(#mp)"/>
<rect x="33" y="88.5" width="16" height="1.5" fill="url(#mk)"/>
<rect x="49" y="88.5" width="1" height="1.5" fill="url(#mp)"/>
<rect x="50" y="88.5" width="1" height="1.5" fill="url(#mp)"/>
<rect x="52" y="88.5" width="3" height="1.5" fill="url(#mp)"/>
<rect x="32" y="90.5" width="1" height="1.5" fill="url(#mp)"/>
<rect x="33" y="90.5" width="2" height="1.5" fill="url(#mk)"/>
<rect x="35" y="90.5" width="1" height="1.5" fill="url(#mp)"/>
<rect x="36" y="90.5" width="1" height="1.5" fill="url(#mp)"/>
<rect x="38" y="90.5" width="1" height="1.5" fill="url(#mp)"/>
<rect x="39" y="90.5" width="32" height="1.5" fill="url(#ms)"/>
<rect x="71" y="90.5" width="1" height="1.5" fill="url(#mp)"/>
<rect x="72" y="90.5" width="1" height="1.5" fill="url(#mp)"/>
<rect x="32" y="92.5" width="1" height="1.5" fill="url(#mp)"/>
<rect x="33" y="92.5" width="5" height="1.5" fill="url(#mk)"/>
<rect x="38" y="92.5" width="1" height="1.5" fill="url(#mp)"/>
<rect x="39" y="92.5" width="1" height="1.5" fill="url(#mp)"/>
<rect x="41" y="92.5" width="1" height="1.5" fill="url(#mp)"/>
<rect x="42" y="92.5" width="8" height="1.5" fill="url(#ms)"/>
<rect x="50" y="92.5" width="1" height="1.5" fill="url(#mp)"/>
<rect x="51" y="92.5" width="1" height="1.5" fill="url(#mp)"/>
<rect x="32" y="94.5" width="1" height="1.5" fill="url(#mp)"/>
<rect x="33" y="94.5" width="17" height="1.5" fill="url(#mk)"/>
<rect x="50" y="94.5" width="1" height="1.5" fill="url(#mp)"/>
<rect x="51" y="94.5" width="1" height="1.5" fill="url(#mp)"/>
<rect x="53" y="94.5" width="1" height="1.5" fill="url(#mp)"/>
<rect x="54" y="94.5" width="1" height="1.5" fill="url(#mp)"/>
<rect x="55" y="94.5" width="1" height="1.5" fill="url(#mp)"/>
<rect x="32" y="96.5" width="1" height="1.5" fill="url(#mp)"/>
<rect x="33" y="96.5" width="10" height="1.5" fill="url(#mk)"/>
<rect x="43" y="96.5" width="1" height="1.5" fill="url(#mp)"/>
<rect x="44" y="96.5" width="1" height="1.5" fill="url(#mp)"/>
<rect x="46" y="96.5" width="1" height="1.5" fill="url(#mp)"/>
<rect x="47" y="96.5" width="1" height="1.5" fill="url(#mp)"/>
<rect x="48" y="96.5" width="1" height="1.5" fill="url(#mp)"/>
<rect x="32" y="98.5" width="1" height="1.5" fill="url(#mp)"/>
<rect x="33" y="98.5" width="5" height="1.5" fill="url(#mk)"/>
<rect x="38" y="98.5" width="1" height="1.5" fill="url(#mp)"/>
<rect x="39" y="98.5" width="1" height="1.5" fill="url(#mp)"/>
<rect x="41" y="98.5" width="1" height="1.5" fill="url(#mp)"/>
<rect x="42" y="98.5" width="1" height="1.5" fill="url(#mp)"/>
<rect x="43" y="98.5" width="1" height="1.5" fill="url(#mp)"/>
<rect x="32" y="100.5" width="1" height="1.5" fill="url(#mp)"/>
<rect x="33" y="100.5" width="6" height="1.5" fill="url(#mk)"/>
<rect x="39" y="100.5" width="1" height="1.5" fill="url(#mp)"/>
<rect x="40" y="100.5" width="1" height="1.5" fill="url(#mp)"/>
<rect x="42" y="100.5" width="1" height="1.5" fill="url(#mp)"/>
<rect x="43" y="100.5" width="2" height="1.5" fill="url(#ms)"/>
<rect x="45" y="100.5" width="1" height="1.5" fill="url(#mp)"/>
<rect x="46" y="100.5" width="1" height="1.5" fill="url(#mp)"/>
<rect x="32" y="102.5" width="1" height="1.5" fill="url(#mp)"/>
<rect x="33" y="102.5" width="6" height="1.5" fill="url(#mk)"/>
<rect x="39" y="102.5" width="1" height="1.5" fill="url(#mp)"/>
<rect x="40" y="102.5" width="1" height="1.5" fill="url(#mp)"/>
<rect x="42" y="102.5" width="1" height="1.5" fill="url(#mp)"/>
<rect x="43" y="102.5" width="1" height="1.5" fill="url(#mp)"/>
<rect x="44" y="102.5" width="1" height="1.5" fill="url(#mp)"/>
<rect x="32" y="104.5" width="1" height="1.5" fill="url(#mp)"/>
<rect x="33" y="104.5" width="21" height="1.5" fill="url(#mk)"/>
<rect x="54" y="104.5" width="1" height="1.5" fill="url(#mp)"/>
<rect x="55" y="104.5" width="1" height="1.5" fill="url(#mp)"/>
<rect x="57" y="104.5" width="1" height="1.5" fill="url(#mp)"/>
<rect x="58" y="104.5" width="2" height="1.5" fill="url(#ms)"/>
<rect x="60" y="104.5" width="1" height="1.5" fill="url(#mp)"/>
<rect x="61" y="104.5" width="1" height="1.5" fill="url(#mp)"/>
<rect x="32" y="106.5" width="1" height="1.5" fill="url(#mp)"/>
<rect x="33" y="106.5" width="18" height="1.5" fill="url(#mk)"/>
<rect x="51" y="106.5" width="1" height="1.5" fill="url(#mp)"/>
<rect x="52" y="106.5" width="1" height="1.5" fill="url(#mp)"/>
<rect x="54" y="106.5" width="1" height="1.5" fill="url(#mp)"/>
<rect x="55" y="106.5" width="1" height="1.5" fill="url(#mp)"/>
<rect x="28" y="108.5" width="1" height="1.5" fill="url(#mp)"/>
<rect x="24" y="110.5" width="1" height="1.5" fill="url(#mp)"/>
<rect x="20" y="112.5" width="2" height="1.5" fill="url(#mp)"/>
<rect x="8" y="114.5" width="7" height="1.5" fill="url(#mm)"/>
<rect x="20" y="116.5" width="1" height="1.5" fill="url(#mp)"/>
<rect x="21" y="116.5" width="5" height="1.5" fill="url(#mk)"/>
<rect x="26" y="116.5" width="1" height="1.5" fill="url(#mp)"/>
<rect x="27" y="116.5" width="1" height="1.5" fill="url(#mp)"/>
<rect x="29" y="116.5" width="2" height="1.5" fill="url(#mp)"/>
<rect x="24" y="118.5" width="1" height="1.5" fill="url(#mp)"/>
<rect x="25" y="118.5" width="9" height="1.5" fill="url(#mk)"/>
<rect x="34" y="118.5" width="1" height="1.5" fill="url(#mp)"/>
<rect x="35" y="118.5" width="1" height="1.5" fill="url(#mp)"/>
<rect x="37" y="118.5" width="1" height="1.5" fill="url(#mp)"/>
<rect x="38" y="118.5" width="36" height="1.5" fill="url(#ms)"/>
<rect x="74" y="118.5" width="1" height="1.5" fill="url(#mp)"/>
<rect x="75" y="118.5" width="1" height="1.5" fill="url(#mp)"/>
<rect x="28" y="120.5" width="1" height="1.5" fill="url(#mp)"/>
<rect x="29" y="120.5" width="10" height="1.5" fill="url(#mk)"/>
<rect x="39" y="120.5" width="1" height="1.5" fill="url(#mp)"/>
<rect x="40" y="120.5" width="1" height="1.5" fill="url(#mp)"/>
<rect x="42" y="120.5" width="1" height="1.5" fill="url(#mp)"/>
<rect x="32" y="122.5" width="1" height="1.5" fill="url(#mp)"/>
<rect x="33" y="122.5" width="7" height="1.5" fill="url(#mk)"/>
<rect x="40" y="122.5" width="1" height="1.5" fill="url(#mp)"/>
<rect x="41" y="122.5" width="1" height="1.5" fill="url(#mp)"/>
<rect x="43" y="122.5" width="1" height="1.5" fill="url(#mp)"/>
<rect x="44" y="122.5" width="4" height="1.5" fill="url(#ms)"/>
<rect x="49" y="122.5" width="29" height="1.5" fill="url(#ms)"/>
<rect x="79" y="122.5" width="3" height="1.5" fill="url(#ms)"/>
<rect x="83" y="122.5" width="8" height="1.5" fill="url(#ms)"/>
<rect x="92" y="122.5" width="4" height="1.5" fill="url(#ms)"/>
<rect x="97" y="122.5" width="14" height="1.5" fill="url(#ms)"/>
<rect x="32" y="124.5" width="1" height="1.5" fill="url(#mp)"/>
<rect x="33" y="124.5" width="8" height="1.5" fill="url(#mk)"/>
<rect x="41" y="124.5" width="1" height="1.5" fill="url(#mp)"/>
<rect x="42" y="124.5" width="1" height="1.5" fill="url(#mp)"/>
<rect x="44" y="124.5" width="1" height="1.5" fill="url(#mp)"/>
<rect x="45" y="124.5" width="7" height="1.5" fill="url(#ms)"/>
<rect x="52" y="124.5" width="1" height="1.5" fill="url(#mp)"/>
<rect x="53" y="124.5" width="1" height="1.5" fill="url(#mp)"/>
<rect x="32" y="126.5" width="1" height="1.5" fill="url(#mp)"/>
<rect x="33" y="126.5" width="2" height="1.5" fill="url(#mk)"/>
<rect x="35" y="126.5" width="1" height="1.5" fill="url(#mp)"/>
<rect x="36" y="126.5" width="1" height="1.5" fill="url(#mp)"/>
<rect x="38" y="126.5" width="1" height="1.5" fill="url(#mp)"/>
<rect x="39" y="126.5" width="32" height="1.5" fill="url(#ms)"/>
<rect x="71" y="126.5" width="1" height="1.5" fill="url(#mp)"/>
<rect x="72" y="126.5" width="1" height="1.5" fill="url(#mp)"/>
<rect x="32" y="128.5" width="1" height="1.5" fill="url(#mp)"/>
<rect x="33" y="128.5" width="5" height="1.5" fill="url(#mk)"/>
<rect x="38" y="128.5" width="1" height="1.5" fill="url(#mp)"/>
<rect x="39" y="128.5" width="1" height="1.5" fill="url(#mp)"/>
<rect x="41" y="128.5" width="1" height="1.5" fill="url(#mp)"/>
<rect x="42" y="128.5" width="7" height="1.5" fill="url(#ms)"/>
<rect x="49" y="128.5" width="1" height="1.5" fill="url(#mp)"/>
<rect x="28" y="130.5" width="1" height="1.5" fill="url(#mp)"/>
<rect x="24" y="132.5" width="3" height="1.5" fill="url(#mp)"/>
<rect x="8" y="134.5" width="7" height="1.5" fill="url(#mm)"/>
<rect x="16" y="134.5" width="15" height="1.5" fill="url(#mm)"/>
<rect x="32" y="134.5" width="9" height="1.5" fill="url(#mm)"/>
<rect x="42" y="134.5" width="7" height="1.5" fill="url(#mm)"/>
<rect x="20" y="136.5" width="1" height="1.5" fill="url(#mp)"/>
<rect x="21" y="136.5" width="10" height="1.5" fill="url(#mk)"/>
<rect x="31" y="136.5" width="1" height="1.5" fill="url(#mp)"/>
<rect x="32" y="136.5" width="1" height="1.5" fill="url(#mp)"/>
<rect x="34" y="136.5" width="1" height="1.5" fill="url(#mp)"/>
<rect x="24" y="138.5" width="1" height="1.5" fill="url(#mp)"/>
<rect x="25" y="138.5" width="4" height="1.5" fill="url(#mk)"/>
<rect x="29" y="138.5" width="1" height="1.5" fill="url(#mp)"/>
<rect x="30" y="138.5" width="1" height="1.5" fill="url(#mp)"/>
<rect x="32" y="138.5" width="1" height="1.5" fill="url(#mp)"/>
<rect x="33" y="138.5" width="1" height="1.5" fill="url(#mp)"/>
<rect x="34" y="138.5" width="1" height="1.5" fill="url(#mp)"/>
<rect x="24" y="140.5" width="1" height="1.5" fill="url(#mp)"/>
<rect x="25" y="140.5" width="2" height="1.5" fill="url(#mk)"/>
<rect x="27" y="140.5" width="1" height="1.5" fill="url(#mp)"/>
<rect x="28" y="140.5" width="1" height="1.5" fill="url(#mp)"/>
<rect x="30" y="140.5" width="1" height="1.5" fill="url(#mp)"/>
<rect x="31" y="140.5" width="41" height="1.5" fill="url(#ms)"/>
<rect x="72" y="140.5" width="1" height="1.5" fill="url(#mp)"/>
<rect x="73" y="140.5" width="1" height="1.5" fill="url(#mp)"/>
<rect x="24" y="142.5" width="1" height="1.5" fill="url(#mp)"/>
<rect x="25" y="142.5" width="5" height="1.5" fill="url(#mk)"/>
<rect x="30" y="142.5" width="1" height="1.5" fill="url(#mp)"/>
<rect x="31" y="142.5" width="1" height="1.5" fill="url(#mp)"/>
<rect x="33" y="142.5" width="1" height="1.5" fill="url(#mp)"/>
<rect x="34" y="142.5" width="7" height="1.5" fill="url(#ms)"/>
<rect x="42" y="142.5" width="2" height="1.5" fill="url(#ms)"/>
<rect x="45" y="142.5" width="5" height="1.5" fill="url(#ms)"/>
<rect x="51" y="142.5" width="8" height="1.5" fill="url(#ms)"/>
<rect x="59" y="142.5" width="1" height="1.5" fill="url(#mp)"/>
<rect x="20" y="144.5" width="1" height="1.5" fill="url(#mp)"/>
<rect x="16" y="146.5" width="1" height="1.5" fill="url(#mp)"/>
<rect x="16" y="148.5" width="1" height="1.5" fill="url(#mp)"/>
<rect x="20" y="150.5" width="1" height="1.5" fill="url(#mp)"/>
<rect x="21" y="150.5" width="9" height="1.5" fill="url(#mk)"/>
<rect x="30" y="150.5" width="1" height="1.5" fill="url(#mp)"/>
<rect x="31" y="150.5" width="1" height="1.5" fill="url(#mp)"/>
<rect x="33" y="150.5" width="1" height="1.5" fill="url(#mp)"/>
<rect x="34" y="150.5" width="46" height="1.5" fill="url(#ms)"/>
<rect x="80" y="150.5" width="1" height="1.5" fill="url(#mp)"/>
<rect x="81" y="150.5" width="1" height="1.5" fill="url(#mp)"/>
<rect x="20" y="152.5" width="1" height="1.5" fill="url(#mp)"/>
<rect x="21" y="152.5" width="5" height="1.5" fill="url(#mk)"/>
<rect x="26" y="152.5" width="1" height="1.5" fill="url(#mp)"/>
<rect x="27" y="152.5" width="1" height="1.5" fill="url(#mp)"/>
<rect x="29" y="152.5" width="2" height="1.5" fill="url(#mp)"/>
<rect x="24" y="154.5" width="1" height="1.5" fill="url(#mp)"/>
<rect x="25" y="154.5" width="9" height="1.5" fill="url(#mk)"/>
<rect x="34" y="154.5" width="1" height="1.5" fill="url(#mp)"/>
<rect x="35" y="154.5" width="1" height="1.5" fill="url(#mp)"/>
<rect x="37" y="154.5" width="1" height="1.5" fill="url(#mp)"/>
<rect x="38" y="154.5" width="36" height="1.5" fill="url(#ms)"/>
<rect x="74" y="154.5" width="1" height="1.5" fill="url(#mp)"/>
<rect x="75" y="154.5" width="1" height="1.5" fill="url(#mp)"/>
<rect x="24" y="156.5" width="1" height="1.5" fill="url(#mp)"/>
<rect x="25" y="156.5" width="10" height="1.5" fill="url(#mk)"/>
<rect x="35" y="156.5" width="1" height="1.5" fill="url(#mp)"/>
<rect x="36" y="156.5" width="1" height="1.5" fill="url(#mp)"/>
<rect x="38" y="156.5" width="1" height="1.5" fill="url(#mp)"/>
<rect x="28" y="158.5" width="1" height="1.5" fill="url(#mp)"/>
<rect x="29" y="158.5" width="14" height="1.5" fill="url(#mk)"/>
<rect x="43" y="158.5" width="1" height="1.5" fill="url(#mp)"/>
<rect x="44" y="158.5" width="1" height="1.5" fill="url(#mp)"/>
<rect x="46" y="158.5" width="1" height="1.5" fill="url(#mp)"/>
<rect x="47" y="158.5" width="1" height="1.5" fill="url(#mp)"/>
<rect x="48" y="158.5" width="1" height="1.5" fill="url(#mp)"/>
<rect x="28" y="160.5" width="1" height="1.5" fill="url(#mp)"/>
<rect x="29" y="160.5" width="14" height="1.5" fill="url(#mk)"/>
<rect x="43" y="160.5" width="1" height="1.5" fill="url(#mp)"/>
<rect x="44" y="160.5" width="1" height="1.5" fill="url(#mp)"/>
<rect x="46" y="160.5" width="1" height="1.5" fill="url(#mp)"/>
<rect x="47" y="160.5" width="1" height="1.5" fill="url(#mp)"/>
<rect x="48" y="160.5" width="1" height="1.5" fill="url(#mp)"/>
<rect x="28" y="162.5" width="1" height="1.5" fill="url(#mp)"/>
<rect x="29" y="162.5" width="17" height="1.5" fill="url(#mk)"/>
<rect x="46" y="162.5" width="1" height="1.5" fill="url(#mp)"/>
<rect x="47" y="162.5" width="1" height="1.5" fill="url(#mp)"/>
<rect x="49" y="162.5" width="1" height="1.5" fill="url(#mp)"/>
<rect x="50" y="162.5" width="1" height="1.5" fill="url(#mp)"/>
<rect x="51" y="162.5" width="1" height="1.5" fill="url(#mp)"/>
<rect x="28" y="164.5" width="1" height="1.5" fill="url(#mp)"/>
<rect x="29" y="164.5" width="16" height="1.5" fill="url(#mk)"/>
<rect x="45" y="164.5" width="1" height="1.5" fill="url(#mp)"/>
<rect x="46" y="164.5" width="1" height="1.5" fill="url(#mp)"/>
<rect x="48" y="164.5" width="1" height="1.5" fill="url(#mp)"/>
<rect x="49" y="164.5" width="1" height="1.5" fill="url(#mp)"/>
<rect x="50" y="164.5" width="1" height="1.5" fill="url(#mp)"/>
<rect x="28" y="166.5" width="1" height="1.5" fill="url(#mp)"/>
<rect x="29" y="166.5" width="12" height="1.5" fill="url(#mk)"/>
<rect x="41" y="166.5" width="1" height="1.5" fill="url(#mp)"/>
<rect x="42" y="166.5" width="1" height="1.5" fill="url(#mp)"/>
<rect x="44" y="166.5" width="1" height="1.5" fill="url(#mp)"/>
<rect x="45" y="166.5" width="5" height="1.5" fill="url(#ms)"/>
<rect x="50" y="166.5" width="1" height="1.5" fill="url(#mp)"/>
<rect x="51" y="166.5" width="1" height="1.5" fill="url(#mp)"/>
<rect x="28" y="168.5" width="1" height="1.5" fill="url(#mp)"/>
<rect x="29" y="168.5" width="12" height="1.5" fill="url(#mk)"/>
<rect x="41" y="168.5" width="1" height="1.5" fill="url(#mp)"/>
<rect x="42" y="168.5" width="1" height="1.5" fill="url(#mp)"/>
<rect x="44" y="168.5" width="1" height="1.5" fill="url(#mp)"/>
<rect x="45" y="168.5" width="5" height="1.5" fill="url(#ms)"/>
<rect x="50" y="168.5" width="1" height="1.5" fill="url(#mp)"/>
<rect x="51" y="168.5" width="1" height="1.5" fill="url(#mp)"/>
<rect x="28" y="170.5" width="1" height="1.5" fill="url(#mp)"/>
<rect x="29" y="170.5" width="8" height="1.5" fill="url(#mk)"/>
<rect x="37" y="170.5" width="1" height="1.5" fill="url(#mp)"/>
<rect x="38" y="170.5" width="1" height="1.5" fill="url(#mp)"/>
<rect x="40" y="170.5" width="1" height="1.5" fill="url(#mp)"/>
<rect x="41" y="170.5" width="1" height="1.5" fill="url(#mp)"/>
<rect x="42" y="170.5" width="1" height="1.5" fill="url(#mp)"/>
<rect x="28" y="172.5" width="1" height="1.5" fill="url(#mp)"/>
<rect x="29" y="172.5" width="10" height="1.5" fill="url(#mk)"/>
<rect x="39" y="172.5" width="1" height="1.5" fill="url(#mp)"/>
<rect x="40" y="172.5" width="1" height="1.5" fill="url(#mp)"/>
<rect x="42" y="172.5" width="1" height="1.5" fill="url(#mp)"/>
<rect x="43" y="172.5" width="1" height="1.5" fill="url(#mp)"/>
<rect x="44" y="172.5" width="1" height="1.5" fill="url(#mp)"/>
<rect x="28" y="174.5" width="1" height="1.5" fill="url(#mp)"/>
<rect x="29" y="174.5" width="17" height="1.5" fill="url(#mk)"/>
<rect x="46" y="174.5" width="1" height="1.5" fill="url(#mp)"/>
<rect x="47" y="174.5" width="1" height="1.5" fill="url(#mp)"/>
<rect x="49" y="174.5" width="1" height="1.5" fill="url(#mp)"/>
<rect x="50" y="174.5" width="1" height="1.5" fill="url(#mp)"/>
<rect x="51" y="174.5" width="1" height="1.5" fill="url(#mp)"/>
<rect x="28" y="176.5" width="1" height="1.5" fill="url(#mp)"/>
<rect x="29" y="176.5" width="15" height="1.5" fill="url(#mk)"/>
<rect x="44" y="176.5" width="1" height="1.5" fill="url(#mp)"/>
<rect x="45" y="176.5" width="1" height="1.5" fill="url(#mp)"/>
<rect x="47" y="176.5" width="1" height="1.5" fill="url(#mp)"/>
<rect x="48" y="176.5" width="5" height="1.5" fill="url(#ms)"/>
<rect x="53" y="176.5" width="1" height="1.5" fill="url(#mp)"/>
<rect x="54" y="176.5" width="1" height="1.5" fill="url(#mp)"/>
<rect x="28" y="178.5" width="1" height="1.5" fill="url(#mp)"/>
<rect x="29" y="178.5" width="10" height="1.5" fill="url(#mk)"/>
<rect x="39" y="178.5" width="1" height="1.5" fill="url(#mp)"/>
<rect x="40" y="178.5" width="1" height="1.5" fill="url(#mp)"/>
<rect x="42" y="178.5" width="1" height="1.5" fill="url(#mp)"/>
<rect x="43" y="178.5" width="1" height="1.5" fill="url(#mp)"/>
<rect x="44" y="178.5" width="1" height="1.5" fill="url(#mp)"/>
<rect x="28" y="180.5" width="1" height="1.5" fill="url(#mp)"/>
<rect x="29" y="180.5" width="17" height="1.5" fill="url(#mk)"/>
<rect x="46" y="180.5" width="1" height="1.5" fill="url(#mp)"/>
<rect x="47" y="180.5" width="1" height="1.5" fill="url(#mp)"/>
<rect x="49" y="180.5" width="1" height="1.5" fill="url(#mp)"/>
<rect x="50" y="180.5" width="1" height="1.5" fill="url(#mp)"/>
<rect x="51" y="180.5" width="1" height="1.5" fill="url(#mp)"/>
<rect x="28" y="182.5" width="1" height="1.5" fill="url(#mp)"/>
<rect x="29" y="182.5" width="17" height="1.5" fill="url(#mk)"/>
<rect x="46" y="182.5" width="1" height="1.5" fill="url(#mp)"/>
<rect x="47" y="182.5" width="1" height="1.5" fill="url(#mp)"/>
<rect x="49" y="182.5" width="1" height="1.5" fill="url(#mp)"/>
<rect x="50" y="182.5" width="1" height="1.5" fill="url(#mp)"/>
<rect x="51" y="182.5" width="1" height="1.5" fill="url(#mp)"/>
<rect x="28" y="184.5" width="1" height="1.5" fill="url(#mp)"/>
<rect x="29" y="184.5" width="9" height="1.5" fill="url(#mk)"/>
<rect x="38" y="184.5" width="1" height="1.5" fill="url(#mp)"/>
<rect x="39" y="184.5" width="1" height="1.5" fill="url(#mp)"/>
<rect x="41" y="184.5" width="1" height="1.5" fill="url(#mp)"/>
<rect x="42" y="184.5" width="5" height="1.5" fill="url(#ms)"/>
<rect x="47" y="184.5" width="1" height="1.5" fill="url(#mp)"/>
<rect x="48" y="184.5" width="1" height="1.5" fill="url(#mp)"/>
<rect x="28" y="186.5" width="1" height="1.5" fill="url(#mp)"/>
<rect x="29" y="186.5" width="24" height="1.5" fill="url(#mk)"/>
<rect x="53" y="186.5" width="1" height="1.5" fill="url(#mp)"/>
<rect x="54" y="186.5" width="1" height="1.5" fill="url(#mp)"/>
<rect x="56" y="186.5" width="1" height="1.5" fill="url(#mp)"/>
<rect x="57" y="186.5" width="5" height="1.5" fill="url(#ms)"/>
<rect x="62" y="186.5" width="1" height="1.5" fill="url(#mp)"/>
<rect x="63" y="186.5" width="1" height="1.5" fill="url(#mp)"/>
<rect x="28" y="188.5" width="1" height="1.5" fill="url(#mp)"/>
<rect x="29" y="188.5" width="8" height="1.5" fill="url(#mk)"/>
<rect x="37" y="188.5" width="1" height="1.5" fill="url(#mp)"/>
<rect x="38" y="188.5" width="1" height="1.5" fill="url(#mp)"/>
<rect x="40" y="188.5" width="1" height="1.5" fill="url(#mp)"/>
<rect x="41" y="188.5" width="1" height="1.5" fill="url(#mp)"/>
<rect x="42" y="188.5" width="1" height="1.5" fill="url(#mp)"/>
<rect x="28" y="190.5" width="1" height="1.5" fill="url(#mp)"/>
<rect x="29" y="190.5" width="13" height="1.5" fill="url(#mk)"/>
<rect x="42" y="190.5" width="1" height="1.5" fill="url(#mp)"/>
<rect x="43" y="190.5" width="1" height="1.5" fill="url(#mp)"/>
<rect x="45" y="190.5" width="1" height="1.5" fill="url(#mp)"/>
<rect x="46" y="190.5" width="1" height="1.5" fill="url(#mp)"/>
<rect x="47" y="190.5" width="1" height="1.5" fill="url(#mp)"/>
<rect x="28" y="192.5" width="1" height="1.5" fill="url(#mp)"/>
<rect x="29" y="192.5" width="18" height="1.5" fill="url(#mk)"/>
<rect x="47" y="192.5" width="1" height="1.5" fill="url(#mp)"/>
<rect x="48" y="192.5" width="1" height="1.5" fill="url(#mp)"/>
<rect x="50" y="192.5" width="1" height="1.5" fill="url(#mp)"/>
<rect x="51" y="192.5" width="5" height="1.5" fill="url(#ms)"/>
<rect x="56" y="192.5" width="1" height="1.5" fill="url(#mp)"/>
<rect x="57" y="192.5" width="1" height="1.5" fill="url(#mp)"/>
<rect x="24" y="194.5" width="1" height="1.5" fill="url(#mp)"/>
<rect x="20" y="196.5" width="2" height="1.5" fill="url(#mp)"/>
<rect x="20" y="198.5" width="1" height="1.5" fill="url(#mp)"/>
<rect x="24" y="200.5" width="1" height="1.5" fill="url(#mp)"/>
<rect x="25" y="200.5" width="9" height="1.5" fill="url(#mk)"/>
<rect x="34" y="200.5" width="1" height="1.5" fill="url(#mp)"/>
<rect x="35" y="200.5" width="1" height="1.5" fill="url(#mp)"/>
<rect x="37" y="200.5" width="1" height="1.5" fill="url(#mp)"/>
<rect x="38" y="200.5" width="37" height="1.5" fill="url(#ms)"/>
<rect x="75" y="200.5" width="1" height="1.5" fill="url(#mp)"/>
<rect x="76" y="200.5" width="1" height="1.5" fill="url(#mp)"/>
<rect x="24" y="202.5" width="1" height="1.5" fill="url(#mp)"/>
<rect x="25" y="202.5" width="10" height="1.5" fill="url(#mk)"/>
<rect x="35" y="202.5" width="1" height="1.5" fill="url(#mp)"/>
<rect x="36" y="202.5" width="1" height="1.5" fill="url(#mp)"/>
<rect x="38" y="202.5" width="1" height="1.5" fill="url(#mp)"/>
<rect x="28" y="204.5" width="1" height="1.5" fill="url(#mp)"/>
<rect x="29" y="204.5" width="2" height="1.5" fill="url(#mk)"/>
<rect x="31" y="204.5" width="1" height="1.5" fill="url(#mp)"/>
<rect x="32" y="204.5" width="1" height="1.5" fill="url(#mp)"/>
<rect x="34" y="204.5" width="1" height="1.5" fill="url(#mp)"/>
<rect x="35" y="204.5" width="32" height="1.5" fill="url(#ms)"/>
<rect x="67" y="204.5" width="1" height="1.5" fill="url(#mp)"/>
<rect x="68" y="204.5" width="1" height="1.5" fill="url(#mp)"/>
<rect x="28" y="206.5" width="1" height="1.5" fill="url(#mp)"/>
<rect x="29" y="206.5" width="5" height="1.5" fill="url(#mk)"/>
<rect x="34" y="206.5" width="1" height="1.5" fill="url(#mp)"/>
<rect x="35" y="206.5" width="1" height="1.5" fill="url(#mp)"/>
<rect x="37" y="206.5" width="1" height="1.5" fill="url(#mp)"/>
<rect x="38" y="206.5" width="5" height="1.5" fill="url(#ms)"/>
<rect x="43" y="206.5" width="1" height="1.5" fill="url(#mp)"/>
<rect x="44" y="206.5" width="1" height="1.5" fill="url(#mp)"/>
<rect x="28" y="208.5" width="1" height="1.5" fill="url(#mp)"/>
<rect x="29" y="208.5" width="9" height="1.5" fill="url(#mk)"/>
<rect x="38" y="208.5" width="1" height="1.5" fill="url(#mp)"/>
<rect x="39" y="208.5" width="1" height="1.5" fill="url(#mp)"/>
<rect x="41" y="208.5" width="1" height="1.5" fill="url(#mp)"/>
<rect x="42" y="208.5" width="3" height="1.5" fill="url(#ms)"/>
<rect x="45" y="208.5" width="1" height="1.5" fill="url(#mp)"/>
<rect x="46" y="208.5" width="1" height="1.5" fill="url(#mp)"/>
<rect x="28" y="210.5" width="1" height="1.5" fill="url(#mp)"/>
<rect x="29" y="210.5" width="9" height="1.5" fill="url(#mk)"/>
<rect x="38" y="210.5" width="1" height="1.5" fill="url(#mp)"/>
<rect x="39" y="210.5" width="1" height="1.5" fill="url(#mp)"/>
<rect x="41" y="210.5" width="1" height="1.5" fill="url(#mp)"/>
<rect x="42" y="210.5" width="1" height="1.5" fill="url(#mp)"/>
<rect x="43" y="210.5" width="1" height="1.5" fill="url(#mp)"/>
<rect x="28" y="212.5" width="1" height="1.5" fill="url(#mp)"/>
<rect x="29" y="212.5" width="8" height="1.5" fill="url(#mk)"/>
<rect x="37" y="212.5" width="1" height="1.5" fill="url(#mp)"/>
<rect x="38" y="212.5" width="1" height="1.5" fill="url(#mp)"/>
<rect x="40" y="212.5" width="1" height="1.5" fill="url(#mp)"/>
<rect x="41" y="212.5" width="4" height="1.5" fill="url(#ms)"/>
<rect x="45" y="212.5" width="1" height="1.5" fill="url(#mp)"/>
<rect x="46" y="212.5" width="1" height="1.5" fill="url(#mp)"/>
<rect x="24" y="214.5" width="1" height="1.5" fill="url(#mp)"/>
<rect x="20" y="216.5" width="3" height="1.5" fill="url(#mp)"/>
<rect x="20" y="218.5" width="1" height="1.5" fill="url(#mp)"/>
<rect x="21" y="218.5" width="10" height="1.5" fill="url(#mk)"/>
<rect x="31" y="218.5" width="1" height="1.5" fill="url(#mp)"/>
<rect x="32" y="218.5" width="1" height="1.5" fill="url(#mp)"/>
<rect x="34" y="218.5" width="1" height="1.5" fill="url(#mp)"/>
<rect x="24" y="220.5" width="1" height="1.5" fill="url(#mp)"/>
<rect x="25" y="220.5" width="4" height="1.5" fill="url(#mk)"/>
<rect x="29" y="220.5" width="1" height="1.5" fill="url(#mp)"/>
<rect x="30" y="220.5" width="1" height="1.5" fill="url(#mp)"/>
<rect x="32" y="220.5" width="1" height="1.5" fill="url(#mp)"/>
<rect x="33" y="220.5" width="1" height="1.5" fill="url(#mp)"/>
<rect x="34" y="220.5" width="1" height="1.5" fill="url(#mp)"/>
<rect x="24" y="222.5" width="1" height="1.5" fill="url(#mp)"/>
<rect x="25" y="222.5" width="2" height="1.5" fill="url(#mk)"/>
<rect x="27" y="222.5" width="1" height="1.5" fill="url(#mp)"/>
<rect x="28" y="222.5" width="1" height="1.5" fill="url(#mp)"/>
<rect x="30" y="222.5" width="1" height="1.5" fill="url(#mp)"/>
<rect x="31" y="222.5" width="13" height="1.5" fill="url(#ms)"/>
<rect x="44" y="222.5" width="1" height="1.5" fill="url(#mp)"/>
<rect x="45" y="222.5" width="1" height="1.5" fill="url(#mp)"/>
<rect x="24" y="224.5" width="1" height="1.5" fill="url(#mp)"/>
<rect x="25" y="224.5" width="5" height="1.5" fill="url(#mk)"/>
<rect x="30" y="224.5" width="1" height="1.5" fill="url(#mp)"/>
<rect x="31" y="224.5" width="1" height="1.5" fill="url(#mp)"/>
<rect x="33" y="224.5" width="1" height="1.5" fill="url(#mp)"/>
<rect x="34" y="224.5" width="7" height="1.5" fill="url(#ms)"/>
<rect x="41" y="224.5" width="1" height="1.5" fill="url(#mp)"/>
<rect x="20" y="226.5" width="1" height="1.5" fill="url(#mp)"/>
<rect x="16" y="228.5" width="2" height="1.5" fill="url(#mp)"/>
<rect x="16" y="230.5" width="1" height="1.5" fill="url(#mp)"/>
<rect x="20" y="232.5" width="1" height="1.5" fill="url(#mp)"/>
<rect x="21" y="232.5" width="9" height="1.5" fill="url(#mk)"/>
<rect x="30" y="232.5" width="1" height="1.5" fill="url(#mp)"/>
<rect x="31" y="232.5" width="1" height="1.5" fill="url(#mp)"/>
<rect x="33" y="232.5" width="1" height="1.5" fill="url(#mp)"/>
<rect x="34" y="232.5" width="46" height="1.5" fill="url(#ms)"/>
<rect x="80" y="232.5" width="1" height="1.5" fill="url(#mp)"/>
<rect x="81" y="232.5" width="1" height="1.5" fill="url(#mp)"/>
<rect x="20" y="234.5" width="1" height="1.5" fill="url(#mp)"/>
<rect x="21" y="234.5" width="5" height="1.5" fill="url(#mk)"/>
<rect x="26" y="234.5" width="1" height="1.5" fill="url(#mp)"/>
<rect x="27" y="234.5" width="1" height="1.5" fill="url(#mp)"/>
<rect x="29" y="234.5" width="2" height="1.5" fill="url(#mp)"/>
<rect x="24" y="236.5" width="1" height="1.5" fill="url(#mp)"/>
<rect x="25" y="236.5" width="9" height="1.5" fill="url(#mk)"/>
<rect x="34" y="236.5" width="1" height="1.5" fill="url(#mp)"/>
<rect x="35" y="236.5" width="1" height="1.5" fill="url(#mp)"/>
<rect x="37" y="236.5" width="1" height="1.5" fill="url(#mp)"/>
<rect x="38" y="236.5" width="40" height="1.5" fill="url(#ms)"/>
<rect x="78" y="236.5" width="1" height="1.5" fill="url(#mp)"/>
<rect x="79" y="236.5" width="1" height="1.5" fill="url(#mp)"/>
<rect x="24" y="238.5" width="1" height="1.5" fill="url(#mp)"/>
<rect x="25" y="238.5" width="10" height="1.5" fill="url(#mk)"/>
<rect x="35" y="238.5" width="1" height="1.5" fill="url(#mp)"/>
<rect x="36" y="238.5" width="1" height="1.5" fill="url(#mp)"/>
<rect x="38" y="238.5" width="1" height="1.5" fill="url(#mp)"/>
<rect x="28" y="240.5" width="1" height="1.5" fill="url(#mp)"/>
<rect x="29" y="240.5" width="2" height="1.5" fill="url(#mk)"/>
<rect x="31" y="240.5" width="1" height="1.5" fill="url(#mp)"/>
<rect x="32" y="240.5" width="1" height="1.5" fill="url(#mp)"/>
<rect x="34" y="240.5" width="1" height="1.5" fill="url(#mp)"/>
<rect x="35" y="240.5" width="1" height="1.5" fill="url(#mp)"/>
<rect x="36" y="240.5" width="1" height="1.5" fill="url(#mp)"/>
<rect x="38" y="240.5" width="1" height="1.5" fill="url(#mp)"/>
<rect x="39" y="240.5" width="5" height="1.5" fill="url(#mk)"/>
<rect x="44" y="240.5" width="1" height="1.5" fill="url(#mp)"/>
<rect x="45" y="240.5" width="1" height="1.5" fill="url(#mp)"/>
<rect x="47" y="240.5" width="1" height="1.5" fill="url(#mp)"/>
<rect x="48" y="240.5" width="1" height="1.5" fill="url(#ms)"/>
<rect x="49" y="240.5" width="1" height="1.5" fill="url(#mp)"/>
<rect x="50" y="240.5" width="1" height="1.5" fill="url(#mp)"/>
<rect x="28" y="242.5" width="1" height="1.5" fill="url(#mp)"/>
<rect x="29" y="242.5" width="5" height="1.5" fill="url(#mk)"/>
<rect x="34" y="242.5" width="1" height="1.5" fill="url(#mp)"/>
<rect x="35" y="242.5" width="1" height="1.5" fill="url(#mp)"/>
<rect x="37" y="242.5" width="1" height="1.5" fill="url(#mp)"/>
<rect x="38" y="242.5" width="1" height="1.5" fill="url(#mp)"/>
<rect x="39" y="242.5" width="1" height="1.5" fill="url(#mp)"/>
<rect x="24" y="244.5" width="1" height="1.5" fill="url(#mp)"/>
<rect x="20" y="246.5" width="3" height="1.5" fill="url(#mp)"/>
<rect x="20" y="248.5" width="1" height="1.5" fill="url(#mp)"/>
<rect x="21" y="248.5" width="10" height="1.5" fill="url(#mk)"/>
<rect x="31" y="248.5" width="1" height="1.5" fill="url(#mp)"/>
<rect x="32" y="248.5" width="1" height="1.5" fill="url(#mp)"/>
<rect x="34" y="248.5" width="1" height="1.5" fill="url(#mp)"/>
<rect x="24" y="250.5" width="1" height="1.5" fill="url(#mp)"/>
<rect x="25" y="250.5" width="2" height="1.5" fill="url(#mk)"/>
<rect x="27" y="250.5" width="1" height="1.5" fill="url(#mp)"/>
<rect x="28" y="250.5" width="1" height="1.5" fill="url(#mp)"/>
<rect x="30" y="250.5" width="1" height="1.5" fill="url(#mp)"/>
<rect x="31" y="250.5" width="10" height="1.5" fill="url(#ms)"/>
<rect x="41" y="250.5" width="1" height="1.5" fill="url(#mp)"/>
<rect x="20" y="252.5" width="1" height="1.5" fill="url(#mp)"/>
<rect x="16" y="254.5" width="1" height="1.5" fill="url(#mp)"/>
<rect x="12" y="256.5" width="2" height="1.5" fill="url(#mp)"/>
<rect x="12" y="258.5" width="1" height="1.5" fill="url(#mp)"/>
<rect x="13" y="258.5" width="10" height="1.5" fill="url(#mk)"/>
<rect x="23" y="258.5" width="1" height="1.5" fill="url(#mp)"/>
<rect x="24" y="258.5" width="1" height="1.5" fill="url(#mp)"/>
<rect x="26" y="258.5" width="1" height="1.5" fill="url(#mp)"/>
<rect x="16" y="260.5" width="1" height="1.5" fill="url(#mp)"/>
<rect x="17" y="260.5" width="11" height="1.5" fill="url(#mk)"/>
<rect x="28" y="260.5" width="1" height="1.5" fill="url(#mp)"/>
<rect x="29" y="260.5" width="1" height="1.5" fill="url(#mp)"/>
<rect x="31" y="260.5" width="1" height="1.5" fill="url(#mp)"/>
<rect x="32" y="260.5" width="1" height="1.5" fill="url(#mp)"/>
<rect x="33" y="260.5" width="1" height="1.5" fill="url(#mp)"/>
<rect x="16" y="262.5" width="1" height="1.5" fill="url(#mp)"/>
<rect x="17" y="262.5" width="2" height="1.5" fill="url(#mk)"/>
<rect x="19" y="262.5" width="1" height="1.5" fill="url(#mp)"/>
<rect x="20" y="262.5" width="1" height="1.5" fill="url(#mp)"/>
<rect x="22" y="262.5" width="1" height="1.5" fill="url(#mp)"/>
<rect x="23" y="262.5" width="1" height="1.5" fill="url(#ms)"/>
<rect x="24" y="262.5" width="1" height="1.5" fill="url(#mp)"/>
<rect x="25" y="262.5" width="1" height="1.5" fill="url(#mp)"/>
<rect x="16" y="264.5" width="1" height="1.5" fill="url(#mp)"/>
<rect x="17" y="264.5" width="10" height="1.5" fill="url(#mk)"/>
<rect x="27" y="264.5" width="1" height="1.5" fill="url(#mp)"/>
<rect x="28" y="264.5" width="1" height="1.5" fill="url(#mp)"/>
<rect x="30" y="264.5" width="1" height="1.5" fill="url(#mp)"/>
<rect x="31" y="264.5" width="6" height="1.5" fill="url(#ms)"/>
<rect x="37" y="264.5" width="1" height="1.5" fill="url(#mp)"/>
<rect x="38" y="264.5" width="1" height="1.5" fill="url(#mp)"/>
<rect x="16" y="266.5" width="1" height="1.5" fill="url(#mp)"/>
<rect x="17" y="266.5" width="4" height="1.5" fill="url(#mk)"/>
<rect x="21" y="266.5" width="1" height="1.5" fill="url(#mp)"/>
<rect x="22" y="266.5" width="1" height="1.5" fill="url(#mp)"/>
<rect x="24" y="266.5" width="1" height="1.5" fill="url(#mp)"/>
<rect x="25" y="266.5" width="7" height="1.5" fill="url(#ms)"/>
<rect x="33" y="266.5" width="4" height="1.5" fill="url(#ms)"/>
<rect x="37" y="266.5" width="1" height="1.5" fill="url(#mp)"/>
<rect x="38" y="266.5" width="1" height="1.5" fill="url(#mp)"/>
<rect x="16" y="268.5" width="1" height="1.5" fill="url(#mp)"/>
<rect x="17" y="268.5" width="14" height="1.5" fill="url(#mk)"/>
<rect x="31" y="268.5" width="1" height="1.5" fill="url(#mp)"/>
<rect x="32" y="268.5" width="1" height="1.5" fill="url(#mp)"/>
<rect x="34" y="268.5" width="1" height="1.5" fill="url(#mp)"/>
<rect x="35" y="268.5" width="10" height="1.5" fill="url(#ms)"/>
<rect x="46" y="268.5" width="1" height="1.5" fill="url(#ms)"/>
<rect x="48" y="268.5" width="3" height="1.5" fill="url(#ms)"/>
<rect x="52" y="268.5" width="5" height="1.5" fill="url(#ms)"/>
<rect x="57" y="268.5" width="1" height="1.5" fill="url(#mp)"/>
<rect x="12" y="270.5" width="2" height="1.5" fill="url(#mp)"/>
<rect x="12" y="272.5" width="1" height="1.5" fill="url(#mp)"/>
<rect x="13" y="272.5" width="7" height="1.5" fill="url(#mk)"/>
<rect x="20" y="272.5" width="1" height="1.5" fill="url(#mp)"/>
<rect x="21" y="272.5" width="1" height="1.5" fill="url(#mp)"/>
<rect x="23" y="272.5" width="1" height="1.5" fill="url(#mp)"/>
<rect x="16" y="274.5" width="1" height="1.5" fill="url(#mp)"/>
<rect x="17" y="274.5" width="9" height="1.5" fill="url(#mk)"/>
<rect x="26" y="274.5" width="1" height="1.5" fill="url(#mp)"/>
<rect x="27" y="274.5" width="1" height="1.5" fill="url(#mp)"/>
<rect x="29" y="274.5" width="1" height="1.5" fill="url(#mp)"/>
<rect x="30" y="274.5" width="45" height="1.5" fill="url(#ms)"/>
<rect x="75" y="274.5" width="1" height="1.5" fill="url(#mp)"/>
<rect x="76" y="274.5" width="1" height="1.5" fill="url(#mp)"/>
<rect x="16" y="276.5" width="1" height="1.5" fill="url(#mp)"/>
<rect x="17" y="276.5" width="10" height="1.5" fill="url(#mk)"/>
<rect x="27" y="276.5" width="1" height="1.5" fill="url(#mp)"/>
<rect x="28" y="276.5" width="1" height="1.5" fill="url(#mp)"/>
<rect x="30" y="276.5" width="1" height="1.5" fill="url(#mp)"/>
<rect x="20" y="278.5" width="1" height="1.5" fill="url(#mp)"/>
<rect x="21" y="278.5" width="10" height="1.5" fill="url(#mk)"/>
<rect x="31" y="278.5" width="1" height="1.5" fill="url(#mp)"/>
<rect x="32" y="278.5" width="1" height="1.5" fill="url(#mp)"/>
<rect x="34" y="278.5" width="1" height="1.5" fill="url(#mp)"/>
<rect x="24" y="280.5" width="1" height="1.5" fill="url(#mp)"/>
<rect x="25" y="280.5" width="9" height="1.5" fill="url(#mk)"/>
<rect x="34" y="280.5" width="1" height="1.5" fill="url(#mp)"/>
<rect x="35" y="280.5" width="1" height="1.5" fill="url(#mp)"/>
<rect x="37" y="280.5" width="1" height="1.5" fill="url(#mp)"/>
<rect x="38" y="280.5" width="1" height="1.5" fill="url(#mp)"/>
<rect x="39" y="280.5" width="1" height="1.5" fill="url(#mp)"/>
<rect x="24" y="282.5" width="1" height="1.5" fill="url(#mp)"/>
<rect x="25" y="282.5" width="10" height="1.5" fill="url(#mk)"/>
<rect x="35" y="282.5" width="1" height="1.5" fill="url(#mp)"/>
<rect x="36" y="282.5" width="1" height="1.5" fill="url(#mp)"/>
<rect x="38" y="282.5" width="2" height="1.5" fill="url(#mp)"/>
<rect x="20" y="284.5" width="2" height="1.5" fill="url(#mp)"/>
<rect x="20" y="286.5" width="1" height="1.5" fill="url(#mp)"/>
<rect x="21" y="286.5" width="5" height="1.5" fill="url(#mk)"/>
<rect x="26" y="286.5" width="1" height="1.5" fill="url(#mp)"/>
<rect x="27" y="286.5" width="1" height="1.5" fill="url(#mp)"/>
<rect x="29" y="286.5" width="1" height="1.5" fill="url(#mp)"/>
<rect x="24" y="288.5" width="1" height="1.5" fill="url(#mp)"/>
<rect x="25" y="288.5" width="9" height="1.5" fill="url(#mk)"/>
<rect x="34" y="288.5" width="1" height="1.5" fill="url(#mp)"/>
<rect x="35" y="288.5" width="1" height="1.5" fill="url(#mp)"/>
<rect x="37" y="288.5" width="1" height="1.5" fill="url(#mp)"/>
<rect x="38" y="288.5" width="44" height="1.5" fill="url(#ms)"/>
<rect x="82" y="288.5" width="1" height="1.5" fill="url(#mp)"/>
<rect x="83" y="288.5" width="1" height="1.5" fill="url(#mp)"/>
<rect x="24" y="290.5" width="1" height="1.5" fill="url(#mp)"/>
<rect x="25" y="290.5" width="10" height="1.5" fill="url(#mk)"/>
<rect x="35" y="290.5" width="1" height="1.5" fill="url(#mp)"/>
<rect x="36" y="290.5" width="1" height="1.5" fill="url(#mp)"/>
<rect x="38" y="290.5" width="1" height="1.5" fill="url(#mp)"/>
<rect x="28" y="292.5" width="1" height="1.5" fill="url(#mp)"/>
<rect x="29" y="292.5" width="3" height="1.5" fill="url(#mk)"/>
<rect x="32" y="292.5" width="1" height="1.5" fill="url(#mp)"/>
<rect x="33" y="292.5" width="1" height="1.5" fill="url(#mp)"/>
<rect x="35" y="292.5" width="1" height="1.5" fill="url(#mp)"/>
<rect x="36" y="292.5" width="1" height="1.5" fill="url(#mp)"/>
<rect x="37" y="292.5" width="1" height="1.5" fill="url(#mp)"/>
<rect x="28" y="294.5" width="1" height="1.5" fill="url(#mp)"/>
<rect x="29" y="294.5" width="8" height="1.5" fill="url(#mk)"/>
<rect x="37" y="294.5" width="1" height="1.5" fill="url(#mp)"/>
<rect x="38" y="294.5" width="1" height="1.5" fill="url(#mp)"/>
<rect x="40" y="294.5" width="1" height="1.5" fill="url(#mp)"/>
<rect x="41" y="294.5" width="1" height="1.5" fill="url(#mp)"/>
<rect x="42" y="294.5" width="1" height="1.5" fill="url(#mp)"/>
<rect x="28" y="296.5" width="1" height="1.5" fill="url(#mp)"/>
<rect x="29" y="296.5" width="13" height="1.5" fill="url(#mk)"/>
<rect x="42" y="296.5" width="1" height="1.5" fill="url(#mp)"/>
<rect x="43" y="296.5" width="1" height="1.5" fill="url(#mp)"/>
<rect x="45" y="296.5" width="1" height="1.5" fill="url(#mp)"/>
<rect x="46" y="296.5" width="7" height="1.5" fill="url(#ms)"/>
<rect x="54" y="296.5" width="2" height="1.5" fill="url(#ms)"/>
<rect x="57" y="296.5" width="5" height="1.5" fill="url(#ms)"/>
<rect x="62" y="296.5" width="1" height="1.5" fill="url(#mp)"/>
<rect x="63" y="296.5" width="1" height="1.5" fill="url(#mp)"/>
<rect x="28" y="298.5" width="1" height="1.5" fill="url(#mp)"/>
<rect x="29" y="298.5" width="15" height="1.5" fill="url(#mk)"/>
<rect x="44" y="298.5" width="1" height="1.5" fill="url(#mp)"/>
<rect x="45" y="298.5" width="1" height="1.5" fill="url(#mp)"/>
<rect x="47" y="298.5" width="1" height="1.5" fill="url(#mp)"/>
<rect x="48" y="298.5" width="1" height="1.5" fill="url(#mp)"/>
<rect x="49" y="298.5" width="1" height="1.5" fill="url(#mp)"/>
<rect x="28" y="300.5" width="1" height="1.5" fill="url(#mp)"/>
<rect x="29" y="300.5" width="2" height="1.5" fill="url(#mk)"/>
<rect x="31" y="300.5" width="1" height="1.5" fill="url(#mp)"/>
<rect x="32" y="300.5" width="1" height="1.5" fill="url(#mp)"/>
<rect x="34" y="300.5" width="1" height="1.5" fill="url(#mp)"/>
<rect x="35" y="300.5" width="1" height="1.5" fill="url(#mp)"/>
<rect x="36" y="300.5" width="1" height="1.5" fill="url(#mp)"/>
<rect x="28" y="302.5" width="1" height="1.5" fill="url(#mp)"/>
<rect x="29" y="302.5" width="15" height="1.5" fill="url(#mk)"/>
<rect x="44" y="302.5" width="1" height="1.5" fill="url(#mp)"/>
<rect x="45" y="302.5" width="1" height="1.5" fill="url(#mp)"/>
<rect x="47" y="302.5" width="1" height="1.5" fill="url(#mp)"/>
<rect x="48" y="302.5" width="1" height="1.5" fill="url(#mp)"/>
<rect x="49" y="302.5" width="1" height="1.5" fill="url(#mp)"/>
<rect x="28" y="304.5" width="1" height="1.5" fill="url(#mp)"/>
<rect x="29" y="304.5" width="12" height="1.5" fill="url(#mk)"/>
<rect x="41" y="304.5" width="1" height="1.5" fill="url(#mp)"/>
<rect x="42" y="304.5" width="1" height="1.5" fill="url(#mp)"/>
<rect x="44" y="304.5" width="1" height="1.5" fill="url(#mp)"/>
<rect x="45" y="304.5" width="4" height="1.5" fill="url(#ms)"/>
<rect x="49" y="304.5" width="1" height="1.5" fill="url(#mp)"/>
<rect x="50" y="304.5" width="1" height="1.5" fill="url(#mp)"/>
<rect x="28" y="306.5" width="1" height="1.5" fill="url(#mp)"/>
<rect x="29" y="306.5" width="9" height="1.5" fill="url(#mk)"/>
<rect x="38" y="306.5" width="1" height="1.5" fill="url(#mp)"/>
<rect x="39" y="306.5" width="1" height="1.5" fill="url(#mp)"/>
<rect x="41" y="306.5" width="1" height="1.5" fill="url(#mp)"/>
<rect x="42" y="306.5" width="1" height="1.5" fill="url(#mp)"/>
<rect x="43" y="306.5" width="1" height="1.5" fill="url(#mp)"/>
<rect x="28" y="308.5" width="1" height="1.5" fill="url(#mp)"/>
<rect x="29" y="308.5" width="11" height="1.5" fill="url(#mk)"/>
<rect x="40" y="308.5" width="1" height="1.5" fill="url(#mp)"/>
<rect x="41" y="308.5" width="1" height="1.5" fill="url(#mp)"/>
<rect x="43" y="308.5" width="1" height="1.5" fill="url(#mp)"/>
<rect x="44" y="308.5" width="5" height="1.5" fill="url(#ms)"/>
<rect x="49" y="308.5" width="1" height="1.5" fill="url(#mp)"/>
<rect x="24" y="310.5" width="1" height="1.5" fill="url(#mp)"/>
<rect x="20" y="312.5" width="2" height="1.5" fill="url(#mp)"/>
<rect x="20" y="314.5" width="1" height="1.5" fill="url(#mp)"/>
<rect x="21" y="314.5" width="19" height="1.5" fill="url(#mk)"/>
<rect x="40" y="314.5" width="1" height="1.5" fill="url(#mp)"/>
<rect x="41" y="314.5" width="1" height="1.5" fill="url(#mp)"/>
<rect x="43" y="314.5" width="1" height="1.5" fill="url(#mp)"/>
<rect x="44" y="314.5" width="1" height="1.5" fill="url(#mp)"/>
<rect x="16" y="316.5" width="1" height="1.5" fill="url(#mp)"/>
<rect x="12" y="318.5" width="1" height="1.5" fill="url(#mp)"/>
<rect x="8" y="320.5" width="1" height="1.5" fill="url(#mp)"/>
<rect x="8" y="8.2" width="7" height="2.2" fill="#e5201a"/>
<rect x="16" y="8.2" width="4" height="2.2" fill="#e5201a"/>
<rect x="8" y="114.2" width="7" height="2.2" fill="#e5201a"/>
<rect x="20" y="116.2" width="7" height="2.2" fill="#e5201a"/>
<rect x="8" y="134.2" width="7" height="2.2" fill="#e5201a"/>
<rect x="16" y="134.2" width="5" height="2.2" fill="#e5201a"/>
<rect x="21" y="134.2" width="10" height="2.2" fill="#a04040"/>
<rect x="8" y="144.2" width="1" height="2.2" fill="#e5201a"/>
</svg>
<div class="a" style="left:2190.0px;top:91.0px;width:1.0px;height:1301.0px;background:#d0d0d0"></div>
<div class="a" style="left:2191.0px;top:126.0px;width:15.0px;height:305.0px;background:#9bdfd2"></div>
<div class="a" style="left:2201.0px;top:120.0px;width:5.0px;height:6.0px;background:#fe5555"></div>
<div class="a" style="left:2201.0px;top:431.0px;width:5.0px;height:6.0px;background:#fe5555"></div>
<div class="a" style="left:2191.0px;top:437.0px;width:15.0px;height:53.0px;background:#9ccdf9"></div>
<div class="a" style="left:2201.0px;top:437.0px;width:5.0px;height:7.0px;background:#9d80b0"></div>
<div class="a" style="left:2196.0px;top:472.0px;width:5.0px;height:6.0px;background:#7caad8"></div>
<div class="a" style="left:2201.0px;top:490.0px;width:5.0px;height:6.0px;background:#fe5555"></div>
<div class="a" style="left:2201.0px;top:519.0px;width:5.0px;height:6.0px;background:#fe5555"></div>
<div class="a" style="left:2190.0px;top:91.0px;width:16.0px;height:352.8px;background:rgba(100,100,100,0.4)"></div>
<div class="a" style="left:2191.0px;top:166.0px;width:15.0px;height:2.0px;background:#6f6f6f"></div>
<div class="a" style="left:2196.0px;top:168.0px;width:5.0px;height:5.0px;background:#6f9c92"></div>
</div></div>
<div class="a ann1" style="left:536.5px;top:995.5px">Modified Form in v1</div>
<div class="a ann2" style="left:1615px;top:420.8px">Added Calendar in v2</div>
<div class="a" style="left:0;top:1392px;width:2206px;height:25px;background:#705697"></div>
<div class="a" style="left:0;top:1392px;width:37px;height:25px;background:#4e3c69"></div>
<svg class="a" style="left:9.0px;top:1397.0px" width="16" height="16" viewBox="0 0 16 16"><g fill="none" stroke="#fff" stroke-width="1.3"><path d="M2 14l5-5-5-5" transform="translate(0,2) scale(0.9)"/><path d="M14 1l-5 5 5 5" transform="translate(1,0) scale(0.9)"/></g></svg>
<svg class="a" style="left:47.0px;top:1396.0px" width="14" height="18" viewBox="0 0 14 18"><g fill="none" stroke="#fff" stroke-width="1.3"><circle cx="3" cy="3" r="2.2"/><circle cx="3" cy="15" r="2.2"/><circle cx="11.5" cy="6" r="2.2"/><path d="M3 5.2V12.8M11.5 8.2c0 3-3 4.5-8 5"/></g></svg>
<span class="a st" style="left:67.6px;top:1397.0px;">meeting_3!</span>
<span class="a st" style="left:216.0px;top:1397.0px;">Sign in to Jira</span>
<span class="a st" style="left:345.6px;top:1397.0px;">No active issue</span>
<span class="a st" style="left:485.7px;top:1397.0px;">Sign in to Bitbucket</span>
<span class="a st" style="left:654.0px;top:1397.0px;">43</span>
<span class="a st" style="left:696.0px;top:1397.0px;">9</span>
<span class="a st" style="left:745.6px;top:1397.0px;">Connect</span>
<span class="a st" style="left:1735.0px;top:1397.0px;">Ln 13, Col 43</span>
<span class="a st" style="left:1840.7px;top:1397.0px;">Spaces: 4</span>
<span class="a st" style="left:1925.3px;top:1397.0px;">UTF-8</span>
<span class="a st" style="left:1987.7px;top:1397.0px;">CRLF</span>
<span class="a st" style="left:2042.7px;top:1397.0px;">JSON</span>
<svg class="a" style="left:159.0px;top:1397.0px" width="17" height="15" viewBox="0 0 17 15"><g fill="none" stroke="#fff" stroke-width="1.3"><path d="M5 12.5H4a3.5 3.5 0 0 1 -0.5-7 5 5 0 0 1 9.5-1 3.5 3.5 0 0 1 0.5 8H12"/><path d="M8.5 14V7M6 9.5l2.5-2.5 2.5 2.5"/></g></svg>
<svg class="a" style="left:196.5px;top:1396.5px" width="15" height="17" viewBox="0 0 15 17"><g fill="none" stroke="#fff" stroke-width="1.3" stroke-width="1.15" stroke-linejoin="round"><path d="M1.3 2.2H10.9V4M10.9 11.5V13.6H7.2"/><path d="M1.3 2.9V13.3L6.7 14.9V4.5Z"/><path d="M14 8.1H8.4M10.1 5.9L8.2 8.1L10.1 10.2"/></g></svg>
<svg class="a" style="left:466.0px;top:1396.5px" width="15" height="17" viewBox="0 0 15 17"><g fill="none" stroke="#fff" stroke-width="1.3" stroke-width="1.15" stroke-linejoin="round"><path d="M1.3 2.2H10.9V4M10.9 11.5V13.6H7.2"/><path d="M1.3 2.9V13.3L6.7 14.9V4.5Z"/><path d="M14 8.1H8.4M10.1 5.9L8.2 8.1L10.1 10.2"/></g></svg>
<svg class="a" style="left:329.0px;top:1399.0px" width="9" height="13" viewBox="0 0 9 13"><path d="M1.5 1l6 5.5-6 5.5" fill="none" stroke="#fff" stroke-width="1.3"/></svg>
<svg class="a" style="left:633.5px;top:1396.5px" width="16" height="16" viewBox="0 0 16 16"><g fill="none" stroke="#fff" stroke-width="1.3"><circle cx="8" cy="8" r="6.8"/><path d="M5.3 5.3l5.4 5.4M10.7 5.3l-5.4 5.4"/></g></svg>
<svg class="a" style="left:676.5px;top:1396.5px" width="16" height="16" viewBox="0 0 16 16"><g fill="none" stroke="#fff" stroke-width="1.3"><path d="M8 1.5L15 14.5H1z"/><path d="M8 6v4.5M8 12v1"/></g></svg>
<svg class="a" style="left:727.0px;top:1396.5px" width="13" height="17" viewBox="0 0 13 17"><g fill="none" stroke="#fff" stroke-width="1.3"><ellipse cx="6.5" cy="3" rx="5.5" ry="2"/><path d="M1 3v11c0 1.1 2.5 2 5.5 2s5.5-.9 5.5-2V3"/></g></svg>
<svg class="a" style="left:2099.5px;top:1397.0px" width="17" height="16" viewBox="0 0 17 16"><path d="M4.7 1.6H14.9L15.2 7.4L13.1 7.9L5.7 13.4L5.2 9.7L1.8 8.9L1.5 7.1Z" fill="none" stroke="#fff" stroke-width="1.2" stroke-linejoin="round"/></svg>
<svg class="a" style="left:2135.5px;top:1396.0px" width="17" height="17" viewBox="0 0 17 17"><g fill="none" stroke="#fff" stroke-width="1.3" stroke-width="1.2"><circle cx="6" cy="7.6" r="3.1"/><path d="M1 15.6Q6 9 11 15.6"/><path d="M4.7 3.9V1.3H15.5V8.4H13.4L11.3 10.2"/></g></svg>
<svg class="a" style="left:2173.0px;top:1396.0px" width="17" height="17" viewBox="0 0 17 17"><g fill="none" stroke="#fff" stroke-width="1.3" stroke-width="1.2"><path d="M6.4 1.3Q2.2 2.5 2.2 7V12.8H12.4V9.9"/><path d="M5.8 14.2Q7 15.6 8.2 14.2"/></g><circle cx="11.1" cy="4.1" r="2.9" fill="#fff"/></svg>
<svg class="a" style="left:751px;top:628px" width="11" height="20"><path d="M2 1.5c2 0 3.5 0.5 3.5 2V16.5c0 1.5-1.5 2-3.5 2M9 1.5c-2 0-3.5 0.5-3.5 2V16.5c0 1.5 1.5 2 3.5 2M3.5 10h4" fill="none" stroke="#fff" stroke-width="2.6" opacity="0.8"/><path d="M2 1.5c2 0 3.5 0.5 3.5 2V16.5c0 1.5-1.5 2-3.5 2M9 1.5c-2 0-3.5 0.5-3.5 2V16.5c0 1.5 1.5 2 3.5 2M3.5 10h4" fill="none" stroke="#000" stroke-width="1.3"/></svg>
</body></html>
